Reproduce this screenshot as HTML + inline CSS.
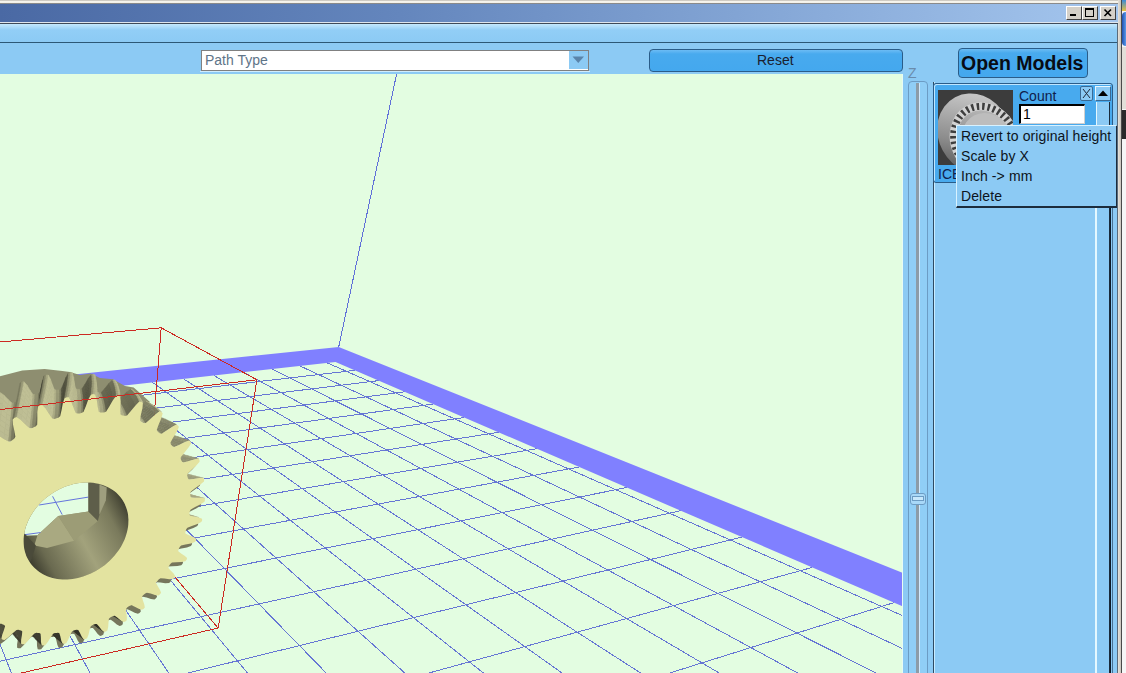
<!DOCTYPE html><html><head><meta charset="utf-8"><style>
*{margin:0;padding:0;box-sizing:border-box}
body{width:1126px;height:673px;overflow:hidden;position:relative;background:#8ccaf4;font-family:"Liberation Sans",sans-serif}
.a{position:absolute}
</style></head><body><div class="a" style="left:0;top:0;width:1126px;height:4px;background:linear-gradient(#cfcbc3 0,#cfcbc3 1px,#f7f5ee 1px,#f2f0e8 3px,#8a8a8a 3px)"></div><div class="a" style="left:0;top:4px;width:1118px;height:18px;background:linear-gradient(90deg,#4a69a4 0,#6486bd 400px,#a4c6ee 1118px)"></div><div class="a" style="left:0;top:22px;width:1118px;height:1px;background:#dfe6ee"></div><div class="a" style="left:0;top:23px;width:1118px;height:1px;background:#3f4a58"></div><div class="a" style="left:1066px;top:6px;width:16px;height:14px;background:#d4d0c8;border-top:1px solid #fff;border-left:1px solid #fff;border-right:1px solid #404040;border-bottom:1px solid #404040"></div><div class="a" style="left:1082px;top:6px;width:16px;height:14px;background:#d4d0c8;border-top:1px solid #fff;border-left:1px solid #fff;border-right:1px solid #404040;border-bottom:1px solid #404040"></div><div class="a" style="left:1100px;top:6px;width:16px;height:14px;background:#d4d0c8;border-top:1px solid #fff;border-left:1px solid #fff;border-right:1px solid #404040;border-bottom:1px solid #404040"></div><div class="a" style="left:1070px;top:14px;width:6px;height:2px;background:#000"></div><div class="a" style="left:1085px;top:8px;width:9px;height:9px;border:1px solid #000;border-top-width:2px"></div><svg class="a" style="left:1103px;top:8px" width="10" height="10"><path d="M1.5 1.5 L8 8 M8 1.5 L1.5 8" stroke="#000" stroke-width="1.6"/></svg><div class="a" style="left:0;top:24px;width:1118px;height:18px;background:linear-gradient(#c4e8fd,#92cef6 6px,#8ccaf4)"></div><div class="a" style="left:0;top:42px;width:1118px;height:1px;background:#2c5876"></div><div class="a" style="left:200px;top:71px;width:390px;height:1px;background:#d0ecfc"></div><div class="a" style="left:201px;top:50px;width:388px;height:21px;background:#fff;border:1px solid #808080;border-right-color:#808080"></div><div class="a" style="left:569px;top:51px;width:19px;height:18px;background:#8ccaf4"></div><svg class="a" style="left:572px;top:56px" width="13" height="8"><path d="M0.5 0.5 L12 0.5 L6.25 7 Z" fill="#5a84aa"/></svg><div class="a" style="left:205px;top:52px;font-size:14px;color:#5e7488;line-height:16px">Path Type</div><div class="a" style="left:649px;top:49px;width:254px;height:23px;border:1px solid #2a5c88;border-radius:4px;background:linear-gradient(#6cbcf4,#48aaee 4px,#44a8ee)"></div><div class="a" style="left:757px;top:52px;font-size:14px;color:#1a2030;line-height:16px">Reset</div><svg class="a" style="left:0;top:74px" width="903" height="599" viewBox="0 0 903 599"><rect width="903" height="599" fill="#e3fde1"/><g stroke="#6676d4" stroke-width="1.0" fill="none" shape-rendering="crispEdges"><line x1="327.22" y1="288.88" x2="17190.68" y2="7697.76"/><line x1="300.01" y1="291.92" x2="16085.04" y2="7696.60"/><line x1="272.08" y1="295.04" x2="14979.40" y2="7695.44"/><line x1="243.39" y1="298.24" x2="13873.76" y2="7694.28"/><line x1="213.91" y1="301.53" x2="12768.12" y2="7693.11"/><line x1="183.62" y1="304.92" x2="11662.48" y2="7691.95"/><line x1="152.47" y1="308.39" x2="10556.84" y2="7690.79"/><line x1="120.43" y1="311.97" x2="9451.20" y2="7689.63"/><line x1="87.45" y1="315.65" x2="8345.56" y2="7688.47"/><line x1="53.51" y1="319.44" x2="7239.92" y2="7687.31"/><line x1="18.56" y1="323.35" x2="6134.28" y2="7686.15"/><line x1="-17.46" y1="327.37" x2="5028.64" y2="7684.98"/><line x1="-54.59" y1="331.51" x2="3923.00" y2="7683.82"/><line x1="-92.88" y1="335.79" x2="2817.36" y2="7682.66"/><line x1="-132.38" y1="340.20" x2="1711.72" y2="7681.50"/><line x1="-173.17" y1="344.75" x2="606.08" y2="7680.34"/><line x1="-215.29" y1="349.46" x2="-499.56" y2="7679.18"/><line x1="-258.81" y1="354.32" x2="-1605.20" y2="7678.01"/><line x1="-303.82" y1="359.34" x2="-2710.84" y2="7676.85"/><line x1="-350.38" y1="364.54" x2="-3816.48" y2="7675.69"/><line x1="-398.57" y1="369.92" x2="-4922.12" y2="7674.53"/><line x1="-448.49" y1="375.50" x2="-6027.76" y2="7673.37"/><line x1="-500.23" y1="381.27" x2="-7133.40" y2="7672.21"/><line x1="-553.89" y1="387.26" x2="-8239.04" y2="7671.05"/><line x1="-609.57" y1="393.48" x2="-9344.68" y2="7669.88"/><line x1="-667.40" y1="399.94" x2="-10450.32" y2="7668.72"/><line x1="-727.51" y1="406.65" x2="-11555.96" y2="7667.56"/><line x1="-790.02" y1="413.63" x2="-12661.60" y2="7666.40"/><line x1="-855.08" y1="420.90" x2="-13767.24" y2="7665.24"/><line x1="-922.86" y1="428.46" x2="-14872.88" y2="7664.08"/><line x1="-993.54" y1="436.35" x2="-15978.52" y2="7662.91"/><line x1="-1067.29" y1="444.59" x2="-17084.16" y2="7661.75"/><line x1="-1144.32" y1="453.19" x2="-18189.80" y2="7660.59"/><line x1="-1224.87" y1="462.18" x2="-19295.44" y2="7659.43"/><line x1="-1309.16" y1="471.60" x2="-20401.08" y2="7658.27"/><line x1="-1397.48" y1="481.46" x2="-21506.72" y2="7657.11"/><line x1="-1490.12" y1="491.80" x2="-22612.36" y2="7655.95"/><line x1="-1587.40" y1="502.66" x2="-23718.00" y2="7654.78"/><line x1="-1689.68" y1="514.08" x2="-24823.64" y2="7653.62"/><line x1="354.93" y1="296.33" x2="-62283.01" y2="7614.27"/><line x1="378.77" y1="306.60" x2="-58910.83" y2="7617.81"/><line x1="404.74" y1="317.79" x2="-55538.65" y2="7621.35"/><line x1="433.13" y1="330.02" x2="-52166.46" y2="7624.90"/><line x1="464.29" y1="343.45" x2="-48794.28" y2="7628.44"/><line x1="498.67" y1="358.26" x2="-45422.10" y2="7631.98"/><line x1="536.77" y1="374.67" x2="-42049.92" y2="7635.52"/><line x1="579.24" y1="392.97" x2="-38677.73" y2="7639.07"/><line x1="626.88" y1="413.50" x2="-35305.55" y2="7642.61"/><line x1="680.69" y1="436.69" x2="-31933.37" y2="7646.15"/><line x1="741.95" y1="463.08" x2="-28561.19" y2="7649.70"/><line x1="812.33" y1="493.41" x2="-25189.00" y2="7653.24"/><line x1="894.03" y1="528.61" x2="-21816.82" y2="7656.78"/><line x1="990.01" y1="569.96" x2="-18444.64" y2="7660.32"/><line x1="1104.37" y1="619.24" x2="-15072.45" y2="7663.87"/><line x1="1242.98" y1="678.96" x2="-11700.27" y2="7667.41"/><line x1="1414.42" y1="752.83" x2="-8328.09" y2="7670.95"/><line x1="1631.97" y1="846.57" x2="-4955.91" y2="7674.49"/><line x1="1917.08" y1="969.42" x2="-1583.72" y2="7678.04"/><line x1="2307.03" y1="1137.44" x2="1788.46" y2="7681.58"/><line x1="2872.68" y1="1381.16" x2="5160.64" y2="7685.12"/><line x1="3767.28" y1="1766.62" x2="8532.82" y2="7688.66"/><line x1="5395.46" y1="2468.17" x2="11905.01" y2="7692.21"/><line x1="9286.51" y1="4144.73" x2="15277.19" y2="7695.75"/></g><polygon fill="#8080ff" points="-6475.52,1048.46 335.51,287.96 8677.29,3882.23 10598.00,4382.66 338.70,272.90 -6802.20,1019.13"/><line x1="338.70" y1="272.90" x2="1137.30" y2="-3490.40" stroke="#6070d8" stroke-width="1" shape-rendering="crispEdges"/><line x1="144.06" y1="466.56" x2="161.23" y2="253.83" stroke="#cc2a22" stroke-width="1.0" shape-rendering="crispEdges"/><line x1="144.06" y1="466.56" x2="218.16" y2="554.10" stroke="#cc2a22" stroke-width="1.0" shape-rendering="crispEdges"/><line x1="161.23" y1="253.83" x2="256.87" y2="305.77" stroke="#cc2a22" stroke-width="1.0" shape-rendering="crispEdges"/><line x1="161.23" y1="253.83" x2="-75.69" y2="274.59" stroke="#cc2a22" stroke-width="1.0" shape-rendering="crispEdges"/><line x1="144.06" y1="466.56" x2="-54.64" y2="502.64" stroke="#cc2a22" stroke-width="1.0" shape-rendering="crispEdges"/><defs><clipPath id="hc"><path d="M128.4,448.2 L128.3,450.7 L128.0,453.1 L127.6,455.6 L127.0,458.0 L126.3,460.5 L125.5,462.9 L124.6,465.4 L123.5,467.7 L122.4,470.1 L121.1,472.4 L119.7,474.7 L118.1,477.0 L116.5,479.1 L114.8,481.3 L113.0,483.3 L111.1,485.3 L109.1,487.2 L107.1,489.1 L104.9,490.9 L102.7,492.5 L100.4,494.1 L98.1,495.6 L95.7,497.0 L93.2,498.3 L90.8,499.5 L88.2,500.6 L85.7,501.6 L83.1,502.5 L80.5,503.3 L77.9,503.9 L75.3,504.5 L72.6,504.9 L70.0,505.2 L67.4,505.4 L64.8,505.4 L62.3,505.4 L59.7,505.2 L57.2,504.9 L54.8,504.4 L52.4,503.9 L50.0,503.2 L47.7,502.4 L45.5,501.4 L43.4,500.4 L41.3,499.2 L39.3,498.0 L37.4,496.6 L35.7,495.1 L34.0,493.5 L32.4,491.8 L30.9,490.0 L29.6,488.1 L28.4,486.1 L27.3,484.0 L26.3,481.9 L25.5,479.6 L24.8,477.3 L24.3,475.0 L23.9,472.5 L23.7,470.1 L23.6,467.6 L23.6,465.0 L23.8,462.4 L24.2,459.8 L24.7,457.2 L25.3,454.6 L26.1,452.0 L27.1,449.4 L28.2,446.8 L29.5,444.2 L30.8,441.7 L32.4,439.2 L34.0,436.7 L35.8,434.3 L37.7,432.0 L39.7,429.8 L41.9,427.6 L44.1,425.5 L46.5,423.6 L48.9,421.7 L51.4,419.9 L54.0,418.2 L56.7,416.7 L59.4,415.3 L62.1,414.0 L64.9,412.8 L67.8,411.8 L70.6,410.9 L73.5,410.1 L76.4,409.5 L79.3,409.0 L82.1,408.7 L85.0,408.5 L87.8,408.5 L90.5,408.6 L93.2,408.8 L95.9,409.2 L98.5,409.8 L101.0,410.4 L103.5,411.2 L105.8,412.2 L108.1,413.2 L110.3,414.4 L112.4,415.7 L114.3,417.1 L116.2,418.6 L117.9,420.3 L119.5,422.0 L121.0,423.8 L122.4,425.7 L123.6,427.7 L124.7,429.8 L125.6,431.9 L126.4,434.1 L127.1,436.3 L127.7,438.6 L128.1,441.0 L128.3,443.4 L128.5,445.8 Z"/></clipPath></defs><polygon fill="#76765c" points="8.5,370.0 10.2,368.8 11.4,366.8 10.5,361.4 9.0,354.6 8.7,349.4 10.5,347.7 12.8,346.9 16.9,349.9 21.7,354.7 25.7,358.3 27.9,358.2 29.8,357.3 31.6,356.4 33.2,354.7 33.4,349.0 33.3,341.9 34.0,336.6 36.0,335.2 38.4,334.9 41.7,338.6 45.3,344.3 48.4,348.6 50.6,348.9 52.5,348.3 54.4,347.8 56.2,346.3 57.5,340.6 58.8,333.5 60.5,328.3 62.7,327.2 64.9,327.3 67.3,331.7 69.7,338.0 71.8,342.9 73.7,343.6 75.6,343.4 77.5,343.1 79.5,341.9 81.8,336.5 84.3,329.6 86.9,324.7 89.1,324.1 91.2,324.6 92.7,329.3 93.6,336.1 94.7,341.4 96.3,342.4 98.2,342.5 100.0,342.6 102.1,341.8 105.2,336.8 108.9,330.3 112.2,325.9 114.4,325.7 116.2,326.5 116.7,331.5 116.3,338.5 116.3,343.9 117.7,345.2 119.3,345.6 121.0,346.0 123.1,345.6 126.9,341.1 131.5,335.4 135.3,331.6 137.4,331.8 138.9,333.0 138.5,338.0 136.9,344.8 135.9,350.2 136.9,351.7 138.4,352.4 139.8,353.2 141.8,353.1 146.1,349.3 151.4,344.4 155.6,341.3 157.5,341.9 158.7,343.3 157.3,348.2 154.6,354.7 152.7,359.9 153.4,361.6 154.6,362.6 155.8,363.5 157.7,363.8 162.3,360.8 168.0,356.9 172.5,354.5 174.0,355.4 174.9,357.0 172.8,361.7 169.2,367.6 166.5,372.4 166.8,374.3 167.7,375.4 168.7,376.6 170.3,377.1 175.1,375.0 181.0,372.1 185.5,370.5 186.8,371.7 187.2,373.4 184.5,377.6 180.1,382.9 176.8,387.3 176.7,389.1 177.4,390.4 178.1,391.8 179.5,392.6 184.2,391.3 190.2,389.4 194.5,388.6 195.5,389.9 195.6,391.8 192.3,395.5 187.4,400.0 183.6,403.8 183.2,405.6 183.6,407.1 184.0,408.5 185.1,409.6 189.7,409.0 195.4,408.1 199.5,408.1 200.2,409.6 200.0,411.4 196.3,414.6 191.0,418.3 186.9,421.4 186.2,423.2 186.3,424.7 186.4,426.2 187.2,427.4 191.5,427.7 196.9,427.7 200.6,428.3 201.0,429.9 200.5,431.7 196.6,434.3 191.1,437.1 186.8,439.6 185.8,441.2 185.6,442.8 185.4,444.3 186.0,445.7 189.9,446.6 194.8,447.5 198.1,448.7 198.1,450.4 197.3,452.1 193.4,454.1 187.8,456.0 183.4,457.8 182.2,459.3 181.8,460.8 181.3,462.3 181.6,463.8 185.0,465.3 189.4,467.1 192.2,468.8 191.9,470.5 190.9,472.1 186.9,473.4 181.4,474.5 177.1,475.6 175.7,476.9 175.0,478.4 174.3,479.8 174.3,481.3 177.1,483.5 180.9,485.9 183.1,488.1 182.6,489.8 181.3,491.2 177.4,491.9 172.2,492.2 168.0,492.5 166.5,493.7 165.6,495.0 164.7,496.4 164.4,498.0 166.6,500.6 169.6,503.6 171.3,506.2 170.5,507.8 169.1,509.1 165.3,509.2 160.5,508.6 156.5,508.3 154.9,509.3 153.8,510.5 152.8,511.8 152.2,513.3 153.8,516.3 156.0,519.9 157.1,522.8 156.0,524.3 154.5,525.4 151.0,524.9 146.6,523.6 142.9,522.7 141.2,523.4 140.0,524.5 138.8,525.6 138.0,527.1 138.9,530.4 140.3,534.4 140.8,537.6 139.5,538.9 137.9,539.8 134.7,538.8 130.8,536.7 127.5,535.2 125.9,535.7 124.5,536.6 123.1,537.6 122.1,539.0 122.3,542.5 122.9,546.9 122.8,550.2 121.3,551.4 119.6,552.1 116.8,550.5 113.6,547.8 110.8,545.8 109.1,546.0 107.6,546.8 106.2,547.5 104.9,548.8 104.5,552.5 104.2,557.1 103.4,560.5 101.8,561.5 100.1,562.0 97.7,559.9 95.1,556.6 92.9,554.1 91.2,554.1 89.7,554.6 88.2,555.2 86.8,556.3 85.6,560.1 84.5,564.8 83.1,568.2 81.4,569.1 79.6,569.3 77.8,566.8 76.0,563.0 74.3,560.0 72.7,559.7 71.2,560.1 69.6,560.4 68.0,561.4 66.2,565.1 64.2,569.8 62.2,573.2 60.4,573.8 58.7,573.8 57.4,570.9 56.4,566.6 55.4,563.3 54.0,562.8 52.4,562.9 50.8,563.0 49.1,563.8 46.6,567.4 43.8,572.0 41.2,575.2 39.3,575.6 37.7,575.3 37.0,572.1 36.9,567.5 36.6,563.8 35.3,563.0 33.8,562.9 32.3,562.8 30.4,563.4 27.3,566.8 23.6,571.2 20.5,574.2 18.6,574.3 17.1,573.7 17.1,570.2 17.9,565.4 18.3,561.5 17.2,560.5 15.8,560.2 14.3,559.8 12.5,560.1 8.7,563.2 4.3,567.2 0.6,569.9 -1.2,569.7 -2.6,568.8 -1.9,565.2 -0.1,560.3 1.1,556.3 0.2,555.0 -1.1,554.4 -2.5,553.8 -4.3,553.8 -8.6,556.5 -13.8,560.1 -17.9,562.3 -19.7,561.9 -20.8,560.7 -19.4,557.0 -16.7,552.1 -14.6,548.1 -15.2,546.7 -16.4,545.8 -17.6,545.0 -19.5,544.7 -24.2,546.9 -30.0,549.8 -34.5,551.5 -36.1,550.7 -37.0,549.4 -34.9,545.7 -31.1,540.9 -28.4,537.0 -28.6,535.4 -29.7,534.4 -30.6,533.3 -32.4,532.7 -37.5,534.2 -43.8,536.4 -48.6,537.5 -50.0,536.4 -50.6,534.8 -47.7,531.3 -43.1,526.9 -39.5,523.2 -39.5,521.5 -40.2,520.2 -41.0,519.0 -42.6,518.1 -47.9,518.9 -54.5,520.1 -59.5,520.5 -60.7,519.1 -60.9,517.4 -57.4,514.1 -51.8,510.2 -47.6,507.0 -47.2,505.2 -47.7,503.7 -48.2,502.3 -49.5,501.1 -54.9,501.0 -61.7,501.3 -66.7,500.8 -67.6,499.2 -67.5,497.4 -63.3,494.5 -57.0,491.4 -52.1,488.7 -51.4,486.9 -51.6,485.3 -51.7,483.6 -52.8,482.2 -58.1,481.3 -64.9,480.4 -69.6,479.1 -70.2,477.3 -69.7,475.3 -65.0,473.1 -58.1,470.8 -52.8,468.8 -51.7,467.0 -51.5,465.3 -51.3,463.6 -52.1,461.9 -57.1,460.1 -63.6,458.0 -68.0,455.9 -68.2,453.9 -67.3,451.9 -62.1,450.4 -55.0,449.2 -49.3,448.0 -47.9,446.4 -47.4,444.6 -46.8,442.9 -47.2,441.0 -51.7,438.2 -57.6,435.0 -61.5,432.0 -61.3,429.9 -60.0,428.0 -54.6,427.3 -47.4,427.3 -41.6,427.0 -39.8,425.6 -39.0,423.9 -38.1,422.2 -38.1,420.2 -41.9,416.5 -47.0,412.2 -50.2,408.4 -49.5,406.3 -47.9,404.6 -42.5,404.8 -35.4,406.0 -29.8,406.8 -27.8,405.6 -26.6,404.0 -25.4,402.4 -25.0,400.3 -28.0,395.9 -32.0,390.6 -34.4,386.1 -33.3,384.1 -31.3,382.6 -26.1,383.8 -19.5,386.3 -14.2,388.0 -12.1,387.2 -10.6,385.7 -9.1,384.3 -8.3,382.3 -10.3,377.3 -13.1,371.1 -14.5,366.2 -13.0,364.2 -10.8,363.1 -6.1,365.2 -0.2,368.9 4.5,371.6 6.8,371.2"/><polygon fill="#8e8e70" points="-5.0,304.0 0.0,302.3 22.3,296.4 44.6,294.9 62.4,297.1 70.0,298.0 80.0,301.0 90.6,299.4 100.0,304.0 112.9,305.3 125.0,312.0 133.7,313.5 150.0,328.0 120.0,346.0 40.0,346.0 -5.0,376.0"/><polygon fill="#858568" stroke="#858568" stroke-width="0.5" points="15.4,332.6 17.1,331.7 17.4,327.4 15.7,328.2"/><polygon fill="#686851" stroke="#686851" stroke-width="0.5" points="17.1,331.7 18.5,330.1 18.9,325.8 17.4,327.4"/><polygon fill="#7b7b60" stroke="#7b7b60" stroke-width="0.5" points="19.1,313.3 21.0,312.0 21.7,307.9 19.9,309.2"/><polygon fill="#9a9a78" stroke="#9a9a78" stroke-width="0.5" points="21.0,312.0 23.2,311.7 23.9,307.7 21.7,307.9"/><polygon fill="#bfbf95" stroke="#bfbf95" stroke-width="0.5" points="23.2,311.7 26.3,315.1 26.9,311.1 23.9,307.7"/><polygon fill="#bfbf95" stroke="#bfbf95" stroke-width="0.5" points="26.3,315.1 29.8,320.4 30.1,316.4 26.9,311.1"/><polygon fill="#bfbf95" stroke="#bfbf95" stroke-width="0.5" points="29.8,320.4 32.7,324.3 32.9,320.4 30.1,316.4"/><polygon fill="#abab85" stroke="#abab85" stroke-width="0.5" points="32.7,324.3 34.7,324.6 34.9,320.7 32.9,320.4"/><polygon fill="#909070" stroke="#909070" stroke-width="0.5" points="34.7,324.6 36.4,324.0 36.6,320.2 34.9,320.7"/><polygon fill="#919171" stroke="#919171" stroke-width="0.5" points="36.4,324.0 38.2,323.5 38.4,319.7 36.6,320.2"/><polygon fill="#74745a" stroke="#74745a" stroke-width="0.5" points="38.2,323.5 39.9,322.1 40.0,318.4 38.4,319.7"/><polygon fill="#494939" stroke="#494939" stroke-width="0.5" points="39.9,322.1 41.0,316.8 41.3,313.2 40.0,318.4"/><polygon fill="#464637" stroke="#464637" stroke-width="0.5" points="41.0,316.8 42.1,310.2 42.6,306.6 41.3,313.2"/><polygon fill="#4e4e3d" stroke="#4e4e3d" stroke-width="0.5" points="42.1,310.2 43.6,305.3 44.2,301.8 42.6,306.6"/><polygon fill="#878769" stroke="#878769" stroke-width="0.5" points="43.6,305.3 45.7,304.4 46.2,300.9 44.2,301.8"/><polygon fill="#a5a580" stroke="#a5a580" stroke-width="0.5" points="45.7,304.4 47.8,304.4 48.3,301.0 46.2,300.9"/><polygon fill="#bfbf95" stroke="#bfbf95" stroke-width="0.5" points="47.8,304.4 50.1,308.4 50.4,305.1 48.3,301.0"/><polygon fill="#bcbc93" stroke="#bcbc93" stroke-width="0.5" points="50.1,308.4 52.3,314.3 52.5,310.9 50.4,305.1"/><polygon fill="#bdbd94" stroke="#bdbd94" stroke-width="0.5" points="52.3,314.3 54.3,318.8 54.3,315.5 52.5,310.9"/><polygon fill="#b4b48c" stroke="#b4b48c" stroke-width="0.5" points="54.3,318.8 56.1,319.4 56.1,316.1 54.3,315.5"/><polygon fill="#9b9b79" stroke="#9b9b79" stroke-width="0.5" points="56.1,319.4 57.9,319.2 57.8,315.9 56.1,316.1"/><polygon fill="#9c9c79" stroke="#9c9c79" stroke-width="0.5" points="57.9,319.2 59.7,318.9 59.6,315.7 57.8,315.9"/><polygon fill="#7f7f63" stroke="#7f7f63" stroke-width="0.5" points="59.7,318.9 61.5,317.8 61.4,314.7 59.6,315.7"/><polygon fill="#535341" stroke="#535341" stroke-width="0.5" points="61.5,317.8 63.6,312.8 63.5,309.7 61.4,314.7"/><polygon fill="#50503f" stroke="#50503f" stroke-width="0.5" points="63.6,312.8 65.9,306.3 66.0,303.4 63.5,309.7"/><polygon fill="#595945" stroke="#595945" stroke-width="0.5" points="65.9,306.3 68.2,301.7 68.4,298.9 66.0,303.4"/><polygon fill="#929272" stroke="#929272" stroke-width="0.5" points="68.2,301.7 70.3,301.2 70.4,298.4 68.4,298.9"/><polygon fill="#afaf88" stroke="#afaf88" stroke-width="0.5" points="70.3,301.2 72.2,301.6 72.3,298.8 70.4,298.4"/><polygon fill="#bbbb92" stroke="#bbbb92" stroke-width="0.5" points="72.2,301.6 73.6,306.0 73.6,303.2 72.3,298.8"/><polygon fill="#b7b78e" stroke="#b7b78e" stroke-width="0.5" points="73.6,306.0 74.6,312.3 74.4,309.4 73.6,303.2"/><polygon fill="#b8b890" stroke="#b8b890" stroke-width="0.5" points="74.6,312.3 75.6,317.1 75.3,314.3 74.4,309.4"/><polygon fill="#bbbb91" stroke="#bbbb91" stroke-width="0.5" points="75.6,317.1 77.2,318.1 76.8,315.3 75.3,314.3"/><polygon fill="#a5a581" stroke="#a5a581" stroke-width="0.5" points="77.2,318.1 78.9,318.1 78.5,315.4 76.8,315.3"/><polygon fill="#a6a681" stroke="#a6a681" stroke-width="0.5" points="78.9,318.1 80.6,318.2 80.2,315.5 78.5,315.4"/><polygon fill="#8a8a6b" stroke="#8a8a6b" stroke-width="0.5" points="80.6,318.2 82.5,317.4 82.0,314.7 80.2,315.5"/><polygon fill="#5e5e49" stroke="#5e5e49" stroke-width="0.5" points="82.5,317.4 85.4,312.7 85.0,310.2 82.0,314.7"/><polygon fill="#5b5b47" stroke="#5b5b47" stroke-width="0.5" points="85.4,312.7 88.7,306.7 88.4,304.3 85.0,310.2"/><polygon fill="#63634d" stroke="#63634d" stroke-width="0.5" points="88.7,306.7 91.8,302.6 91.5,300.3 88.4,304.3"/><polygon fill="#9d9d7a" stroke="#9d9d7a" stroke-width="0.5" points="91.8,302.6 93.8,302.4 93.5,300.1 91.5,300.3"/><polygon fill="#b7b78f" stroke="#b7b78f" stroke-width="0.5" points="93.8,302.4 95.5,303.1 95.2,300.9 93.5,300.1"/><polygon fill="#bfbf95" stroke="#bfbf95" stroke-width="0.5" points="95.8,319.2 97.1,320.4 96.3,318.1 95.0,316.9"/><polygon fill="#afaf88" stroke="#afaf88" stroke-width="0.5" points="97.1,320.4 98.7,320.8 97.8,318.5 96.3,318.1"/><polygon fill="#b0b089" stroke="#b0b089" stroke-width="0.5" points="98.7,320.8 100.2,321.2 99.3,318.9 97.8,318.5"/><polygon fill="#959574" stroke="#959574" stroke-width="0.5" points="100.2,321.2 102.1,320.7 101.2,318.5 99.3,318.9"/><polygon fill="#686851" stroke="#686851" stroke-width="0.5" points="102.1,320.7 105.7,316.6 104.8,314.5 101.2,318.5"/><polygon fill="#65654f" stroke="#65654f" stroke-width="0.5" points="105.7,316.6 109.9,311.2 109.0,309.2 104.8,314.5"/><polygon fill="#6e6e56" stroke="#6e6e56" stroke-width="0.5" points="109.9,311.2 113.4,307.6 112.6,305.8 109.0,309.2"/><polygon fill="#a8a883" stroke="#a8a883" stroke-width="0.5" points="113.4,307.6 115.3,307.8 114.5,306.0 112.6,305.8"/><polygon fill="#bdbd93" stroke="#bdbd93" stroke-width="0.5" points="115.3,307.8 116.8,308.8 115.9,307.1 114.5,306.0"/><polygon fill="#b7b78f" stroke="#b7b78f" stroke-width="0.5" points="115.1,326.3 116.5,326.9 115.1,325.0 113.7,324.3"/><polygon fill="#b8b88f" stroke="#b8b88f" stroke-width="0.5" points="116.5,326.9 117.8,327.6 116.4,325.7 115.1,325.0"/><polygon fill="#a0a07c" stroke="#a0a07c" stroke-width="0.5" points="117.8,327.6 119.7,327.5 118.2,325.6 116.4,325.7"/><polygon fill="#737359" stroke="#737359" stroke-width="0.5" points="119.7,327.5 123.7,324.0 122.2,322.2 118.2,325.6"/><polygon fill="#707057" stroke="#707057" stroke-width="0.5" points="123.7,324.0 128.5,319.3 127.1,317.8 122.2,322.2"/><polygon fill="#79795e" stroke="#79795e" stroke-width="0.5" points="128.5,319.3 132.4,316.4 131.0,315.0 127.1,317.8"/><polygon fill="#b1b18a" stroke="#b1b18a" stroke-width="0.5" points="132.4,316.4 134.2,316.9 132.7,315.5 131.0,315.0"/><polygon fill="#bdbd93" stroke="#bdbd93" stroke-width="0.5" points="130.6,335.3 131.7,336.1 129.8,334.5 128.7,333.6"/><polygon fill="#bdbd93" stroke="#bdbd93" stroke-width="0.5" points="131.7,336.1 132.9,337.0 130.9,335.4 129.8,334.5"/><polygon fill="#aaaa84" stroke="#aaaa84" stroke-width="0.5" points="132.9,337.0 134.6,337.2 132.6,335.6 130.9,335.4"/><polygon fill="#7d7d61" stroke="#7d7d61" stroke-width="0.5" points="134.6,337.2 138.9,334.4 136.9,332.9 132.6,335.6"/><polygon fill="#7a7a5f" stroke="#7a7a5f" stroke-width="0.5" points="138.9,334.4 144.2,330.7 142.2,329.4 136.9,332.9"/><polygon fill="#838366" stroke="#838366" stroke-width="0.5" points="144.2,330.7 148.3,328.5 146.2,327.3 142.2,329.4"/><polygon fill="#b9b990" stroke="#b9b990" stroke-width="0.5" points="148.3,328.5 149.8,329.3 147.7,328.1 146.2,327.3"/><polygon fill="#b3b38b" stroke="#b3b38b" stroke-width="0.5" points="145.0,349.0 146.5,349.5 144.0,348.0 142.5,347.5"/><polygon fill="#88886a" stroke="#88886a" stroke-width="0.5" points="146.5,349.5 151.0,347.5 148.4,346.1 144.0,348.0"/><polygon fill="#858567" stroke="#858567" stroke-width="0.5" points="151.0,347.5 156.5,344.7 153.8,343.5 148.4,346.1"/><polygon fill="#8e8e6e" stroke="#8e8e6e" stroke-width="0.5" points="156.5,344.7 160.6,343.2 157.9,342.1 153.8,343.5"/><polygon fill="#929272" stroke="#929272" stroke-width="0.5" points="155.2,363.7 159.7,362.5 156.5,361.2 152.2,362.3"/><polygon fill="#8f8f6f" stroke="#8f8f6f" stroke-width="0.5" points="159.7,362.5 165.2,360.6 162.0,359.5 156.5,361.2"/><polygon fill="#989876" stroke="#989876" stroke-width="0.5" points="165.2,360.6 169.2,359.9 165.9,358.8 162.0,359.5"/><polygon fill="#9c9c7a" stroke="#9c9c7a" stroke-width="0.5" points="160.7,379.4 164.9,378.9 161.3,377.6 157.1,378.0"/><polygon fill="#999977" stroke="#999977" stroke-width="0.5" points="164.9,378.9 170.3,378.0 166.6,376.8 161.3,377.6"/><polygon fill="#a2a27e" stroke="#a2a27e" stroke-width="0.5" points="170.3,378.0 174.1,377.9 170.3,376.8 166.6,376.8"/><polygon fill="#a6a681" stroke="#a6a681" stroke-width="0.5" points="162.9,396.0 166.8,396.1 162.8,394.7 158.9,394.4"/><polygon fill="#a3a37f" stroke="#a3a37f" stroke-width="0.5" points="166.8,396.1 171.9,396.1 167.7,394.8 162.8,394.7"/><polygon fill="#acac86" stroke="#acac86" stroke-width="0.5" points="171.9,396.1 175.4,396.7 171.1,395.4 167.7,394.8"/><polygon fill="#afaf89" stroke="#afaf89" stroke-width="0.5" points="161.9,412.9 165.5,413.7 161.0,412.1 157.5,411.2"/><polygon fill="#acac86" stroke="#acac86" stroke-width="0.5" points="165.5,413.7 170.1,414.5 165.5,413.0 161.0,412.1"/><polygon fill="#313126" stroke="#313126" stroke-width="0.5" points="98.6,510.7 95.5,508.2 90.0,504.4 93.0,506.9"/><polygon fill="#333327" stroke="#333327" stroke-width="0.5" points="95.5,508.2 92.9,506.3 87.5,502.5 90.0,504.4"/><polygon fill="#313126" stroke="#313126" stroke-width="0.5" points="83.2,521.4 80.9,519.6 75.4,515.4 77.5,517.3"/><polygon fill="#303025" stroke="#303025" stroke-width="0.5" points="80.9,519.6 78.5,516.5 73.1,512.3 75.4,515.4"/><polygon fill="#303025" stroke="#303025" stroke-width="0.5" points="78.5,516.5 76.4,514.2 71.0,510.0 73.1,512.3"/><polygon fill="#303025" stroke="#303025" stroke-width="0.5" points="64.2,528.3 62.5,526.1 57.1,521.5 58.7,523.8"/><polygon fill="#313126" stroke="#313126" stroke-width="0.5" points="62.5,526.1 60.8,522.5 55.4,518.0 57.1,521.5"/><polygon fill="#303025" stroke="#303025" stroke-width="0.5" points="60.8,522.5 59.2,519.8 54.0,515.2 55.4,518.0"/><polygon fill="#313126" stroke="#313126" stroke-width="0.5" points="44.8,532.7 43.6,530.0 38.3,525.1 39.5,527.8"/><polygon fill="#36362a" stroke="#36362a" stroke-width="0.5" points="43.6,530.0 42.6,526.1 37.5,521.2 38.3,525.1"/><polygon fill="#343428" stroke="#343428" stroke-width="0.5" points="42.6,526.1 41.6,523.0 36.6,518.1 37.5,521.2"/><polygon fill="#36362a" stroke="#36362a" stroke-width="0.5" points="25.3,534.3 24.6,531.3 19.6,526.0 20.2,529.0"/><polygon fill="#3d3d2f" stroke="#3d3d2f" stroke-width="0.5" points="24.6,531.3 24.5,527.1 19.6,521.8 19.6,526.0"/><polygon fill="#3b3b2e" stroke="#3b3b2e" stroke-width="0.5" points="24.5,527.1 24.2,523.7 19.4,518.4 19.6,521.8"/><polygon fill="#3e3e30" stroke="#3e3e30" stroke-width="0.5" points="6.2,533.0 6.1,529.8 1.4,524.1 1.4,527.3"/><polygon fill="#464637" stroke="#464637" stroke-width="0.5" points="6.1,529.8 6.8,525.3 2.2,519.7 1.4,524.1"/><polygon fill="#434334" stroke="#434334" stroke-width="0.5" points="6.8,525.3 7.2,521.7 2.6,516.1 2.2,519.7"/><polygon fill="#474737" stroke="#474737" stroke-width="0.5" points="-12.2,528.7 -11.6,525.3 -16.0,519.3 -16.6,522.7"/><polygon fill="#50503e" stroke="#50503e" stroke-width="0.5" points="-11.6,525.3 -10.0,520.7 -14.3,514.8 -16.0,519.3"/><polygon fill="#4d4d3c" stroke="#4d4d3c" stroke-width="0.5" points="-10.0,520.7 -8.9,517.0 -13.1,511.1 -14.3,514.8"/><polygon fill="#51513f" stroke="#51513f" stroke-width="0.5" points="-29.2,521.3 -28.0,517.9 -31.9,511.6 -33.3,515.0"/><polygon fill="#5a5a46" stroke="#5a5a46" stroke-width="0.5" points="-28.0,517.9 -25.4,513.3 -29.3,507.1 -31.9,511.6"/><polygon fill="#575744" stroke="#575744" stroke-width="0.5" points="-25.4,513.3 -23.6,509.6 -27.4,503.4 -29.3,507.1"/><polygon fill="#323227" stroke="#323227" stroke-width="0.5" points="-23.6,509.6 -24.2,508.3 -28.0,502.1 -27.4,503.4"/><polygon fill="#5b5b47" stroke="#5b5b47" stroke-width="0.5" points="-44.4,511.0 -42.5,507.5 -46.0,501.0 -48.0,504.3"/><polygon fill="#65654f" stroke="#65654f" stroke-width="0.5" points="-42.5,507.5 -39.0,503.1 -42.5,496.6 -46.0,501.0"/><polygon fill="#62624c" stroke="#62624c" stroke-width="0.5" points="-39.0,503.1 -36.5,499.5 -39.9,493.0 -42.5,496.6"/><polygon fill="#37372b" stroke="#37372b" stroke-width="0.5" points="-36.5,499.5 -36.8,498.0 -40.1,491.6 -39.9,493.0"/><polygon fill="#323227" stroke="#323227" stroke-width="0.5" points="-56.6,499.1 -57.2,497.7 -60.3,490.8 -59.7,492.3"/><polygon fill="#666650" stroke="#666650" stroke-width="0.5" points="-57.2,497.7 -54.5,494.4 -57.6,487.6 -60.3,490.8"/><polygon fill="#6f6f57" stroke="#6f6f57" stroke-width="0.5" points="-54.5,494.4 -50.3,490.2 -53.2,483.6 -57.6,487.6"/><polygon fill="#6c6c54" stroke="#6c6c54" stroke-width="0.5" points="-50.3,490.2 -47.0,486.8 -49.9,480.2 -53.2,483.6"/><polygon fill="#3f3f31" stroke="#3f3f31" stroke-width="0.5" points="-47.0,486.8 -47.0,485.3 -49.9,478.7 -49.9,480.2"/><polygon fill="#38382c" stroke="#38382c" stroke-width="0.5" points="-66.7,483.2 -67.0,481.6 -69.5,474.6 -69.3,476.2"/><polygon fill="#717158" stroke="#717158" stroke-width="0.5" points="-67.0,481.6 -63.7,478.6 -66.2,471.6 -69.5,474.6"/><polygon fill="#7a7a5f" stroke="#7a7a5f" stroke-width="0.5" points="-63.7,478.6 -58.6,474.9 -61.1,468.1 -66.2,471.6"/><polygon fill="#77775d" stroke="#77775d" stroke-width="0.5" points="-58.6,474.9 -54.7,471.9 -57.1,465.2 -61.1,468.1"/><polygon fill="#494939" stroke="#494939" stroke-width="0.5" points="-54.7,471.9 -54.4,470.2 -56.8,463.5 -57.1,465.2"/><polygon fill="#333328" stroke="#333328" stroke-width="0.5" points="-54.4,470.2 -54.8,468.9 -57.2,462.2 -56.8,463.5"/><polygon fill="#343428" stroke="#343428" stroke-width="0.5" points="-54.8,468.9 -55.3,467.5 -57.6,460.8 -57.2,462.2"/><polygon fill="#414132" stroke="#414132" stroke-width="0.5" points="-73.4,464.9 -73.3,463.2 -75.3,456.1 -75.4,457.8"/><polygon fill="#7b7b60" stroke="#7b7b60" stroke-width="0.5" points="-73.3,463.2 -69.4,460.5 -71.4,453.5 -75.3,456.1"/><polygon fill="#848467" stroke="#848467" stroke-width="0.5" points="-69.4,460.5 -63.6,457.5 -65.6,450.7 -71.4,453.5"/><polygon fill="#818165" stroke="#818165" stroke-width="0.5" points="-63.6,457.5 -59.2,455.0 -61.1,448.2 -65.6,450.7"/><polygon fill="#535341" stroke="#535341" stroke-width="0.5" points="-59.2,455.0 -58.5,453.3 -60.4,446.6 -61.1,448.2"/><polygon fill="#3a3a2d" stroke="#3a3a2d" stroke-width="0.5" points="-58.5,453.3 -58.7,451.9 -60.5,445.1 -60.4,446.6"/><polygon fill="#3a3a2d" stroke="#3a3a2d" stroke-width="0.5" points="-58.7,451.9 -58.8,450.4 -60.6,443.6 -60.5,445.1"/><polygon fill="#4b4b3a" stroke="#4b4b3a" stroke-width="0.5" points="-76.1,444.6 -75.6,442.8 -77.0,435.7 -77.5,437.5"/><polygon fill="#868668" stroke="#868668" stroke-width="0.5" points="-75.6,442.8 -71.2,440.7 -72.6,433.7 -77.0,435.7"/><polygon fill="#8e8e6f" stroke="#8e8e6f" stroke-width="0.5" points="-71.2,440.7 -64.9,438.5 -66.3,431.7 -72.6,433.7"/><polygon fill="#8c8c6d" stroke="#8c8c6d" stroke-width="0.5" points="-64.9,438.5 -60.0,436.6 -61.4,429.9 -66.3,431.7"/><polygon fill="#5e5e49" stroke="#5e5e49" stroke-width="0.5" points="-60.0,436.6 -59.0,435.0 -60.4,428.3 -61.4,429.9"/><polygon fill="#424234" stroke="#424234" stroke-width="0.5" points="-59.0,435.0 -58.9,433.4 -60.2,426.7 -60.4,428.3"/><polygon fill="#434334" stroke="#434334" stroke-width="0.5" points="-58.9,433.4 -58.7,431.8 -60.0,425.2 -60.2,426.7"/><polygon fill="#3a3a2d" stroke="#3a3a2d" stroke-width="0.5" points="-74.3,424.8 -74.5,423.0 -75.3,416.0 -75.2,417.9"/><polygon fill="#565643" stroke="#565643" stroke-width="0.5" points="-74.5,423.0 -73.6,421.2 -74.5,414.2 -75.3,416.0"/><polygon fill="#909070" stroke="#909070" stroke-width="0.5" points="-73.6,421.2 -68.9,419.7 -69.7,412.8 -74.5,414.2"/><polygon fill="#999977" stroke="#999977" stroke-width="0.5" points="-68.9,419.7 -62.2,418.5 -63.1,411.8 -69.7,412.8"/><polygon fill="#969675" stroke="#969675" stroke-width="0.5" points="-62.2,418.5 -57.0,417.4 -57.9,410.8 -63.1,411.8"/><polygon fill="#696952" stroke="#696952" stroke-width="0.5" points="-57.0,417.4 -55.7,415.8 -56.6,409.3 -57.9,410.8"/><polygon fill="#4c4c3b" stroke="#4c4c3b" stroke-width="0.5" points="-55.7,415.8 -55.2,414.2 -56.1,407.7 -56.6,409.3"/><polygon fill="#4d4d3c" stroke="#4d4d3c" stroke-width="0.5" points="-55.2,414.2 -54.8,412.6 -55.6,406.1 -56.1,407.7"/><polygon fill="#434334" stroke="#434334" stroke-width="0.5" points="-68.6,402.7 -68.3,400.7 -68.7,394.0 -69.0,395.9"/><polygon fill="#61614c" stroke="#61614c" stroke-width="0.5" points="-68.3,400.7 -67.2,399.0 -67.5,392.3 -68.7,394.0"/><polygon fill="#9b9b79" stroke="#9b9b79" stroke-width="0.5" points="-67.2,399.0 -62.2,398.3 -62.5,391.7 -67.5,392.3"/><polygon fill="#a3a37f" stroke="#a3a37f" stroke-width="0.5" points="-62.2,398.3 -55.5,398.2 -55.9,391.7 -62.5,391.7"/><polygon fill="#a0a07d" stroke="#a0a07d" stroke-width="0.5" points="-55.5,398.2 -50.1,397.9 -50.6,391.6 -55.9,391.7"/><polygon fill="#75755b" stroke="#75755b" stroke-width="0.5" points="-50.1,397.9 -48.5,396.6 -49.0,390.3 -50.6,391.6"/><polygon fill="#575744" stroke="#575744" stroke-width="0.5" points="-48.5,396.6 -47.7,395.0 -48.2,388.7 -49.0,390.3"/><polygon fill="#585845" stroke="#585845" stroke-width="0.5" points="-47.7,395.0 -46.9,393.4 -47.3,387.2 -48.2,388.7"/><polygon fill="#3e3e30" stroke="#3e3e30" stroke-width="0.5" points="-46.9,393.4 -46.9,391.5 -47.3,385.3 -47.3,387.2"/><polygon fill="#4e4e3d" stroke="#4e4e3d" stroke-width="0.5" points="-58.3,380.8 -57.7,378.8 -57.6,372.4 -58.3,374.3"/><polygon fill="#6d6d55" stroke="#6d6d55" stroke-width="0.5" points="-57.7,378.8 -56.2,377.2 -56.1,370.8 -57.6,372.4"/><polygon fill="#a5a580" stroke="#a5a580" stroke-width="0.5" points="-56.2,377.2 -51.2,377.3 -51.1,371.1 -56.1,370.8"/><polygon fill="#acac86" stroke="#acac86" stroke-width="0.5" points="-51.2,377.3 -44.6,378.4 -44.7,372.3 -51.1,371.1"/><polygon fill="#aaaa84" stroke="#aaaa84" stroke-width="0.5" points="-44.6,378.4 -39.4,379.0 -39.5,373.0 -44.7,372.3"/><polygon fill="#808064" stroke="#808064" stroke-width="0.5" points="-39.4,379.0 -37.5,377.9 -37.7,372.0 -39.5,373.0"/><polygon fill="#63634d" stroke="#63634d" stroke-width="0.5" points="-37.5,377.9 -36.5,376.4 -36.6,370.5 -37.7,372.0"/><polygon fill="#64644e" stroke="#64644e" stroke-width="0.5" points="-36.5,376.4 -35.4,374.9 -35.4,369.1 -36.6,370.5"/><polygon fill="#484838" stroke="#484838" stroke-width="0.5" points="-35.4,374.9 -35.0,373.0 -35.0,367.1 -35.4,369.1"/><polygon fill="#595945" stroke="#595945" stroke-width="0.5" points="-43.9,360.0 -42.9,358.0 -42.4,352.1 -43.4,354.0"/><polygon fill="#78785e" stroke="#78785e" stroke-width="0.5" points="-42.9,358.0 -41.1,356.7 -40.6,350.8 -42.4,352.1"/><polygon fill="#aeae88" stroke="#aeae88" stroke-width="0.5" points="-41.1,356.7 -36.2,357.7 -35.8,351.9 -40.6,350.8"/><polygon fill="#b4b48d" stroke="#b4b48d" stroke-width="0.5" points="-36.2,357.7 -30.1,360.0 -29.8,354.3 -35.8,351.9"/><polygon fill="#b2b28b" stroke="#b2b28b" stroke-width="0.5" points="-30.1,360.0 -25.1,361.5 -25.0,356.0 -29.8,354.3"/><polygon fill="#8b8b6c" stroke="#8b8b6c" stroke-width="0.5" points="-25.1,361.5 -23.1,360.7 -23.0,355.2 -25.0,356.0"/><polygon fill="#6e6e56" stroke="#6e6e56" stroke-width="0.5" points="-23.1,360.7 -21.8,359.4 -21.6,353.9 -23.0,355.2"/><polygon fill="#6f6f56" stroke="#6f6f56" stroke-width="0.5" points="-21.8,359.4 -20.4,358.0 -20.3,352.6 -21.6,353.9"/><polygon fill="#525240" stroke="#525240" stroke-width="0.5" points="-20.4,358.0 -19.7,356.1 -19.5,350.7 -20.3,352.6"/><polygon fill="#64644e" stroke="#64644e" stroke-width="0.5" points="-25.6,341.3 -24.3,339.5 -23.5,334.1 -24.9,335.8"/><polygon fill="#838366" stroke="#838366" stroke-width="0.5" points="-24.3,339.5 -22.3,338.4 -21.5,333.1 -23.5,334.1"/><polygon fill="#b6b68e" stroke="#b6b68e" stroke-width="0.5" points="-22.3,338.4 -17.8,340.3 -17.2,335.0 -21.5,333.1"/><polygon fill="#bbbb92" stroke="#bbbb92" stroke-width="0.5" points="-17.8,340.3 -12.4,343.7 -11.9,338.5 -17.2,335.0"/><polygon fill="#baba91" stroke="#baba91" stroke-width="0.5" points="-12.4,343.7 -7.9,346.1 -7.6,341.1 -11.9,338.5"/><polygon fill="#969675" stroke="#969675" stroke-width="0.5" points="-7.9,346.1 -5.8,345.7 -5.5,340.7 -7.6,341.1"/><polygon fill="#79795e" stroke="#79795e" stroke-width="0.5" points="-5.8,345.7 -4.3,344.5 -4.0,339.6 -5.5,340.7"/><polygon fill="#7a7a5f" stroke="#7a7a5f" stroke-width="0.5" points="-4.3,344.5 -2.7,343.4 -2.4,338.5 -4.0,339.6"/><polygon fill="#5d5d49" stroke="#5d5d49" stroke-width="0.5" points="-2.7,343.4 -1.6,341.6 -1.3,336.7 -2.4,338.5"/><polygon fill="#707057" stroke="#707057" stroke-width="0.5" points="-4.3,325.5 -2.7,323.9 -1.9,319.1 -3.5,320.7"/><polygon fill="#8f8f6f" stroke="#8f8f6f" stroke-width="0.5" points="-2.7,323.9 -0.5,323.2 0.3,318.5 -1.9,319.1"/><polygon fill="#bcbc93" stroke="#bcbc93" stroke-width="0.5" points="-0.5,323.2 3.3,325.9 4.0,321.2 0.3,318.5"/><polygon fill="#bfbf95" stroke="#bfbf95" stroke-width="0.5" points="3.3,325.9 7.9,330.3 8.4,325.7 4.0,321.2"/><polygon fill="#bebe94" stroke="#bebe94" stroke-width="0.5" points="7.9,330.3 11.7,333.6 12.0,329.1 8.4,325.7"/><polygon fill="#a1a17d" stroke="#a1a17d" stroke-width="0.5" points="11.7,333.6 13.7,333.5 14.0,329.0 12.0,329.1"/><polygon fill="#848467" stroke="#848467" stroke-width="0.5" points="13.7,333.5 15.4,332.6 15.7,328.2 14.0,329.0"/><polygon fill="#848467" stroke="#848467" stroke-width="0.5" points="15.1,337.1 16.8,336.2 17.1,331.7 15.4,332.6"/><polygon fill="#676750" stroke="#676750" stroke-width="0.5" points="16.8,336.2 18.2,334.5 18.5,330.1 17.1,331.7"/><polygon fill="#7a7a5f" stroke="#7a7a5f" stroke-width="0.5" points="18.3,317.6 20.2,316.2 21.0,312.0 19.1,313.3"/><polygon fill="#989877" stroke="#989877" stroke-width="0.5" points="20.2,316.2 22.4,315.8 23.2,311.7 21.0,312.0"/><polygon fill="#bfbf95" stroke="#bfbf95" stroke-width="0.5" points="22.4,315.8 25.7,319.2 26.3,315.1 23.2,311.7"/><polygon fill="#bfbf95" stroke="#bfbf95" stroke-width="0.5" points="25.7,319.2 29.3,324.4 29.8,320.4 26.3,315.1"/><polygon fill="#bfbf95" stroke="#bfbf95" stroke-width="0.5" points="29.3,324.4 32.4,328.3 32.7,324.3 29.8,320.4"/><polygon fill="#a9a984" stroke="#a9a984" stroke-width="0.5" points="32.4,328.3 34.4,328.6 34.7,324.6 32.7,324.3"/><polygon fill="#8e8e6f" stroke="#8e8e6f" stroke-width="0.5" points="34.4,328.6 36.2,327.9 36.4,324.0 34.7,324.6"/><polygon fill="#8f8f70" stroke="#8f8f70" stroke-width="0.5" points="36.2,327.9 38.0,327.3 38.2,323.5 36.4,324.0"/><polygon fill="#727259" stroke="#727259" stroke-width="0.5" points="38.0,327.3 39.6,325.9 39.9,322.1 38.2,323.5"/><polygon fill="#484838" stroke="#484838" stroke-width="0.5" points="39.6,325.9 40.7,320.6 41.0,316.8 39.9,322.1"/><polygon fill="#454536" stroke="#454536" stroke-width="0.5" points="40.7,320.6 41.6,313.8 42.1,310.2 41.0,316.8"/><polygon fill="#4d4d3c" stroke="#4d4d3c" stroke-width="0.5" points="41.6,313.8 43.0,308.9 43.6,305.3 42.1,310.2"/><polygon fill="#858568" stroke="#858568" stroke-width="0.5" points="43.0,308.9 45.1,307.9 45.7,304.4 43.6,305.3"/><polygon fill="#a3a37f" stroke="#a3a37f" stroke-width="0.5" points="45.1,307.9 47.2,307.9 47.8,304.4 45.7,304.4"/><polygon fill="#bfbf95" stroke="#bfbf95" stroke-width="0.5" points="47.2,307.9 49.7,311.9 50.1,308.4 47.8,304.4"/><polygon fill="#bdbd93" stroke="#bdbd93" stroke-width="0.5" points="49.7,311.9 52.1,317.7 52.3,314.3 50.1,308.4"/><polygon fill="#bebe94" stroke="#bebe94" stroke-width="0.5" points="52.1,317.7 54.2,322.2 54.3,318.8 52.3,314.3"/><polygon fill="#b2b28b" stroke="#b2b28b" stroke-width="0.5" points="54.2,322.2 56.1,322.8 56.1,319.4 54.3,318.8"/><polygon fill="#999977" stroke="#999977" stroke-width="0.5" points="56.1,322.8 57.9,322.5 57.9,319.2 56.1,319.4"/><polygon fill="#9a9a78" stroke="#9a9a78" stroke-width="0.5" points="57.9,322.5 59.7,322.2 59.7,318.9 57.9,319.2"/><polygon fill="#7d7d62" stroke="#7d7d62" stroke-width="0.5" points="59.7,322.2 61.5,321.1 61.5,317.8 59.7,318.9"/><polygon fill="#525240" stroke="#525240" stroke-width="0.5" points="61.5,321.1 63.5,315.9 63.6,312.8 61.5,317.8"/><polygon fill="#4f4f3e" stroke="#4f4f3e" stroke-width="0.5" points="63.5,315.9 65.7,309.4 65.9,306.3 63.6,312.8"/><polygon fill="#575744" stroke="#575744" stroke-width="0.5" points="65.7,309.4 67.9,304.7 68.2,301.7 65.9,306.3"/><polygon fill="#909071" stroke="#909071" stroke-width="0.5" points="67.9,304.7 70.0,304.0 70.3,301.2 68.2,301.7"/><polygon fill="#adad87" stroke="#adad87" stroke-width="0.5" points="70.0,304.0 72.0,304.4 72.2,301.6 70.3,301.2"/><polygon fill="#bcbc92" stroke="#bcbc92" stroke-width="0.5" points="72.0,304.4 73.6,308.8 73.6,306.0 72.2,301.6"/><polygon fill="#b8b88f" stroke="#b8b88f" stroke-width="0.5" points="73.6,308.8 74.7,315.1 74.6,312.3 73.6,306.0"/><polygon fill="#b9b990" stroke="#b9b990" stroke-width="0.5" points="74.7,315.1 75.9,320.0 75.6,317.1 74.6,312.3"/><polygon fill="#baba91" stroke="#baba91" stroke-width="0.5" points="75.9,320.0 77.5,320.9 77.2,318.1 75.6,317.1"/><polygon fill="#a4a480" stroke="#a4a480" stroke-width="0.5" points="77.5,320.9 79.3,320.9 78.9,318.1 77.2,318.1"/><polygon fill="#a5a580" stroke="#a5a580" stroke-width="0.5" points="79.3,320.9 81.0,321.0 80.6,318.2 78.9,318.1"/><polygon fill="#88886a" stroke="#88886a" stroke-width="0.5" points="81.0,321.0 82.9,320.1 82.5,317.4 80.6,318.2"/><polygon fill="#5c5c48" stroke="#5c5c48" stroke-width="0.5" points="82.9,320.1 85.7,315.3 85.4,312.7 82.5,317.4"/><polygon fill="#595946" stroke="#595946" stroke-width="0.5" points="85.7,315.3 89.0,309.2 88.7,306.7 85.4,312.7"/><polygon fill="#62624c" stroke="#62624c" stroke-width="0.5" points="89.0,309.2 91.9,304.9 91.8,302.6 88.7,306.7"/><polygon fill="#9c9c79" stroke="#9c9c79" stroke-width="0.5" points="91.9,304.9 94.0,304.7 93.8,302.4 91.8,302.6"/><polygon fill="#b6b68e" stroke="#b6b68e" stroke-width="0.5" points="94.0,304.7 95.8,305.4 95.5,303.1 93.8,302.4"/><polygon fill="#bebe94" stroke="#bebe94" stroke-width="0.5" points="96.5,321.6 97.8,322.8 97.1,320.4 95.8,319.2"/><polygon fill="#aeae87" stroke="#aeae87" stroke-width="0.5" points="97.8,322.8 99.4,323.1 98.7,320.8 97.1,320.4"/><polygon fill="#afaf88" stroke="#afaf88" stroke-width="0.5" points="99.4,323.1 101.0,323.5 100.2,321.2 98.7,320.8"/><polygon fill="#939373" stroke="#939373" stroke-width="0.5" points="101.0,323.5 103.0,323.0 102.1,320.7 100.2,321.2"/><polygon fill="#676750" stroke="#676750" stroke-width="0.5" points="103.0,323.0 106.5,318.7 105.7,316.6 102.1,320.7"/><polygon fill="#64644e" stroke="#64644e" stroke-width="0.5" points="106.5,318.7 110.6,313.2 109.9,311.2 105.7,316.6"/><polygon fill="#6d6d55" stroke="#6d6d55" stroke-width="0.5" points="110.6,313.2 114.1,309.5 113.4,307.6 109.9,311.2"/><polygon fill="#a6a682" stroke="#a6a682" stroke-width="0.5" points="114.1,309.5 116.1,309.6 115.3,307.8 113.4,307.6"/><polygon fill="#bcbc93" stroke="#bcbc93" stroke-width="0.5" points="116.1,309.6 117.6,310.6 116.8,308.8 115.3,307.8"/><polygon fill="#bfbf95" stroke="#bfbf95" stroke-width="0.5" points="115.3,326.9 116.3,328.3 115.1,326.3 114.1,324.9"/><polygon fill="#b6b68e" stroke="#b6b68e" stroke-width="0.5" points="116.3,328.3 117.7,328.9 116.5,326.9 115.1,326.3"/><polygon fill="#b7b78e" stroke="#b7b78e" stroke-width="0.5" points="117.7,328.9 119.1,329.5 117.8,327.6 116.5,326.9"/><polygon fill="#9e9e7b" stroke="#9e9e7b" stroke-width="0.5" points="119.1,329.5 121.0,329.4 119.7,327.5 117.8,327.6"/><polygon fill="#717158" stroke="#717158" stroke-width="0.5" points="121.0,329.4 125.0,325.7 123.7,324.0 119.7,327.5"/><polygon fill="#6e6e56" stroke="#6e6e56" stroke-width="0.5" points="125.0,325.7 129.8,320.9 128.5,319.3 123.7,324.0"/><polygon fill="#77775d" stroke="#77775d" stroke-width="0.5" points="129.8,320.9 133.8,317.9 132.4,316.4 128.5,319.3"/><polygon fill="#b0b089" stroke="#b0b089" stroke-width="0.5" points="133.8,317.9 135.5,318.4 134.2,316.9 132.4,316.4"/><polygon fill="#bcbc93" stroke="#bcbc93" stroke-width="0.5" points="132.3,337.0 133.5,337.8 131.7,336.1 130.6,335.3"/><polygon fill="#bdbd93" stroke="#bdbd93" stroke-width="0.5" points="133.5,337.8 134.7,338.7 132.9,337.0 131.7,336.1"/><polygon fill="#a8a883" stroke="#a8a883" stroke-width="0.5" points="134.7,338.7 136.5,338.9 134.6,337.2 132.9,337.0"/><polygon fill="#7c7c60" stroke="#7c7c60" stroke-width="0.5" points="136.5,338.9 140.8,335.9 138.9,334.4 134.6,337.2"/><polygon fill="#79795e" stroke="#79795e" stroke-width="0.5" points="140.8,335.9 146.1,332.0 144.2,330.7 138.9,334.4"/><polygon fill="#828265" stroke="#828265" stroke-width="0.5" points="146.1,332.0 150.2,329.7 148.3,328.5 144.2,330.7"/><polygon fill="#b8b88f" stroke="#b8b88f" stroke-width="0.5" points="150.2,329.7 151.8,330.5 149.8,329.3 148.3,328.5"/><polygon fill="#b2b28b" stroke="#b2b28b" stroke-width="0.5" points="147.4,350.5 149.0,351.0 146.5,349.5 145.0,349.0"/><polygon fill="#868669" stroke="#868669" stroke-width="0.5" points="149.0,351.0 153.4,348.8 151.0,347.5 146.5,349.5"/><polygon fill="#838366" stroke="#838366" stroke-width="0.5" points="153.4,348.8 159.0,345.8 156.5,344.7 151.0,347.5"/><polygon fill="#8c8c6d" stroke="#8c8c6d" stroke-width="0.5" points="159.0,345.8 163.2,344.3 160.6,343.2 156.5,344.7"/><polygon fill="#909071" stroke="#909071" stroke-width="0.5" points="158.2,365.1 162.7,363.7 159.7,362.5 155.2,363.7"/><polygon fill="#8d8d6e" stroke="#8d8d6e" stroke-width="0.5" points="162.7,363.7 168.3,361.8 165.2,360.6 159.7,362.5"/><polygon fill="#979775" stroke="#979775" stroke-width="0.5" points="168.3,361.8 172.4,360.9 169.2,359.9 165.2,360.6"/><polygon fill="#9b9b79" stroke="#9b9b79" stroke-width="0.5" points="164.2,380.8 168.5,380.2 164.9,378.9 160.7,379.4"/><polygon fill="#989876" stroke="#989876" stroke-width="0.5" points="168.5,380.2 173.9,379.1 170.3,378.0 164.9,378.9"/><polygon fill="#a1a17d" stroke="#a1a17d" stroke-width="0.5" points="173.9,379.1 177.8,379.0 174.1,377.9 170.3,378.0"/><polygon fill="#a5a580" stroke="#a5a580" stroke-width="0.5" points="166.8,397.4 170.9,397.5 166.8,396.1 162.9,396.0"/><polygon fill="#a2a27e" stroke="#a2a27e" stroke-width="0.5" points="170.9,397.5 176.0,397.4 171.9,396.1 166.8,396.1"/><polygon fill="#aaaa85" stroke="#aaaa85" stroke-width="0.5" points="176.0,397.4 179.6,397.9 175.4,396.7 171.9,396.1"/><polygon fill="#aeae88" stroke="#aeae88" stroke-width="0.5" points="166.2,414.5 170.0,415.3 165.5,413.7 161.9,412.9"/><polygon fill="#abab85" stroke="#abab85" stroke-width="0.5" points="170.0,415.3 174.7,416.0 170.1,414.5 165.5,413.7"/><polygon fill="#b4b48c" stroke="#b4b48c" stroke-width="0.5" points="166.0,432.9 170.2,434.4 165.3,432.7 161.2,431.1"/><polygon fill="#323227" stroke="#323227" stroke-width="0.5" points="104.3,514.3 101.1,511.9 95.5,508.2 98.6,510.7"/><polygon fill="#333328" stroke="#333328" stroke-width="0.5" points="101.1,511.9 98.4,510.1 92.9,506.3 95.5,508.2"/><polygon fill="#323227" stroke="#323227" stroke-width="0.5" points="88.8,525.4 86.5,523.6 80.9,519.6 83.2,521.4"/><polygon fill="#303025" stroke="#303025" stroke-width="0.5" points="86.5,523.6 84.0,520.6 78.5,516.5 80.9,519.6"/><polygon fill="#303025" stroke="#303025" stroke-width="0.5" points="84.0,520.6 81.8,518.3 76.4,514.2 78.5,516.5"/><polygon fill="#303025" stroke="#303025" stroke-width="0.5" points="69.8,532.8 68.0,530.5 62.5,526.1 64.2,528.3"/><polygon fill="#313126" stroke="#313126" stroke-width="0.5" points="68.0,530.5 66.1,527.0 60.8,522.5 62.5,526.1"/><polygon fill="#303025" stroke="#303025" stroke-width="0.5" points="66.1,527.0 64.4,524.3 59.2,519.8 60.8,522.5"/><polygon fill="#313126" stroke="#313126" stroke-width="0.5" points="50.2,537.5 48.9,534.9 43.6,530.0 44.8,532.7"/><polygon fill="#353529" stroke="#353529" stroke-width="0.5" points="48.9,534.9 47.8,531.0 42.6,526.1 43.6,530.0"/><polygon fill="#333328" stroke="#333328" stroke-width="0.5" points="47.8,531.0 46.7,527.9 41.6,523.0 42.6,526.1"/><polygon fill="#353529" stroke="#353529" stroke-width="0.5" points="30.5,539.5 29.7,536.6 24.6,531.3 25.3,534.3"/><polygon fill="#3c3c2f" stroke="#3c3c2f" stroke-width="0.5" points="29.7,536.6 29.5,532.3 24.5,527.1 24.6,531.3"/><polygon fill="#3a3a2d" stroke="#3a3a2d" stroke-width="0.5" points="29.5,532.3 29.0,528.9 24.2,523.7 24.5,527.1"/><polygon fill="#3c3c2f" stroke="#3c3c2f" stroke-width="0.5" points="11.0,538.6 10.9,535.4 6.1,529.8 6.2,533.0"/><polygon fill="#454536" stroke="#454536" stroke-width="0.5" points="10.9,535.4 11.5,530.9 6.8,525.3 6.1,529.8"/><polygon fill="#424233" stroke="#424233" stroke-width="0.5" points="11.5,530.9 11.8,527.3 7.2,521.7 6.8,525.3"/><polygon fill="#454536" stroke="#454536" stroke-width="0.5" points="-7.7,534.7 -7.2,531.3 -11.6,525.3 -12.2,528.7"/><polygon fill="#4f4f3d" stroke="#4f4f3d" stroke-width="0.5" points="-7.2,531.3 -5.7,526.6 -10.0,520.7 -11.6,525.3"/><polygon fill="#4c4c3b" stroke="#4c4c3b" stroke-width="0.5" points="-5.7,526.6 -4.7,522.9 -8.9,517.0 -10.0,520.7"/><polygon fill="#50503e" stroke="#50503e" stroke-width="0.5" points="-25.1,527.7 -23.9,524.2 -28.0,517.9 -29.2,521.3"/><polygon fill="#595945" stroke="#595945" stroke-width="0.5" points="-23.9,524.2 -21.5,519.5 -25.4,513.3 -28.0,517.9"/><polygon fill="#565643" stroke="#565643" stroke-width="0.5" points="-21.5,519.5 -19.8,515.8 -23.6,509.6 -25.4,513.3"/><polygon fill="#313126" stroke="#313126" stroke-width="0.5" points="-19.8,515.8 -20.4,514.5 -24.2,508.3 -23.6,509.6"/><polygon fill="#5a5a46" stroke="#5a5a46" stroke-width="0.5" points="-40.7,517.6 -38.8,514.1 -42.5,507.5 -44.4,511.0"/><polygon fill="#64644e" stroke="#64644e" stroke-width="0.5" points="-38.8,514.1 -35.5,509.6 -39.0,503.1 -42.5,507.5"/><polygon fill="#60604b" stroke="#60604b" stroke-width="0.5" points="-35.5,509.6 -33.0,505.9 -36.5,499.5 -39.0,503.1"/><polygon fill="#36362a" stroke="#36362a" stroke-width="0.5" points="-33.0,505.9 -33.4,504.4 -36.8,498.0 -36.5,499.5"/><polygon fill="#323227" stroke="#323227" stroke-width="0.5" points="-53.4,506.0 -54.0,504.5 -57.2,497.7 -56.6,499.1"/><polygon fill="#65654e" stroke="#65654e" stroke-width="0.5" points="-54.0,504.5 -51.4,501.2 -54.5,494.4 -57.2,497.7"/><polygon fill="#6e6e56" stroke="#6e6e56" stroke-width="0.5" points="-51.4,501.2 -47.2,496.9 -50.3,490.2 -54.5,494.4"/><polygon fill="#6b6b53" stroke="#6b6b53" stroke-width="0.5" points="-47.2,496.9 -44.0,493.4 -47.0,486.8 -50.3,490.2"/><polygon fill="#3e3e30" stroke="#3e3e30" stroke-width="0.5" points="-44.0,493.4 -44.0,491.9 -47.0,485.3 -47.0,486.8"/><polygon fill="#37372b" stroke="#37372b" stroke-width="0.5" points="-64.0,490.3 -64.3,488.6 -67.0,481.6 -66.7,483.2"/><polygon fill="#6f6f57" stroke="#6f6f57" stroke-width="0.5" points="-64.3,488.6 -61.1,485.5 -63.7,478.6 -67.0,481.6"/><polygon fill="#78785e" stroke="#78785e" stroke-width="0.5" points="-61.1,485.5 -56.1,481.8 -58.6,474.9 -63.7,478.6"/><polygon fill="#75755b" stroke="#75755b" stroke-width="0.5" points="-56.1,481.8 -52.2,478.6 -54.7,471.9 -58.6,474.9"/><polygon fill="#474737" stroke="#474737" stroke-width="0.5" points="-52.2,478.6 -51.9,477.0 -54.4,470.2 -54.7,471.9"/><polygon fill="#333328" stroke="#333328" stroke-width="0.5" points="-52.4,475.6 -52.9,474.3 -55.3,467.5 -54.8,468.9"/><polygon fill="#3f3f31" stroke="#3f3f31" stroke-width="0.5" points="-71.2,472.0 -71.2,470.3 -73.3,463.2 -73.4,464.9"/><polygon fill="#7a7a5f" stroke="#7a7a5f" stroke-width="0.5" points="-71.2,470.3 -67.4,467.6 -69.4,460.5 -73.3,463.2"/><polygon fill="#838366" stroke="#838366" stroke-width="0.5" points="-67.4,467.6 -61.6,464.4 -63.6,457.5 -69.4,460.5"/><polygon fill="#808064" stroke="#808064" stroke-width="0.5" points="-61.6,464.4 -57.2,461.8 -59.2,455.0 -63.6,457.5"/><polygon fill="#525240" stroke="#525240" stroke-width="0.5" points="-57.2,461.8 -56.5,460.1 -58.5,453.3 -59.2,455.0"/><polygon fill="#39392c" stroke="#39392c" stroke-width="0.5" points="-56.5,460.1 -56.7,458.6 -58.7,451.9 -58.5,453.3"/><polygon fill="#39392c" stroke="#39392c" stroke-width="0.5" points="-56.7,458.6 -56.9,457.1 -58.8,450.4 -58.7,451.9"/><polygon fill="#494939" stroke="#494939" stroke-width="0.5" points="-74.5,451.8 -74.1,449.9 -75.6,442.8 -76.1,444.6"/><polygon fill="#848467" stroke="#848467" stroke-width="0.5" points="-74.1,449.9 -69.8,447.7 -71.2,440.7 -75.6,442.8"/><polygon fill="#8d8d6e" stroke="#8d8d6e" stroke-width="0.5" points="-69.8,447.7 -63.5,445.4 -64.9,438.5 -71.2,440.7"/><polygon fill="#8a8a6c" stroke="#8a8a6c" stroke-width="0.5" points="-63.5,445.4 -58.5,443.4 -60.0,436.6 -64.9,438.5"/><polygon fill="#5d5d48" stroke="#5d5d48" stroke-width="0.5" points="-58.5,443.4 -57.5,441.7 -59.0,435.0 -60.0,436.6"/><polygon fill="#414133" stroke="#414133" stroke-width="0.5" points="-57.5,441.7 -57.5,440.1 -58.9,433.4 -59.0,435.0"/><polygon fill="#424233" stroke="#424233" stroke-width="0.5" points="-57.5,440.1 -57.3,438.6 -58.7,431.8 -58.9,433.4"/><polygon fill="#39392d" stroke="#39392d" stroke-width="0.5" points="-73.3,431.9 -73.5,430.0 -74.5,423.0 -74.3,424.8"/><polygon fill="#545442" stroke="#545442" stroke-width="0.5" points="-73.5,430.0 -72.7,428.2 -73.6,421.2 -74.5,423.0"/><polygon fill="#8f8f6f" stroke="#8f8f6f" stroke-width="0.5" points="-72.7,428.2 -68.0,426.6 -68.9,419.7 -73.6,421.2"/><polygon fill="#979776" stroke="#979776" stroke-width="0.5" points="-68.0,426.6 -61.3,425.3 -62.2,418.5 -68.9,419.7"/><polygon fill="#959574" stroke="#959574" stroke-width="0.5" points="-61.3,425.3 -56.0,424.0 -57.0,417.4 -62.2,418.5"/><polygon fill="#686851" stroke="#686851" stroke-width="0.5" points="-56.0,424.0 -54.7,422.4 -55.7,415.8 -57.0,417.4"/><polygon fill="#4b4b3a" stroke="#4b4b3a" stroke-width="0.5" points="-54.7,422.4 -54.3,420.8 -55.2,414.2 -55.7,415.8"/><polygon fill="#4c4c3b" stroke="#4c4c3b" stroke-width="0.5" points="-54.3,420.8 -53.9,419.2 -54.8,412.6 -55.2,414.2"/><polygon fill="#424233" stroke="#424233" stroke-width="0.5" points="-68.1,409.5 -67.9,407.6 -68.3,400.7 -68.6,402.7"/><polygon fill="#60604a" stroke="#60604a" stroke-width="0.5" points="-67.9,407.6 -66.8,405.8 -67.2,399.0 -68.3,400.7"/><polygon fill="#999977" stroke="#999977" stroke-width="0.5" points="-66.8,405.8 -61.8,405.0 -62.2,398.3 -67.2,399.0"/><polygon fill="#a1a17e" stroke="#a1a17e" stroke-width="0.5" points="-61.8,405.0 -55.0,404.7 -55.5,398.2 -62.2,398.3"/><polygon fill="#9f9f7c" stroke="#9f9f7c" stroke-width="0.5" points="-55.0,404.7 -49.6,404.3 -50.1,397.9 -55.5,398.2"/><polygon fill="#73735a" stroke="#73735a" stroke-width="0.5" points="-49.6,404.3 -48.0,402.9 -48.5,396.6 -50.1,397.9"/><polygon fill="#565643" stroke="#565643" stroke-width="0.5" points="-48.0,402.9 -47.2,401.3 -47.7,395.0 -48.5,396.6"/><polygon fill="#575744" stroke="#575744" stroke-width="0.5" points="-47.2,401.3 -46.5,399.7 -46.9,393.4 -47.7,395.0"/><polygon fill="#3d3d2f" stroke="#3d3d2f" stroke-width="0.5" points="-46.5,399.7 -46.5,397.8 -46.9,391.5 -46.9,393.4"/><polygon fill="#4c4c3b" stroke="#4c4c3b" stroke-width="0.5" points="-58.4,387.3 -57.8,385.3 -57.7,378.8 -58.3,380.8"/><polygon fill="#6b6b53" stroke="#6b6b53" stroke-width="0.5" points="-57.8,385.3 -56.3,383.6 -56.2,377.2 -57.7,378.8"/><polygon fill="#a3a37f" stroke="#a3a37f" stroke-width="0.5" points="-56.3,383.6 -51.3,383.7 -51.2,377.3 -56.2,377.2"/><polygon fill="#abab85" stroke="#abab85" stroke-width="0.5" points="-51.3,383.7 -44.6,384.6 -44.6,378.4 -51.2,377.3"/><polygon fill="#a8a883" stroke="#a8a883" stroke-width="0.5" points="-44.6,384.6 -39.2,385.1 -39.4,379.0 -44.6,378.4"/><polygon fill="#7e7e62" stroke="#7e7e62" stroke-width="0.5" points="-39.2,385.1 -37.4,383.9 -37.5,377.9 -39.4,379.0"/><polygon fill="#61614c" stroke="#61614c" stroke-width="0.5" points="-37.4,383.9 -36.3,382.4 -36.5,376.4 -37.5,377.9"/><polygon fill="#62624c" stroke="#62624c" stroke-width="0.5" points="-36.3,382.4 -35.3,380.9 -35.4,374.9 -36.5,376.4"/><polygon fill="#464637" stroke="#464637" stroke-width="0.5" points="-35.3,380.9 -35.0,378.9 -35.0,373.0 -35.4,374.9"/><polygon fill="#575744" stroke="#575744" stroke-width="0.5" points="-44.3,366.0 -43.3,364.1 -42.9,358.0 -43.9,360.0"/><polygon fill="#76765c" stroke="#76765c" stroke-width="0.5" points="-43.3,364.1 -41.6,362.7 -41.1,356.7 -42.9,358.0"/><polygon fill="#adad87" stroke="#adad87" stroke-width="0.5" points="-41.6,362.7 -36.6,363.6 -36.2,357.7 -41.1,356.7"/><polygon fill="#b3b38c" stroke="#b3b38c" stroke-width="0.5" points="-36.6,363.6 -30.3,365.7 -30.1,360.0 -36.2,357.7"/><polygon fill="#b1b18a" stroke="#b1b18a" stroke-width="0.5" points="-30.3,365.7 -25.3,367.1 -25.1,361.5 -30.1,360.0"/><polygon fill="#89896b" stroke="#89896b" stroke-width="0.5" points="-25.3,367.1 -23.3,366.3 -23.1,360.7 -25.1,361.5"/><polygon fill="#6c6c54" stroke="#6c6c54" stroke-width="0.5" points="-23.3,366.3 -22.0,364.9 -21.8,359.4 -23.1,360.7"/><polygon fill="#6d6d55" stroke="#6d6d55" stroke-width="0.5" points="-22.0,364.9 -20.6,363.5 -20.4,358.0 -21.8,359.4"/><polygon fill="#51513f" stroke="#51513f" stroke-width="0.5" points="-20.6,363.5 -19.9,361.6 -19.7,356.1 -20.4,358.0"/><polygon fill="#63634d" stroke="#63634d" stroke-width="0.5" points="-26.3,346.8 -25.0,345.0 -24.3,339.5 -25.6,341.3"/><polygon fill="#828265" stroke="#828265" stroke-width="0.5" points="-25.0,345.0 -23.0,343.8 -22.3,338.4 -24.3,339.5"/><polygon fill="#b5b58d" stroke="#b5b58d" stroke-width="0.5" points="-23.0,343.8 -18.4,345.6 -17.8,340.3 -22.3,338.4"/><polygon fill="#baba91" stroke="#baba91" stroke-width="0.5" points="-18.4,345.6 -12.8,348.9 -12.4,343.7 -17.8,340.3"/><polygon fill="#b9b990" stroke="#b9b990" stroke-width="0.5" points="-12.8,348.9 -8.2,351.3 -7.9,346.1 -12.4,343.7"/><polygon fill="#949474" stroke="#949474" stroke-width="0.5" points="-8.2,351.3 -6.1,350.7 -5.8,345.7 -7.9,346.1"/><polygon fill="#78785d" stroke="#78785d" stroke-width="0.5" points="-6.1,350.7 -4.6,349.6 -4.3,344.5 -5.8,345.7"/><polygon fill="#79795e" stroke="#79795e" stroke-width="0.5" points="-4.6,349.6 -3.0,348.4 -2.7,343.4 -4.3,344.5"/><polygon fill="#5c5c48" stroke="#5c5c48" stroke-width="0.5" points="-3.0,348.4 -1.9,346.6 -1.6,341.6 -2.7,343.4"/><polygon fill="#6e6e56" stroke="#6e6e56" stroke-width="0.5" points="-5.1,330.4 -3.5,328.8 -2.7,323.9 -4.3,325.5"/><polygon fill="#8d8d6e" stroke="#8d8d6e" stroke-width="0.5" points="-3.5,328.8 -1.4,328.0 -0.5,323.2 -2.7,323.9"/><polygon fill="#bcbc92" stroke="#bcbc92" stroke-width="0.5" points="-1.4,328.0 2.6,330.6 3.3,325.9 -0.5,323.2"/><polygon fill="#bebe94" stroke="#bebe94" stroke-width="0.5" points="2.6,330.6 7.4,334.9 7.9,330.3 3.3,325.9"/><polygon fill="#bebe94" stroke="#bebe94" stroke-width="0.5" points="7.4,334.9 11.3,338.1 11.7,333.6 7.9,330.3"/><polygon fill="#9f9f7c" stroke="#9f9f7c" stroke-width="0.5" points="11.3,338.1 13.4,338.0 13.7,333.5 11.7,333.6"/><polygon fill="#838366" stroke="#838366" stroke-width="0.5" points="13.4,338.0 15.1,337.1 15.4,332.6 13.7,333.5"/><polygon fill="#828266" stroke="#828266" stroke-width="0.5" points="14.7,341.7 16.4,340.7 16.8,336.2 15.1,337.1"/><polygon fill="#65654f" stroke="#65654f" stroke-width="0.5" points="16.4,340.7 17.8,339.0 18.2,334.5 16.8,336.2"/><polygon fill="#78785e" stroke="#78785e" stroke-width="0.5" points="17.5,321.9 19.3,320.5 20.2,316.2 18.3,317.6"/><polygon fill="#979776" stroke="#979776" stroke-width="0.5" points="19.3,320.5 21.6,320.1 22.4,315.8 20.2,316.2"/><polygon fill="#bfbf95" stroke="#bfbf95" stroke-width="0.5" points="21.6,320.1 25.0,323.4 25.7,319.2 22.4,315.8"/><polygon fill="#bfbf95" stroke="#bfbf95" stroke-width="0.5" points="25.0,323.4 28.8,328.5 29.3,324.4 25.7,319.2"/><polygon fill="#bfbf95" stroke="#bfbf95" stroke-width="0.5" points="28.8,328.5 32.1,332.4 32.4,328.3 29.3,324.4"/><polygon fill="#a8a883" stroke="#a8a883" stroke-width="0.5" points="32.1,332.4 34.1,332.6 34.4,328.6 32.4,328.3"/><polygon fill="#8d8d6e" stroke="#8d8d6e" stroke-width="0.5" points="34.1,332.6 35.9,331.9 36.2,327.9 34.4,328.6"/><polygon fill="#8e8e6e" stroke="#8e8e6e" stroke-width="0.5" points="35.9,331.9 37.7,331.3 38.0,327.3 36.2,327.9"/><polygon fill="#717158" stroke="#717158" stroke-width="0.5" points="37.7,331.3 39.4,329.8 39.6,325.9 38.0,327.3"/><polygon fill="#464637" stroke="#464637" stroke-width="0.5" points="39.4,329.8 40.2,324.4 40.7,320.6 39.6,325.9"/><polygon fill="#444435" stroke="#444435" stroke-width="0.5" points="40.2,324.4 41.0,317.6 41.6,313.8 40.7,320.6"/><polygon fill="#4b4b3b" stroke="#4b4b3b" stroke-width="0.5" points="41.0,317.6 42.4,312.6 43.0,308.9 41.6,313.8"/><polygon fill="#848467" stroke="#848467" stroke-width="0.5" points="42.4,312.6 44.4,311.5 45.1,307.9 43.0,308.9"/><polygon fill="#a2a27e" stroke="#a2a27e" stroke-width="0.5" points="44.4,311.5 46.6,311.5 47.2,307.9 45.1,307.9"/><polygon fill="#bfbf95" stroke="#bfbf95" stroke-width="0.5" points="46.6,311.5 49.2,315.4 49.7,311.9 47.2,307.9"/><polygon fill="#bdbd94" stroke="#bdbd94" stroke-width="0.5" points="49.2,315.4 51.8,321.3 52.1,317.7 49.7,311.9"/><polygon fill="#bebe94" stroke="#bebe94" stroke-width="0.5" points="51.8,321.3 54.1,325.8 54.2,322.2 52.1,317.7"/><polygon fill="#b1b18a" stroke="#b1b18a" stroke-width="0.5" points="54.1,325.8 56.0,326.3 56.1,322.8 54.2,322.2"/><polygon fill="#989876" stroke="#989876" stroke-width="0.5" points="56.0,326.3 57.8,325.9 57.9,322.5 56.1,322.8"/><polygon fill="#999977" stroke="#999977" stroke-width="0.5" points="57.8,325.9 59.7,325.6 59.7,322.2 57.9,322.5"/><polygon fill="#7c7c60" stroke="#7c7c60" stroke-width="0.5" points="59.7,325.6 61.5,324.4 61.5,321.1 59.7,322.2"/><polygon fill="#50503f" stroke="#50503f" stroke-width="0.5" points="61.5,324.4 63.3,319.2 63.5,315.9 61.5,321.1"/><polygon fill="#4e4e3d" stroke="#4e4e3d" stroke-width="0.5" points="63.3,319.2 65.4,312.5 65.7,309.4 63.5,315.9"/><polygon fill="#565643" stroke="#565643" stroke-width="0.5" points="65.4,312.5 67.6,307.7 67.9,304.7 65.7,309.4"/><polygon fill="#8f8f6f" stroke="#8f8f6f" stroke-width="0.5" points="67.6,307.7 69.7,307.0 70.0,304.0 67.9,304.7"/><polygon fill="#acac86" stroke="#acac86" stroke-width="0.5" points="69.7,307.0 71.7,307.3 72.0,304.4 70.0,304.0"/><polygon fill="#bcbc93" stroke="#bcbc93" stroke-width="0.5" points="71.7,307.3 73.4,311.7 73.6,308.8 72.0,304.4"/><polygon fill="#b8b890" stroke="#b8b890" stroke-width="0.5" points="73.4,311.7 74.7,318.1 74.7,315.1 73.6,308.8"/><polygon fill="#baba91" stroke="#baba91" stroke-width="0.5" points="74.7,318.1 76.1,323.0 75.9,320.0 74.7,315.1"/><polygon fill="#b9b990" stroke="#b9b990" stroke-width="0.5" points="76.1,323.0 77.7,323.9 77.5,320.9 75.9,320.0"/><polygon fill="#a2a27f" stroke="#a2a27f" stroke-width="0.5" points="77.7,323.9 79.5,323.8 79.3,320.9 77.5,320.9"/><polygon fill="#a3a37f" stroke="#a3a37f" stroke-width="0.5" points="79.5,323.8 81.3,323.8 81.0,321.0 79.3,320.9"/><polygon fill="#878769" stroke="#878769" stroke-width="0.5" points="81.3,323.8 83.2,322.9 82.9,320.1 81.0,321.0"/><polygon fill="#5b5b47" stroke="#5b5b47" stroke-width="0.5" points="83.2,322.9 85.9,318.0 85.7,315.3 82.9,320.1"/><polygon fill="#585845" stroke="#585845" stroke-width="0.5" points="85.9,318.0 89.1,311.7 89.0,309.2 85.7,315.3"/><polygon fill="#60604b" stroke="#60604b" stroke-width="0.5" points="89.1,311.7 92.0,307.4 91.9,304.9 89.0,309.2"/><polygon fill="#9a9a78" stroke="#9a9a78" stroke-width="0.5" points="92.0,307.4 94.1,307.1 94.0,304.7 91.9,304.9"/><polygon fill="#b5b58d" stroke="#b5b58d" stroke-width="0.5" points="94.1,307.1 95.9,307.8 95.8,305.4 94.0,304.7"/><polygon fill="#b7b78e" stroke="#b7b78e" stroke-width="0.5" points="95.9,307.8 96.7,312.4 96.4,310.1 95.8,305.4"/><polygon fill="#bebe94" stroke="#bebe94" stroke-width="0.5" points="97.1,324.1 98.5,325.3 97.8,322.8 96.5,321.6"/><polygon fill="#adad86" stroke="#adad86" stroke-width="0.5" points="98.5,325.3 100.1,325.6 99.4,323.1 97.8,322.8"/><polygon fill="#adad87" stroke="#adad87" stroke-width="0.5" points="100.1,325.6 101.8,325.9 101.0,323.5 99.4,323.1"/><polygon fill="#929272" stroke="#929272" stroke-width="0.5" points="101.8,325.9 103.7,325.3 103.0,323.0 101.0,323.5"/><polygon fill="#65654f" stroke="#65654f" stroke-width="0.5" points="103.7,325.3 107.2,320.9 106.5,318.7 103.0,323.0"/><polygon fill="#63634d" stroke="#63634d" stroke-width="0.5" points="107.2,320.9 111.2,315.2 110.6,313.2 106.5,318.7"/><polygon fill="#6b6b53" stroke="#6b6b53" stroke-width="0.5" points="111.2,315.2 114.7,311.4 114.1,309.5 110.6,313.2"/><polygon fill="#a5a580" stroke="#a5a580" stroke-width="0.5" points="114.7,311.4 116.7,311.5 116.1,309.6 114.1,309.5"/><polygon fill="#bbbb92" stroke="#bbbb92" stroke-width="0.5" points="116.7,311.5 118.3,312.5 117.6,310.6 116.1,309.6"/><polygon fill="#bfbf95" stroke="#bfbf95" stroke-width="0.5" points="116.3,328.9 117.4,330.3 116.3,328.3 115.3,326.9"/><polygon fill="#b5b58d" stroke="#b5b58d" stroke-width="0.5" points="117.4,330.3 118.9,330.9 117.7,328.9 116.3,328.3"/><polygon fill="#b6b68e" stroke="#b6b68e" stroke-width="0.5" points="118.9,330.9 120.4,331.5 119.1,329.5 117.7,328.9"/><polygon fill="#9d9d7a" stroke="#9d9d7a" stroke-width="0.5" points="120.4,331.5 122.3,331.3 121.0,329.4 119.1,329.5"/><polygon fill="#707057" stroke="#707057" stroke-width="0.5" points="122.3,331.3 126.2,327.5 125.0,325.7 121.0,329.4"/><polygon fill="#6d6d55" stroke="#6d6d55" stroke-width="0.5" points="126.2,327.5 131.1,322.6 129.8,320.9 125.0,325.7"/><polygon fill="#76765c" stroke="#76765c" stroke-width="0.5" points="131.1,322.6 135.0,319.4 133.8,317.9 129.8,320.9"/><polygon fill="#afaf88" stroke="#afaf88" stroke-width="0.5" points="135.0,319.4 136.8,319.8 135.5,318.4 133.8,317.9"/><polygon fill="#bfbf95" stroke="#bfbf95" stroke-width="0.5" points="136.8,319.8 138.0,321.1 136.7,319.7 135.5,318.4"/><polygon fill="#bcbc92" stroke="#bcbc92" stroke-width="0.5" points="134.0,338.7 135.2,339.5 133.5,337.8 132.3,337.0"/><polygon fill="#bcbc93" stroke="#bcbc93" stroke-width="0.5" points="135.2,339.5 136.5,340.4 134.7,338.7 133.5,337.8"/><polygon fill="#a7a782" stroke="#a7a782" stroke-width="0.5" points="136.5,340.4 138.3,340.5 136.5,338.9 134.7,338.7"/><polygon fill="#7a7a5f" stroke="#7a7a5f" stroke-width="0.5" points="138.3,340.5 142.6,337.4 140.8,335.9 136.5,338.9"/><polygon fill="#77775d" stroke="#77775d" stroke-width="0.5" points="142.6,337.4 147.9,333.4 146.1,332.0 140.8,335.9"/><polygon fill="#808064" stroke="#808064" stroke-width="0.5" points="147.9,333.4 152.1,330.9 150.2,329.7 146.1,332.0"/><polygon fill="#b7b78f" stroke="#b7b78f" stroke-width="0.5" points="152.1,330.9 153.7,331.7 151.8,330.5 150.2,329.7"/><polygon fill="#b1b18a" stroke="#b1b18a" stroke-width="0.5" points="149.7,352.0 151.3,352.4 149.0,351.0 147.4,350.5"/><polygon fill="#858567" stroke="#858567" stroke-width="0.5" points="151.3,352.4 155.8,350.1 153.4,348.8 149.0,351.0"/><polygon fill="#828265" stroke="#828265" stroke-width="0.5" points="155.8,350.1 161.4,347.0 159.0,345.8 153.4,348.8"/><polygon fill="#8b8b6c" stroke="#8b8b6c" stroke-width="0.5" points="161.4,347.0 165.6,345.3 163.2,344.3 159.0,345.8"/><polygon fill="#8f8f6f" stroke="#8f8f6f" stroke-width="0.5" points="161.1,366.5 165.7,365.0 162.7,363.7 158.2,365.1"/><polygon fill="#8c8c6d" stroke="#8c8c6d" stroke-width="0.5" points="165.7,365.0 171.3,362.8 168.3,361.8 162.7,363.7"/><polygon fill="#959574" stroke="#959574" stroke-width="0.5" points="171.3,362.8 175.4,361.9 172.4,360.9 168.3,361.8"/><polygon fill="#999978" stroke="#999978" stroke-width="0.5" points="167.6,382.2 172.0,381.4 168.5,380.2 164.2,380.8"/><polygon fill="#969675" stroke="#969675" stroke-width="0.5" points="172.0,381.4 177.5,380.3 173.9,379.1 168.5,380.2"/><polygon fill="#9f9f7c" stroke="#9f9f7c" stroke-width="0.5" points="177.5,380.3 181.5,380.0 177.8,379.0 173.9,379.1"/><polygon fill="#a3a37f" stroke="#a3a37f" stroke-width="0.5" points="170.7,398.9 174.8,398.9 170.9,397.5 166.8,397.4"/><polygon fill="#a0a07d" stroke="#a0a07d" stroke-width="0.5" points="174.8,398.9 180.1,398.6 176.0,397.4 170.9,397.5"/><polygon fill="#a9a984" stroke="#a9a984" stroke-width="0.5" points="180.1,398.6 183.7,399.0 179.6,397.9 176.0,397.4"/><polygon fill="#adad87" stroke="#adad87" stroke-width="0.5" points="170.5,416.1 174.4,416.8 170.0,415.3 166.2,414.5"/><polygon fill="#aaaa85" stroke="#aaaa85" stroke-width="0.5" points="174.4,416.8 179.2,417.4 174.7,416.0 170.0,415.3"/><polygon fill="#b3b38b" stroke="#b3b38b" stroke-width="0.5" points="170.7,434.7 175.1,436.1 170.2,434.4 166.0,432.9"/><polygon fill="#323227" stroke="#323227" stroke-width="0.5" points="109.9,517.9 106.6,515.5 101.1,511.9 104.3,514.3"/><polygon fill="#323227" stroke="#323227" stroke-width="0.5" points="94.6,529.4 92.2,527.6 86.5,523.6 88.8,525.4"/><polygon fill="#303025" stroke="#303025" stroke-width="0.5" points="92.2,527.6 89.5,524.6 84.0,520.6 86.5,523.6"/><polygon fill="#303025" stroke="#303025" stroke-width="0.5" points="89.5,524.6 87.2,522.4 81.8,518.3 84.0,520.6"/><polygon fill="#303025" stroke="#303025" stroke-width="0.5" points="75.4,537.1 73.5,534.9 68.0,530.5 69.8,532.8"/><polygon fill="#303026" stroke="#303026" stroke-width="0.5" points="73.5,534.9 71.5,531.4 66.1,527.0 68.0,530.5"/><polygon fill="#303025" stroke="#303025" stroke-width="0.5" points="71.5,531.4 69.7,528.7 64.4,524.3 66.1,527.0"/><polygon fill="#303026" stroke="#303026" stroke-width="0.5" points="55.6,542.3 54.2,539.7 48.9,534.9 50.2,537.5"/><polygon fill="#343429" stroke="#343429" stroke-width="0.5" points="54.2,539.7 53.0,535.8 47.8,531.0 48.9,534.9"/><polygon fill="#333327" stroke="#333327" stroke-width="0.5" points="53.0,535.8 51.9,532.7 46.7,527.9 47.8,531.0"/><polygon fill="#343429" stroke="#343429" stroke-width="0.5" points="35.7,544.7 34.8,541.8 29.7,536.6 30.5,539.5"/><polygon fill="#3b3b2e" stroke="#3b3b2e" stroke-width="0.5" points="34.8,541.8 34.5,537.5 29.5,532.3 29.7,536.6"/><polygon fill="#39392c" stroke="#39392c" stroke-width="0.5" points="34.5,537.5 34.0,534.1 29.0,528.9 29.5,532.3"/><polygon fill="#3b3b2e" stroke="#3b3b2e" stroke-width="0.5" points="16.0,544.2 15.7,541.0 10.9,535.4 11.0,538.6"/><polygon fill="#444435" stroke="#444435" stroke-width="0.5" points="15.7,541.0 16.2,536.4 11.5,530.9 10.9,535.4"/><polygon fill="#414132" stroke="#414132" stroke-width="0.5" points="16.2,536.4 16.4,532.8 11.8,527.3 11.5,530.9"/><polygon fill="#444435" stroke="#444435" stroke-width="0.5" points="-3.0,540.6 -2.6,537.2 -7.2,531.3 -7.7,534.7"/><polygon fill="#4d4d3c" stroke="#4d4d3c" stroke-width="0.5" points="-2.6,537.2 -1.2,532.5 -5.7,526.6 -7.2,531.3"/><polygon fill="#4a4a3a" stroke="#4a4a3a" stroke-width="0.5" points="-1.2,532.5 -0.3,528.7 -4.7,522.9 -5.7,526.6"/><polygon fill="#4e4e3d" stroke="#4e4e3d" stroke-width="0.5" points="-20.9,533.9 -19.8,530.4 -23.9,524.2 -25.1,527.7"/><polygon fill="#585844" stroke="#585844" stroke-width="0.5" points="-19.8,530.4 -17.4,525.7 -21.5,519.5 -23.9,524.2"/><polygon fill="#545442" stroke="#545442" stroke-width="0.5" points="-17.4,525.7 -15.8,521.9 -19.8,515.8 -21.5,519.5"/><polygon fill="#313126" stroke="#313126" stroke-width="0.5" points="-15.8,521.9 -16.4,520.6 -20.4,514.5 -19.8,515.8"/><polygon fill="#595945" stroke="#595945" stroke-width="0.5" points="-36.9,524.2 -35.1,520.7 -38.8,514.1 -40.7,517.6"/><polygon fill="#62624c" stroke="#62624c" stroke-width="0.5" points="-35.1,520.7 -31.9,516.1 -35.5,509.6 -38.8,514.1"/><polygon fill="#5f5f4a" stroke="#5f5f4a" stroke-width="0.5" points="-31.9,516.1 -29.5,512.3 -33.0,505.9 -35.5,509.6"/><polygon fill="#353529" stroke="#353529" stroke-width="0.5" points="-29.5,512.3 -29.9,510.9 -33.4,504.4 -33.0,505.9"/><polygon fill="#313126" stroke="#313126" stroke-width="0.5" points="-50.1,512.8 -50.7,511.4 -54.0,504.5 -53.4,506.0"/><polygon fill="#63634d" stroke="#63634d" stroke-width="0.5" points="-50.7,511.4 -48.2,507.9 -51.4,501.2 -54.0,504.5"/><polygon fill="#6d6d55" stroke="#6d6d55" stroke-width="0.5" points="-48.2,507.9 -44.1,503.6 -47.2,496.9 -51.4,501.2"/><polygon fill="#6a6a52" stroke="#6a6a52" stroke-width="0.5" points="-44.1,503.6 -40.9,500.1 -44.0,493.4 -47.2,496.9"/><polygon fill="#3d3d2f" stroke="#3d3d2f" stroke-width="0.5" points="-40.9,500.1 -41.0,498.5 -44.0,491.9 -44.0,493.4"/><polygon fill="#36362a" stroke="#36362a" stroke-width="0.5" points="-61.2,497.3 -61.6,495.7 -64.3,488.6 -64.0,490.3"/><polygon fill="#6e6e56" stroke="#6e6e56" stroke-width="0.5" points="-61.6,495.7 -58.4,492.5 -61.1,485.5 -64.3,488.6"/><polygon fill="#77775d" stroke="#77775d" stroke-width="0.5" points="-58.4,492.5 -53.4,488.6 -56.1,481.8 -61.1,485.5"/><polygon fill="#74745a" stroke="#74745a" stroke-width="0.5" points="-53.4,488.6 -49.6,485.4 -52.2,478.6 -56.1,481.8"/><polygon fill="#464636" stroke="#464636" stroke-width="0.5" points="-49.6,485.4 -49.4,483.7 -51.9,477.0 -52.2,478.6"/><polygon fill="#3e3e30" stroke="#3e3e30" stroke-width="0.5" points="-69.0,479.2 -69.0,477.4 -71.2,470.3 -71.2,472.0"/><polygon fill="#79795e" stroke="#79795e" stroke-width="0.5" points="-69.0,477.4 -65.2,474.6 -67.4,467.6 -71.2,470.3"/><polygon fill="#818165" stroke="#818165" stroke-width="0.5" points="-65.2,474.6 -59.5,471.4 -61.6,464.4 -67.4,467.6"/><polygon fill="#7e7e63" stroke="#7e7e63" stroke-width="0.5" points="-59.5,471.4 -55.1,468.6 -57.2,461.8 -61.6,464.4"/><polygon fill="#50503f" stroke="#50503f" stroke-width="0.5" points="-55.1,468.6 -54.5,466.9 -56.5,460.1 -57.2,461.8"/><polygon fill="#38382b" stroke="#38382b" stroke-width="0.5" points="-54.5,466.9 -54.8,465.4 -56.7,458.6 -56.5,460.1"/><polygon fill="#38382c" stroke="#38382c" stroke-width="0.5" points="-54.8,465.4 -55.0,463.9 -56.9,457.1 -56.7,458.6"/><polygon fill="#484838" stroke="#484838" stroke-width="0.5" points="-72.9,458.9 -72.6,457.1 -74.1,449.9 -74.5,451.8"/><polygon fill="#838366" stroke="#838366" stroke-width="0.5" points="-72.6,457.1 -68.2,454.8 -69.8,447.7 -74.1,449.9"/><polygon fill="#8c8c6d" stroke="#8c8c6d" stroke-width="0.5" points="-68.2,454.8 -61.9,452.3 -63.5,445.4 -69.8,447.7"/><polygon fill="#89896b" stroke="#89896b" stroke-width="0.5" points="-61.9,452.3 -57.0,450.2 -58.5,443.4 -63.5,445.4"/><polygon fill="#5b5b47" stroke="#5b5b47" stroke-width="0.5" points="-57.0,450.2 -56.0,448.5 -57.5,441.7 -58.5,443.4"/><polygon fill="#404032" stroke="#404032" stroke-width="0.5" points="-56.0,448.5 -56.0,446.9 -57.5,440.1 -57.5,441.7"/><polygon fill="#404032" stroke="#404032" stroke-width="0.5" points="-56.0,446.9 -55.9,445.3 -57.3,438.6 -57.5,440.1"/><polygon fill="#38382c" stroke="#38382c" stroke-width="0.5" points="-72.2,439.0 -72.5,437.1 -73.5,430.0 -73.3,431.9"/><polygon fill="#535340" stroke="#535340" stroke-width="0.5" points="-72.5,437.1 -71.7,435.3 -72.7,428.2 -73.5,430.0"/><polygon fill="#8e8e6e" stroke="#8e8e6e" stroke-width="0.5" points="-71.7,435.3 -67.0,433.6 -68.0,426.6 -72.7,428.2"/><polygon fill="#969675" stroke="#969675" stroke-width="0.5" points="-67.0,433.6 -60.3,432.1 -61.3,425.3 -68.0,426.6"/><polygon fill="#939373" stroke="#939373" stroke-width="0.5" points="-60.3,432.1 -55.0,430.7 -56.0,424.0 -61.3,425.3"/><polygon fill="#666650" stroke="#666650" stroke-width="0.5" points="-55.0,430.7 -53.7,429.1 -54.7,422.4 -56.0,424.0"/><polygon fill="#4a4a39" stroke="#4a4a39" stroke-width="0.5" points="-53.7,429.1 -53.3,427.4 -54.3,420.8 -54.7,422.4"/><polygon fill="#4a4a3a" stroke="#4a4a3a" stroke-width="0.5" points="-53.3,427.4 -52.9,425.8 -53.9,419.2 -54.3,420.8"/><polygon fill="#414132" stroke="#414132" stroke-width="0.5" points="-67.6,416.4 -67.5,414.5 -67.9,407.6 -68.1,409.5"/><polygon fill="#5e5e49" stroke="#5e5e49" stroke-width="0.5" points="-67.5,414.5 -66.4,412.7 -66.8,405.8 -67.9,407.6"/><polygon fill="#989876" stroke="#989876" stroke-width="0.5" points="-66.4,412.7 -61.3,411.7 -61.8,405.0 -66.8,405.8"/><polygon fill="#a0a07d" stroke="#a0a07d" stroke-width="0.5" points="-61.3,411.7 -54.4,411.3 -55.0,404.7 -61.8,405.0"/><polygon fill="#9d9d7b" stroke="#9d9d7b" stroke-width="0.5" points="-54.4,411.3 -49.0,410.8 -49.6,404.3 -55.0,404.7"/><polygon fill="#727259" stroke="#727259" stroke-width="0.5" points="-49.0,410.8 -47.4,409.3 -48.0,402.9 -49.6,404.3"/><polygon fill="#545442" stroke="#545442" stroke-width="0.5" points="-47.4,409.3 -46.7,407.7 -47.2,401.3 -48.0,402.9"/><polygon fill="#555542" stroke="#555542" stroke-width="0.5" points="-46.7,407.7 -46.0,406.1 -46.5,399.7 -47.2,401.3"/><polygon fill="#3c3c2f" stroke="#3c3c2f" stroke-width="0.5" points="-46.0,406.1 -46.1,404.2 -46.5,397.8 -46.5,399.7"/><polygon fill="#4b4b3a" stroke="#4b4b3a" stroke-width="0.5" points="-58.4,393.9 -57.8,391.8 -57.8,385.3 -58.4,387.3"/><polygon fill="#696952" stroke="#696952" stroke-width="0.5" points="-57.8,391.8 -56.4,390.2 -56.3,383.6 -57.8,385.3"/><polygon fill="#a2a27e" stroke="#a2a27e" stroke-width="0.5" points="-56.4,390.2 -51.3,390.1 -51.3,383.7 -56.3,383.6"/><polygon fill="#aaaa84" stroke="#aaaa84" stroke-width="0.5" points="-51.3,390.1 -44.5,390.8 -44.6,384.6 -51.3,383.7"/><polygon fill="#a7a782" stroke="#a7a782" stroke-width="0.5" points="-44.5,390.8 -39.0,391.2 -39.2,385.1 -44.6,384.6"/><polygon fill="#7d7d61" stroke="#7d7d61" stroke-width="0.5" points="-39.0,391.2 -37.2,390.0 -37.4,383.9 -39.2,385.1"/><polygon fill="#60604a" stroke="#60604a" stroke-width="0.5" points="-37.2,390.0 -36.2,388.5 -36.3,382.4 -37.4,383.9"/><polygon fill="#60604b" stroke="#60604b" stroke-width="0.5" points="-36.2,388.5 -35.2,386.9 -35.3,380.9 -36.3,382.4"/><polygon fill="#454536" stroke="#454536" stroke-width="0.5" points="-35.2,386.9 -34.9,384.9 -35.0,378.9 -35.3,380.9"/><polygon fill="#565643" stroke="#565643" stroke-width="0.5" points="-44.7,372.2 -43.8,370.2 -43.3,364.1 -44.3,366.0"/><polygon fill="#75755b" stroke="#75755b" stroke-width="0.5" points="-43.8,370.2 -42.0,368.8 -41.6,362.7 -43.3,364.1"/><polygon fill="#acac86" stroke="#acac86" stroke-width="0.5" points="-42.0,368.8 -37.0,369.5 -36.6,363.6 -41.6,362.7"/><polygon fill="#b2b28b" stroke="#b2b28b" stroke-width="0.5" points="-37.0,369.5 -30.6,371.5 -30.3,365.7 -36.6,363.6"/><polygon fill="#b0b089" stroke="#b0b089" stroke-width="0.5" points="-30.6,371.5 -25.4,372.9 -25.3,367.1 -30.3,365.7"/><polygon fill="#88886a" stroke="#88886a" stroke-width="0.5" points="-25.4,372.9 -23.4,372.0 -23.3,366.3 -25.3,367.1"/><polygon fill="#6b6b53" stroke="#6b6b53" stroke-width="0.5" points="-23.4,372.0 -22.1,370.5 -22.0,364.9 -23.3,366.3"/><polygon fill="#6c6c54" stroke="#6c6c54" stroke-width="0.5" points="-22.1,370.5 -20.8,369.1 -20.6,363.5 -22.0,364.9"/><polygon fill="#4f4f3e" stroke="#4f4f3e" stroke-width="0.5" points="-20.8,369.1 -20.1,367.2 -19.9,361.6 -20.6,363.5"/><polygon fill="#61614c" stroke="#61614c" stroke-width="0.5" points="-27.0,352.4 -25.7,350.5 -25.0,345.0 -26.3,346.8"/><polygon fill="#808064" stroke="#808064" stroke-width="0.5" points="-25.7,350.5 -23.7,349.4 -23.0,343.8 -25.0,345.0"/><polygon fill="#b4b48c" stroke="#b4b48c" stroke-width="0.5" points="-23.7,349.4 -19.1,351.1 -18.4,345.6 -23.0,343.8"/><polygon fill="#b9b991" stroke="#b9b991" stroke-width="0.5" points="-19.1,351.1 -13.3,354.2 -12.8,348.9 -18.4,345.6"/><polygon fill="#b8b88f" stroke="#b8b88f" stroke-width="0.5" points="-13.3,354.2 -8.5,356.5 -8.2,351.3 -12.8,348.9"/><polygon fill="#939372" stroke="#939372" stroke-width="0.5" points="-8.5,356.5 -6.4,355.9 -6.1,350.7 -8.2,351.3"/><polygon fill="#76765c" stroke="#76765c" stroke-width="0.5" points="-6.4,355.9 -4.9,354.7 -4.6,349.6 -6.1,350.7"/><polygon fill="#77775d" stroke="#77775d" stroke-width="0.5" points="-4.9,354.7 -3.3,353.5 -3.0,348.4 -4.6,349.6"/><polygon fill="#5a5a46" stroke="#5a5a46" stroke-width="0.5" points="-3.3,353.5 -2.3,351.6 -1.9,346.6 -3.0,348.4"/><polygon fill="#6d6d55" stroke="#6d6d55" stroke-width="0.5" points="-6.0,335.4 -4.4,333.7 -3.5,328.8 -5.1,330.4"/><polygon fill="#8c8c6d" stroke="#8c8c6d" stroke-width="0.5" points="-4.4,333.7 -2.2,332.9 -1.4,328.0 -3.5,328.8"/><polygon fill="#bbbb92" stroke="#bbbb92" stroke-width="0.5" points="-2.2,332.9 1.9,335.4 2.6,330.6 -1.4,328.0"/><polygon fill="#bebe94" stroke="#bebe94" stroke-width="0.5" points="1.9,335.4 6.8,339.7 7.4,334.9 2.6,330.6"/><polygon fill="#bdbd93" stroke="#bdbd93" stroke-width="0.5" points="6.8,339.7 10.9,342.8 11.3,338.1 7.4,334.9"/><polygon fill="#9e9e7b" stroke="#9e9e7b" stroke-width="0.5" points="10.9,342.8 13.0,342.6 13.4,338.0 11.3,338.1"/><polygon fill="#818165" stroke="#818165" stroke-width="0.5" points="13.0,342.6 14.7,341.7 15.1,337.1 13.4,338.0"/><polygon fill="#818164" stroke="#818164" stroke-width="0.5" points="14.3,346.3 16.0,345.3 16.4,340.7 14.7,341.7"/><polygon fill="#64644e" stroke="#64644e" stroke-width="0.5" points="16.0,345.3 17.4,343.6 17.8,339.0 16.4,340.7"/><polygon fill="#77775c" stroke="#77775c" stroke-width="0.5" points="16.6,326.4 18.4,324.9 19.3,320.5 17.5,321.9"/><polygon fill="#959574" stroke="#959574" stroke-width="0.5" points="18.4,324.9 20.7,324.4 21.6,320.1 19.3,320.5"/><polygon fill="#bebe94" stroke="#bebe94" stroke-width="0.5" points="20.7,324.4 24.2,327.7 25.0,323.4 21.6,320.1"/><polygon fill="#bfbf95" stroke="#bfbf95" stroke-width="0.5" points="24.2,327.7 28.3,332.8 28.8,328.5 25.0,323.4"/><polygon fill="#bfbf95" stroke="#bfbf95" stroke-width="0.5" points="28.3,332.8 31.7,336.6 32.1,332.4 28.8,328.5"/><polygon fill="#a7a782" stroke="#a7a782" stroke-width="0.5" points="31.7,336.6 33.8,336.7 34.1,332.6 32.1,332.4"/><polygon fill="#8b8b6c" stroke="#8b8b6c" stroke-width="0.5" points="33.8,336.7 35.6,336.0 35.9,331.9 34.1,332.6"/><polygon fill="#8c8c6d" stroke="#8c8c6d" stroke-width="0.5" points="35.6,336.0 37.4,335.3 37.7,331.3 35.9,331.9"/><polygon fill="#6f6f57" stroke="#6f6f57" stroke-width="0.5" points="37.4,335.3 39.0,333.8 39.4,329.8 37.7,331.3"/><polygon fill="#454536" stroke="#454536" stroke-width="0.5" points="39.0,333.8 39.8,328.3 40.2,324.4 39.4,329.8"/><polygon fill="#4a4a3a" stroke="#4a4a3a" stroke-width="0.5" points="40.4,321.4 41.6,316.4 42.4,312.6 41.0,317.6"/><polygon fill="#828265" stroke="#828265" stroke-width="0.5" points="41.6,316.4 43.6,315.3 44.4,311.5 42.4,312.6"/><polygon fill="#a0a07d" stroke="#a0a07d" stroke-width="0.5" points="43.6,315.3 45.9,315.1 46.6,311.5 44.4,311.5"/><polygon fill="#bfbf95" stroke="#bfbf95" stroke-width="0.5" points="45.9,315.1 48.6,319.0 49.2,315.4 46.6,311.5"/><polygon fill="#bebe94" stroke="#bebe94" stroke-width="0.5" points="48.6,319.0 51.4,324.9 51.8,321.3 49.2,315.4"/><polygon fill="#bfbf95" stroke="#bfbf95" stroke-width="0.5" points="51.4,324.9 53.9,329.4 54.1,325.8 51.8,321.3"/><polygon fill="#b0b089" stroke="#b0b089" stroke-width="0.5" points="53.9,329.4 55.8,329.9 56.0,326.3 54.1,325.8"/><polygon fill="#969675" stroke="#969675" stroke-width="0.5" points="55.8,329.9 57.7,329.4 57.8,325.9 56.0,326.3"/><polygon fill="#979776" stroke="#979776" stroke-width="0.5" points="57.7,329.4 59.5,329.1 59.7,325.6 57.8,325.9"/><polygon fill="#7a7a5f" stroke="#7a7a5f" stroke-width="0.5" points="59.5,329.1 61.3,327.8 61.5,324.4 59.7,325.6"/><polygon fill="#4f4f3e" stroke="#4f4f3e" stroke-width="0.5" points="61.3,327.8 63.1,322.5 63.3,319.2 61.5,324.4"/><polygon fill="#4c4c3b" stroke="#4c4c3b" stroke-width="0.5" points="63.1,322.5 65.0,315.7 65.4,312.5 63.3,319.2"/><polygon fill="#545442" stroke="#545442" stroke-width="0.5" points="65.0,315.7 67.1,310.8 67.6,307.7 65.4,312.5"/><polygon fill="#8d8d6e" stroke="#8d8d6e" stroke-width="0.5" points="67.1,310.8 69.2,310.1 69.7,307.0 67.6,307.7"/><polygon fill="#abab85" stroke="#abab85" stroke-width="0.5" points="69.2,310.1 71.3,310.4 71.7,307.3 69.7,307.0"/><polygon fill="#bdbd93" stroke="#bdbd93" stroke-width="0.5" points="71.3,310.4 73.2,314.8 73.4,311.7 71.7,307.3"/><polygon fill="#b9b990" stroke="#b9b990" stroke-width="0.5" points="73.2,314.8 74.7,321.1 74.7,318.1 73.4,311.7"/><polygon fill="#bbbb91" stroke="#bbbb91" stroke-width="0.5" points="74.7,321.1 76.1,326.0 76.1,323.0 74.7,318.1"/><polygon fill="#b8b88f" stroke="#b8b88f" stroke-width="0.5" points="76.1,326.0 77.9,326.9 77.7,323.9 76.1,323.0"/><polygon fill="#a1a17e" stroke="#a1a17e" stroke-width="0.5" points="77.9,326.9 79.7,326.8 79.5,323.8 77.7,323.9"/><polygon fill="#a2a27e" stroke="#a2a27e" stroke-width="0.5" points="79.7,326.8 81.5,326.7 81.3,323.8 79.5,323.8"/><polygon fill="#858568" stroke="#858568" stroke-width="0.5" points="81.5,326.7 83.4,325.8 83.2,322.9 81.3,323.8"/><polygon fill="#595946" stroke="#595946" stroke-width="0.5" points="83.4,325.8 86.1,320.8 85.9,318.0 83.2,322.9"/><polygon fill="#575744" stroke="#575744" stroke-width="0.5" points="86.1,320.8 89.1,314.3 89.1,311.7 85.9,318.0"/><polygon fill="#5f5f4a" stroke="#5f5f4a" stroke-width="0.5" points="89.1,314.3 92.0,309.9 92.0,307.4 89.1,311.7"/><polygon fill="#999977" stroke="#999977" stroke-width="0.5" points="92.0,309.9 94.1,309.5 94.1,307.1 92.0,307.4"/><polygon fill="#b4b48c" stroke="#b4b48c" stroke-width="0.5" points="94.1,309.5 96.0,310.2 95.9,307.8 94.1,307.1"/><polygon fill="#b8b88f" stroke="#b8b88f" stroke-width="0.5" points="96.0,310.2 96.9,314.9 96.7,312.4 95.9,307.8"/><polygon fill="#bdbd94" stroke="#bdbd94" stroke-width="0.5" points="97.6,326.6 99.0,327.8 98.5,325.3 97.1,324.1"/><polygon fill="#abab85" stroke="#abab85" stroke-width="0.5" points="99.0,327.8 100.7,328.0 100.1,325.6 98.5,325.3"/><polygon fill="#acac86" stroke="#acac86" stroke-width="0.5" points="100.7,328.0 102.4,328.3 101.8,325.9 100.1,325.6"/><polygon fill="#909071" stroke="#909071" stroke-width="0.5" points="102.4,328.3 104.4,327.7 103.7,325.3 101.8,325.9"/><polygon fill="#64644e" stroke="#64644e" stroke-width="0.5" points="104.4,327.7 107.8,323.2 107.2,320.9 103.7,325.3"/><polygon fill="#61614c" stroke="#61614c" stroke-width="0.5" points="107.8,323.2 111.8,317.3 111.2,315.2 107.2,320.9"/><polygon fill="#6a6a52" stroke="#6a6a52" stroke-width="0.5" points="111.8,317.3 115.2,313.4 114.7,311.4 111.2,315.2"/><polygon fill="#a3a37f" stroke="#a3a37f" stroke-width="0.5" points="115.2,313.4 117.3,313.4 116.7,311.5 114.7,311.4"/><polygon fill="#bbbb92" stroke="#bbbb92" stroke-width="0.5" points="117.3,313.4 118.9,314.4 118.3,312.5 116.7,311.5"/><polygon fill="#bfbf95" stroke="#bfbf95" stroke-width="0.5" points="117.3,331.0 118.5,332.4 117.4,330.3 116.3,328.9"/><polygon fill="#b4b48c" stroke="#b4b48c" stroke-width="0.5" points="118.5,332.4 120.0,333.0 118.9,330.9 117.4,330.3"/><polygon fill="#b5b58d" stroke="#b5b58d" stroke-width="0.5" points="120.0,333.0 121.5,333.5 120.4,331.5 118.9,330.9"/><polygon fill="#9b9b79" stroke="#9b9b79" stroke-width="0.5" points="121.5,333.5 123.4,333.3 122.3,331.3 120.4,331.5"/><polygon fill="#6e6e56" stroke="#6e6e56" stroke-width="0.5" points="123.4,333.3 127.4,329.4 126.2,327.5 122.3,331.3"/><polygon fill="#6c6c54" stroke="#6c6c54" stroke-width="0.5" points="127.4,329.4 132.2,324.3 131.1,322.6 126.2,327.5"/><polygon fill="#74745b" stroke="#74745b" stroke-width="0.5" points="132.2,324.3 136.1,321.0 135.0,319.4 131.1,322.6"/><polygon fill="#adad87" stroke="#adad87" stroke-width="0.5" points="136.1,321.0 137.9,321.3 136.8,319.8 135.0,319.4"/><polygon fill="#bfbf95" stroke="#bfbf95" stroke-width="0.5" points="137.9,321.3 139.2,322.6 138.0,321.1 136.8,319.8"/><polygon fill="#bbbb92" stroke="#bbbb92" stroke-width="0.5" points="135.6,340.5 136.9,341.3 135.2,339.5 134.0,338.7"/><polygon fill="#bbbb92" stroke="#bbbb92" stroke-width="0.5" points="136.9,341.3 138.1,342.1 136.5,340.4 135.2,339.5"/><polygon fill="#a6a681" stroke="#a6a681" stroke-width="0.5" points="138.1,342.1 140.0,342.2 138.3,340.5 136.5,340.4"/><polygon fill="#79795e" stroke="#79795e" stroke-width="0.5" points="140.0,342.2 144.3,339.0 142.6,337.4 138.3,340.5"/><polygon fill="#76765c" stroke="#76765c" stroke-width="0.5" points="144.3,339.0 149.6,334.7 147.9,333.4 142.6,337.4"/><polygon fill="#7f7f63" stroke="#7f7f63" stroke-width="0.5" points="149.6,334.7 153.8,332.2 152.1,330.9 147.9,333.4"/><polygon fill="#b6b68e" stroke="#b6b68e" stroke-width="0.5" points="153.8,332.2 155.4,332.9 153.7,331.7 152.1,330.9"/><polygon fill="#afaf89" stroke="#afaf89" stroke-width="0.5" points="151.9,353.5 153.6,353.9 151.3,352.4 149.7,352.0"/><polygon fill="#838366" stroke="#838366" stroke-width="0.5" points="153.6,353.9 158.1,351.5 155.8,350.1 151.3,352.4"/><polygon fill="#808064" stroke="#808064" stroke-width="0.5" points="158.1,351.5 163.7,348.2 161.4,347.0 155.8,350.1"/><polygon fill="#89896b" stroke="#89896b" stroke-width="0.5" points="163.7,348.2 168.0,346.4 165.6,345.3 161.4,347.0"/><polygon fill="#b7b78f" stroke="#b7b78f" stroke-width="0.5" points="162.5,367.2 163.9,367.8 161.1,366.5 159.7,365.8"/><polygon fill="#8e8e6e" stroke="#8e8e6e" stroke-width="0.5" points="163.9,367.8 168.5,366.2 165.7,365.0 161.1,366.5"/><polygon fill="#8b8b6c" stroke="#8b8b6c" stroke-width="0.5" points="168.5,366.2 174.2,363.9 171.3,362.8 165.7,365.0"/><polygon fill="#949473" stroke="#949473" stroke-width="0.5" points="174.2,363.9 178.4,362.8 175.4,361.9 171.3,362.8"/><polygon fill="#989876" stroke="#989876" stroke-width="0.5" points="170.9,383.5 175.4,382.7 172.0,381.4 167.6,382.2"/><polygon fill="#959574" stroke="#959574" stroke-width="0.5" points="175.4,382.7 181.0,381.3 177.5,380.3 172.0,381.4"/><polygon fill="#9e9e7b" stroke="#9e9e7b" stroke-width="0.5" points="181.0,381.3 185.0,381.0 181.5,380.0 177.5,380.3"/><polygon fill="#a2a27e" stroke="#a2a27e" stroke-width="0.5" points="174.5,400.3 178.7,400.2 174.8,398.9 170.7,398.9"/><polygon fill="#9f9f7c" stroke="#9f9f7c" stroke-width="0.5" points="178.7,400.2 184.1,399.8 180.1,398.6 174.8,398.9"/><polygon fill="#a8a883" stroke="#a8a883" stroke-width="0.5" points="184.1,399.8 187.8,400.1 183.7,399.0 180.1,398.6"/><polygon fill="#acac86" stroke="#acac86" stroke-width="0.5" points="174.8,417.7 178.7,418.3 174.4,416.8 170.5,416.1"/><polygon fill="#a9a984" stroke="#a9a984" stroke-width="0.5" points="178.7,418.3 183.7,418.8 179.2,417.4 174.4,416.8"/><polygon fill="#b1b18a" stroke="#b1b18a" stroke-width="0.5" points="183.7,418.8 187.0,419.7 182.5,418.4 179.2,417.4"/><polygon fill="#b2b28a" stroke="#b2b28a" stroke-width="0.5" points="175.4,436.4 179.9,437.7 175.1,436.1 170.7,434.7"/><polygon fill="#333328" stroke="#333328" stroke-width="0.5" points="115.6,521.4 112.2,519.1 106.6,515.5 109.9,517.9"/><polygon fill="#333327" stroke="#333327" stroke-width="0.5" points="100.3,533.3 97.8,531.5 92.2,527.6 94.6,529.4"/><polygon fill="#303025" stroke="#303025" stroke-width="0.5" points="97.8,531.5 95.0,528.6 89.5,524.6 92.2,527.6"/><polygon fill="#313126" stroke="#313126" stroke-width="0.5" points="95.0,528.6 92.6,526.4 87.2,522.4 89.5,524.6"/><polygon fill="#303025" stroke="#303025" stroke-width="0.5" points="81.1,541.4 79.0,539.3 73.5,534.9 75.4,537.1"/><polygon fill="#303025" stroke="#303025" stroke-width="0.5" points="79.0,539.3 77.0,535.8 71.5,531.4 73.5,534.9"/><polygon fill="#303025" stroke="#303025" stroke-width="0.5" points="77.0,535.8 75.1,533.1 69.7,528.7 71.5,531.4"/><polygon fill="#303025" stroke="#303025" stroke-width="0.5" points="61.1,547.0 59.6,544.4 54.2,539.7 55.6,542.3"/><polygon fill="#333328" stroke="#333328" stroke-width="0.5" points="59.6,544.4 58.3,540.5 53.0,535.8 54.2,539.7"/><polygon fill="#323227" stroke="#323227" stroke-width="0.5" points="58.3,540.5 57.1,537.5 51.9,532.7 53.0,535.8"/><polygon fill="#343428" stroke="#343428" stroke-width="0.5" points="41.0,549.8 40.0,546.9 34.8,541.8 35.7,544.7"/><polygon fill="#3a3a2d" stroke="#3a3a2d" stroke-width="0.5" points="40.0,546.9 39.5,542.6 34.5,537.5 34.8,541.8"/><polygon fill="#38382b" stroke="#38382b" stroke-width="0.5" points="39.5,542.6 38.9,539.2 34.0,534.1 34.5,537.5"/><polygon fill="#3a3a2d" stroke="#3a3a2d" stroke-width="0.5" points="21.0,549.7 20.7,546.5 15.7,541.0 16.0,544.2"/><polygon fill="#424234" stroke="#424234" stroke-width="0.5" points="20.7,546.5 21.0,541.9 16.2,536.4 15.7,541.0"/><polygon fill="#404031" stroke="#404031" stroke-width="0.5" points="21.0,541.9 21.1,538.3 16.4,532.8 16.2,536.4"/><polygon fill="#434334" stroke="#434334" stroke-width="0.5" points="1.6,546.5 2.0,543.1 -2.6,537.2 -3.0,540.6"/><polygon fill="#4c4c3b" stroke="#4c4c3b" stroke-width="0.5" points="2.0,543.1 3.3,538.4 -1.2,532.5 -2.6,537.2"/><polygon fill="#494939" stroke="#494939" stroke-width="0.5" points="3.3,538.4 4.1,534.6 -0.3,528.7 -1.2,532.5"/><polygon fill="#4d4d3c" stroke="#4d4d3c" stroke-width="0.5" points="-16.6,540.2 -15.6,536.7 -19.8,530.4 -20.9,533.9"/><polygon fill="#565643" stroke="#565643" stroke-width="0.5" points="-15.6,536.7 -13.3,531.9 -17.4,525.7 -19.8,530.4"/><polygon fill="#535341" stroke="#535341" stroke-width="0.5" points="-13.3,531.9 -11.8,528.0 -15.8,521.9 -17.4,525.7"/><polygon fill="#303026" stroke="#303026" stroke-width="0.5" points="-11.8,528.0 -12.5,526.8 -16.4,520.6 -15.8,521.9"/><polygon fill="#575744" stroke="#575744" stroke-width="0.5" points="-33.1,530.7 -31.4,527.2 -35.1,520.7 -36.9,524.2"/><polygon fill="#61614b" stroke="#61614b" stroke-width="0.5" points="-31.4,527.2 -28.2,522.5 -31.9,516.1 -35.1,520.7"/><polygon fill="#5e5e49" stroke="#5e5e49" stroke-width="0.5" points="-28.2,522.5 -25.9,518.7 -29.5,512.3 -31.9,516.1"/><polygon fill="#343429" stroke="#343429" stroke-width="0.5" points="-25.9,518.7 -26.3,517.3 -29.9,510.9 -29.5,512.3"/><polygon fill="#313126" stroke="#313126" stroke-width="0.5" points="-46.6,519.6 -47.4,518.2 -50.7,511.4 -50.1,512.8"/><polygon fill="#62624c" stroke="#62624c" stroke-width="0.5" points="-47.4,518.2 -44.9,514.7 -48.2,507.9 -50.7,511.4"/><polygon fill="#6b6b53" stroke="#6b6b53" stroke-width="0.5" points="-44.9,514.7 -40.8,510.3 -44.1,503.6 -48.2,507.9"/><polygon fill="#686851" stroke="#686851" stroke-width="0.5" points="-40.8,510.3 -37.8,506.7 -40.9,500.1 -44.1,503.6"/><polygon fill="#3b3b2e" stroke="#3b3b2e" stroke-width="0.5" points="-37.8,506.7 -37.9,505.1 -41.0,498.5 -40.9,500.1"/><polygon fill="#36362a" stroke="#36362a" stroke-width="0.5" points="-58.4,504.3 -58.8,502.7 -61.6,495.7 -61.2,497.3"/><polygon fill="#6c6c55" stroke="#6c6c55" stroke-width="0.5" points="-58.8,502.7 -55.7,499.4 -58.4,492.5 -61.6,495.7"/><polygon fill="#76765c" stroke="#76765c" stroke-width="0.5" points="-55.7,499.4 -50.7,495.5 -53.4,488.6 -58.4,492.5"/><polygon fill="#737359" stroke="#737359" stroke-width="0.5" points="-50.7,495.5 -47.0,492.1 -49.6,485.4 -53.4,488.6"/><polygon fill="#454535" stroke="#454535" stroke-width="0.5" points="-47.0,492.1 -46.7,490.5 -49.4,483.7 -49.6,485.4"/><polygon fill="#3d3d30" stroke="#3d3d30" stroke-width="0.5" points="-66.7,486.4 -66.8,484.6 -69.0,477.4 -69.0,479.2"/><polygon fill="#77775d" stroke="#77775d" stroke-width="0.5" points="-66.8,484.6 -63.0,481.7 -65.2,474.6 -69.0,477.4"/><polygon fill="#808064" stroke="#808064" stroke-width="0.5" points="-63.0,481.7 -57.3,478.3 -59.5,471.4 -65.2,474.6"/><polygon fill="#7d7d61" stroke="#7d7d61" stroke-width="0.5" points="-57.3,478.3 -52.9,475.4 -55.1,468.6 -59.5,471.4"/><polygon fill="#4f4f3d" stroke="#4f4f3d" stroke-width="0.5" points="-52.9,475.4 -52.4,473.7 -54.5,466.9 -55.1,468.6"/><polygon fill="#37372b" stroke="#37372b" stroke-width="0.5" points="-52.4,473.7 -52.7,472.3 -54.8,465.4 -54.5,466.9"/><polygon fill="#37372b" stroke="#37372b" stroke-width="0.5" points="-52.7,472.3 -53.0,470.8 -55.0,463.9 -54.8,465.4"/><polygon fill="#474737" stroke="#474737" stroke-width="0.5" points="-71.2,466.1 -70.9,464.3 -72.6,457.1 -72.9,458.9"/><polygon fill="#828265" stroke="#828265" stroke-width="0.5" points="-70.9,464.3 -66.6,461.9 -68.2,454.8 -72.6,457.1"/><polygon fill="#8a8a6c" stroke="#8a8a6c" stroke-width="0.5" points="-66.6,461.9 -60.3,459.3 -61.9,452.3 -68.2,454.8"/><polygon fill="#87876a" stroke="#87876a" stroke-width="0.5" points="-60.3,459.3 -55.3,457.0 -57.0,450.2 -61.9,452.3"/><polygon fill="#5a5a46" stroke="#5a5a46" stroke-width="0.5" points="-55.3,457.0 -54.4,455.3 -56.0,448.5 -57.0,450.2"/><polygon fill="#3e3e31" stroke="#3e3e31" stroke-width="0.5" points="-54.4,455.3 -54.4,453.7 -56.0,446.9 -56.0,448.5"/><polygon fill="#3f3f31" stroke="#3f3f31" stroke-width="0.5" points="-54.4,453.7 -54.4,452.1 -55.9,445.3 -56.0,446.9"/><polygon fill="#51513f" stroke="#51513f" stroke-width="0.5" points="-71.4,444.3 -70.7,442.4 -71.7,435.3 -72.5,437.1"/><polygon fill="#8c8c6d" stroke="#8c8c6d" stroke-width="0.5" points="-70.7,442.4 -65.9,440.6 -67.0,433.6 -71.7,435.3"/><polygon fill="#959574" stroke="#959574" stroke-width="0.5" points="-65.9,440.6 -59.2,438.9 -60.3,432.1 -67.0,433.6"/><polygon fill="#929272" stroke="#929272" stroke-width="0.5" points="-59.2,438.9 -53.9,437.4 -55.0,430.7 -60.3,432.1"/><polygon fill="#65654f" stroke="#65654f" stroke-width="0.5" points="-53.9,437.4 -52.6,435.8 -53.7,429.1 -55.0,430.7"/><polygon fill="#484838" stroke="#484838" stroke-width="0.5" points="-52.6,435.8 -52.3,434.1 -53.3,427.4 -53.7,429.1"/><polygon fill="#494939" stroke="#494939" stroke-width="0.5" points="-52.3,434.1 -51.9,432.5 -52.9,425.8 -53.3,427.4"/><polygon fill="#404031" stroke="#404031" stroke-width="0.5" points="-67.0,423.4 -67.0,421.4 -67.5,414.5 -67.6,416.4"/><polygon fill="#5d5d48" stroke="#5d5d48" stroke-width="0.5" points="-67.0,421.4 -65.9,419.6 -66.4,412.7 -67.5,414.5"/><polygon fill="#979775" stroke="#979775" stroke-width="0.5" points="-65.9,419.6 -60.8,418.5 -61.3,411.7 -66.4,412.7"/><polygon fill="#9f9f7c" stroke="#9f9f7c" stroke-width="0.5" points="-60.8,418.5 -53.9,418.0 -54.4,411.3 -61.3,411.7"/><polygon fill="#9c9c7a" stroke="#9c9c7a" stroke-width="0.5" points="-53.9,418.0 -48.4,417.3 -49.0,410.8 -54.4,411.3"/><polygon fill="#707057" stroke="#707057" stroke-width="0.5" points="-48.4,417.3 -46.8,415.8 -47.4,409.3 -49.0,410.8"/><polygon fill="#535341" stroke="#535341" stroke-width="0.5" points="-46.8,415.8 -46.1,414.2 -46.7,407.7 -47.4,409.3"/><polygon fill="#545441" stroke="#545441" stroke-width="0.5" points="-46.1,414.2 -45.4,412.5 -46.0,406.1 -46.7,407.7"/><polygon fill="#3b3b2e" stroke="#3b3b2e" stroke-width="0.5" points="-45.4,412.5 -45.6,410.6 -46.1,404.2 -46.0,406.1"/><polygon fill="#4a4a39" stroke="#4a4a39" stroke-width="0.5" points="-58.3,400.6 -57.8,398.5 -57.8,391.8 -58.4,393.9"/><polygon fill="#686851" stroke="#686851" stroke-width="0.5" points="-57.8,398.5 -56.4,396.8 -56.4,390.2 -57.8,391.8"/><polygon fill="#a1a17d" stroke="#a1a17d" stroke-width="0.5" points="-56.4,396.8 -51.2,396.6 -51.3,390.1 -56.4,390.2"/><polygon fill="#a8a883" stroke="#a8a883" stroke-width="0.5" points="-51.2,396.6 -44.3,397.2 -44.5,390.8 -51.3,390.1"/><polygon fill="#a6a681" stroke="#a6a681" stroke-width="0.5" points="-44.3,397.2 -38.8,397.4 -39.0,391.2 -44.5,390.8"/><polygon fill="#7b7b60" stroke="#7b7b60" stroke-width="0.5" points="-38.8,397.4 -37.0,396.2 -37.2,390.0 -39.0,391.2"/><polygon fill="#5e5e49" stroke="#5e5e49" stroke-width="0.5" points="-37.0,396.2 -36.0,394.6 -36.2,388.5 -37.2,390.0"/><polygon fill="#5f5f4a" stroke="#5f5f4a" stroke-width="0.5" points="-36.0,394.6 -35.0,393.0 -35.2,386.9 -36.2,388.5"/><polygon fill="#444435" stroke="#444435" stroke-width="0.5" points="-35.0,393.0 -34.8,391.0 -34.9,384.9 -35.2,386.9"/><polygon fill="#545442" stroke="#545442" stroke-width="0.5" points="-45.1,378.5 -44.2,376.5 -43.8,370.2 -44.7,372.2"/><polygon fill="#73735a" stroke="#73735a" stroke-width="0.5" points="-44.2,376.5 -42.4,374.9 -42.0,368.8 -43.8,370.2"/><polygon fill="#aaaa85" stroke="#aaaa85" stroke-width="0.5" points="-42.4,374.9 -37.4,375.6 -37.0,369.5 -42.0,368.8"/><polygon fill="#b1b18a" stroke="#b1b18a" stroke-width="0.5" points="-37.4,375.6 -30.8,377.5 -30.6,371.5 -37.0,369.5"/><polygon fill="#afaf88" stroke="#afaf88" stroke-width="0.5" points="-30.8,377.5 -25.5,378.7 -25.4,372.9 -30.6,371.5"/><polygon fill="#868669" stroke="#868669" stroke-width="0.5" points="-25.5,378.7 -23.5,377.7 -23.4,372.0 -25.4,372.9"/><polygon fill="#696952" stroke="#696952" stroke-width="0.5" points="-23.5,377.7 -22.2,376.3 -22.1,370.5 -23.4,372.0"/><polygon fill="#6a6a53" stroke="#6a6a53" stroke-width="0.5" points="-22.2,376.3 -20.9,374.8 -20.8,369.1 -22.1,370.5"/><polygon fill="#4e4e3d" stroke="#4e4e3d" stroke-width="0.5" points="-20.9,374.8 -20.3,372.8 -20.1,367.2 -20.8,369.1"/><polygon fill="#60604b" stroke="#60604b" stroke-width="0.5" points="-27.7,358.2 -26.4,356.2 -25.7,350.5 -27.0,352.4"/><polygon fill="#7f7f63" stroke="#7f7f63" stroke-width="0.5" points="-26.4,356.2 -24.5,355.0 -23.7,349.4 -25.7,350.5"/><polygon fill="#b3b38c" stroke="#b3b38c" stroke-width="0.5" points="-24.5,355.0 -19.7,356.6 -19.1,351.1 -23.7,349.4"/><polygon fill="#b9b990" stroke="#b9b990" stroke-width="0.5" points="-19.7,356.6 -13.7,359.6 -13.3,354.2 -19.1,351.1"/><polygon fill="#b7b78f" stroke="#b7b78f" stroke-width="0.5" points="-13.7,359.6 -8.9,361.8 -8.5,356.5 -13.3,354.2"/><polygon fill="#919171" stroke="#919171" stroke-width="0.5" points="-8.9,361.8 -6.8,361.2 -6.4,355.9 -8.5,356.5"/><polygon fill="#75755b" stroke="#75755b" stroke-width="0.5" points="-6.8,361.2 -5.2,359.9 -4.9,354.7 -6.4,355.9"/><polygon fill="#76765c" stroke="#76765c" stroke-width="0.5" points="-5.2,359.9 -3.7,358.7 -3.3,353.5 -4.9,354.7"/><polygon fill="#595945" stroke="#595945" stroke-width="0.5" points="-3.7,358.7 -2.7,356.7 -2.3,351.6 -3.3,353.5"/><polygon fill="#6b6b54" stroke="#6b6b54" stroke-width="0.5" points="-6.9,340.5 -5.3,338.8 -4.4,333.7 -6.0,335.4"/><polygon fill="#8a8a6c" stroke="#8a8a6c" stroke-width="0.5" points="-5.3,338.8 -3.1,337.9 -2.2,332.9 -4.4,333.7"/><polygon fill="#baba91" stroke="#baba91" stroke-width="0.5" points="-3.1,337.9 1.2,340.4 1.9,335.4 -2.2,332.9"/><polygon fill="#bebe94" stroke="#bebe94" stroke-width="0.5" points="1.2,340.4 6.3,344.5 6.8,339.7 1.9,335.4"/><polygon fill="#bdbd93" stroke="#bdbd93" stroke-width="0.5" points="6.3,344.5 10.5,347.6 10.9,342.8 6.8,339.7"/><polygon fill="#9c9c7a" stroke="#9c9c7a" stroke-width="0.5" points="10.5,347.6 12.6,347.3 13.0,342.6 10.9,342.8"/><polygon fill="#808064" stroke="#808064" stroke-width="0.5" points="12.6,347.3 14.3,346.3 14.7,341.7 13.0,342.6"/><polygon fill="#7f7f63" stroke="#7f7f63" stroke-width="0.5" points="13.9,351.1 15.6,350.0 16.0,345.3 14.3,346.3"/><polygon fill="#63634d" stroke="#63634d" stroke-width="0.5" points="15.6,350.0 16.9,348.2 17.4,343.6 16.0,345.3"/><polygon fill="#75755b" stroke="#75755b" stroke-width="0.5" points="15.7,331.0 17.5,329.5 18.4,324.9 16.6,326.4"/><polygon fill="#949473" stroke="#949473" stroke-width="0.5" points="17.5,329.5 19.8,328.9 20.7,324.4 18.4,324.9"/><polygon fill="#bebe94" stroke="#bebe94" stroke-width="0.5" points="19.8,328.9 23.5,332.1 24.2,327.7 20.7,324.4"/><polygon fill="#bfbf95" stroke="#bfbf95" stroke-width="0.5" points="23.5,332.1 27.7,337.1 28.3,332.8 24.2,327.7"/><polygon fill="#bfbf95" stroke="#bfbf95" stroke-width="0.5" points="27.7,337.1 31.2,340.9 31.7,336.6 28.3,332.8"/><polygon fill="#a5a581" stroke="#a5a581" stroke-width="0.5" points="31.2,340.9 33.4,341.0 33.8,336.7 31.7,336.6"/><polygon fill="#8a8a6b" stroke="#8a8a6b" stroke-width="0.5" points="33.4,341.0 35.2,340.2 35.6,336.0 33.8,336.7"/><polygon fill="#8b8b6c" stroke="#8b8b6c" stroke-width="0.5" points="35.2,340.2 37.0,339.5 37.4,335.3 35.6,336.0"/><polygon fill="#6e6e55" stroke="#6e6e55" stroke-width="0.5" points="37.0,339.5 38.6,337.9 39.0,333.8 37.4,335.3"/><polygon fill="#444435" stroke="#444435" stroke-width="0.5" points="38.6,337.9 39.3,332.4 39.8,328.3 39.0,333.8"/><polygon fill="#494939" stroke="#494939" stroke-width="0.5" points="39.7,325.4 40.8,320.3 41.6,316.4 40.4,321.4"/><polygon fill="#818164" stroke="#818164" stroke-width="0.5" points="40.8,320.3 42.8,319.1 43.6,315.3 41.6,316.4"/><polygon fill="#9f9f7c" stroke="#9f9f7c" stroke-width="0.5" points="42.8,319.1 45.1,318.9 45.9,315.1 43.6,315.3"/><polygon fill="#bfbf95" stroke="#bfbf95" stroke-width="0.5" points="45.1,318.9 48.0,322.8 48.6,319.0 45.9,315.1"/><polygon fill="#bebe94" stroke="#bebe94" stroke-width="0.5" points="48.0,322.8 51.0,328.6 51.4,324.9 48.6,319.0"/><polygon fill="#bfbf95" stroke="#bfbf95" stroke-width="0.5" points="51.0,328.6 53.6,333.0 53.9,329.4 51.4,324.9"/><polygon fill="#afaf88" stroke="#afaf88" stroke-width="0.5" points="53.6,333.0 55.6,333.5 55.8,329.9 53.9,329.4"/><polygon fill="#959574" stroke="#959574" stroke-width="0.5" points="55.6,333.5 57.5,333.0 57.7,329.4 55.8,329.9"/><polygon fill="#969675" stroke="#969675" stroke-width="0.5" points="57.5,333.0 59.3,332.6 59.5,329.1 57.7,329.4"/><polygon fill="#79795e" stroke="#79795e" stroke-width="0.5" points="59.3,332.6 61.2,331.3 61.3,327.8 59.5,329.1"/><polygon fill="#4e4e3c" stroke="#4e4e3c" stroke-width="0.5" points="61.2,331.3 62.8,325.9 63.1,322.5 61.3,327.8"/><polygon fill="#4b4b3a" stroke="#4b4b3a" stroke-width="0.5" points="62.8,325.9 64.6,319.0 65.0,315.7 63.1,322.5"/><polygon fill="#535341" stroke="#535341" stroke-width="0.5" points="64.6,319.0 66.6,314.0 67.1,310.8 65.0,315.7"/><polygon fill="#8c8c6d" stroke="#8c8c6d" stroke-width="0.5" points="66.6,314.0 68.7,313.2 69.2,310.1 67.1,310.8"/><polygon fill="#a9a984" stroke="#a9a984" stroke-width="0.5" points="68.7,313.2 70.8,313.5 71.3,310.4 69.2,310.1"/><polygon fill="#bebe94" stroke="#bebe94" stroke-width="0.5" points="70.8,313.5 72.8,317.8 73.2,314.8 71.3,310.4"/><polygon fill="#baba91" stroke="#baba91" stroke-width="0.5" points="72.8,317.8 74.6,324.2 74.7,321.1 73.2,314.8"/><polygon fill="#bbbb92" stroke="#bbbb92" stroke-width="0.5" points="74.6,324.2 76.2,329.1 76.1,326.0 74.7,321.1"/><polygon fill="#b7b78f" stroke="#b7b78f" stroke-width="0.5" points="76.2,329.1 77.9,329.9 77.9,326.9 76.1,326.0"/><polygon fill="#a0a07c" stroke="#a0a07c" stroke-width="0.5" points="77.9,329.9 79.8,329.8 79.7,326.8 77.9,326.9"/><polygon fill="#a1a17d" stroke="#a1a17d" stroke-width="0.5" points="79.8,329.8 81.6,329.7 81.5,326.7 79.7,326.8"/><polygon fill="#848467" stroke="#848467" stroke-width="0.5" points="81.6,329.7 83.6,328.7 83.4,325.8 81.5,326.7"/><polygon fill="#585845" stroke="#585845" stroke-width="0.5" points="83.6,328.7 86.1,323.6 86.1,320.8 83.4,325.8"/><polygon fill="#555542" stroke="#555542" stroke-width="0.5" points="86.1,323.6 89.1,317.0 89.1,314.3 86.1,320.8"/><polygon fill="#5e5e49" stroke="#5e5e49" stroke-width="0.5" points="89.1,317.0 91.9,312.5 92.0,309.9 89.1,314.3"/><polygon fill="#979776" stroke="#979776" stroke-width="0.5" points="91.9,312.5 94.0,312.0 94.1,309.5 92.0,309.9"/><polygon fill="#b3b38b" stroke="#b3b38b" stroke-width="0.5" points="94.0,312.0 95.9,312.6 96.0,310.2 94.1,309.5"/><polygon fill="#b9b990" stroke="#b9b990" stroke-width="0.5" points="95.9,312.6 97.0,317.4 96.9,314.9 96.0,310.2"/><polygon fill="#bdbd93" stroke="#bdbd93" stroke-width="0.5" points="98.0,329.2 99.5,330.3 99.0,327.8 97.6,326.6"/><polygon fill="#aaaa84" stroke="#aaaa84" stroke-width="0.5" points="99.5,330.3 101.2,330.5 100.7,328.0 99.0,327.8"/><polygon fill="#abab85" stroke="#abab85" stroke-width="0.5" points="101.2,330.5 102.9,330.8 102.4,328.3 100.7,328.0"/><polygon fill="#8f8f6f" stroke="#8f8f6f" stroke-width="0.5" points="102.9,330.8 104.9,330.1 104.4,327.7 102.4,328.3"/><polygon fill="#63634d" stroke="#63634d" stroke-width="0.5" points="104.9,330.1 108.3,325.5 107.8,323.2 104.4,327.7"/><polygon fill="#60604b" stroke="#60604b" stroke-width="0.5" points="108.3,325.5 112.2,319.5 111.8,317.3 107.8,323.2"/><polygon fill="#686851" stroke="#686851" stroke-width="0.5" points="112.2,319.5 115.6,315.4 115.2,313.4 111.8,317.3"/><polygon fill="#a2a27e" stroke="#a2a27e" stroke-width="0.5" points="115.6,315.4 117.7,315.4 117.3,313.4 115.2,313.4"/><polygon fill="#baba91" stroke="#baba91" stroke-width="0.5" points="117.7,315.4 119.4,316.3 118.9,314.4 117.3,313.4"/><polygon fill="#bfbf95" stroke="#bfbf95" stroke-width="0.5" points="118.2,333.2 119.4,334.5 118.5,332.4 117.3,331.0"/><polygon fill="#b3b38c" stroke="#b3b38c" stroke-width="0.5" points="119.4,334.5 121.0,335.1 120.0,333.0 118.5,332.4"/><polygon fill="#b4b48c" stroke="#b4b48c" stroke-width="0.5" points="121.0,335.1 122.5,335.6 121.5,333.5 120.0,333.0"/><polygon fill="#9a9a78" stroke="#9a9a78" stroke-width="0.5" points="122.5,335.6 124.5,335.3 123.4,333.3 121.5,333.5"/><polygon fill="#6d6d55" stroke="#6d6d55" stroke-width="0.5" points="124.5,335.3 128.4,331.3 127.4,329.4 123.4,333.3"/><polygon fill="#6a6a53" stroke="#6a6a53" stroke-width="0.5" points="128.4,331.3 133.2,326.0 132.2,324.3 127.4,329.4"/><polygon fill="#737359" stroke="#737359" stroke-width="0.5" points="133.2,326.0 137.1,322.6 136.1,321.0 132.2,324.3"/><polygon fill="#acac86" stroke="#acac86" stroke-width="0.5" points="137.1,322.6 139.0,322.9 137.9,321.3 136.1,321.0"/><polygon fill="#bebe94" stroke="#bebe94" stroke-width="0.5" points="139.0,322.9 140.3,324.1 139.2,322.6 137.9,321.3"/><polygon fill="#baba91" stroke="#baba91" stroke-width="0.5" points="137.0,342.2 138.4,343.0 136.9,341.3 135.6,340.5"/><polygon fill="#bbbb91" stroke="#bbbb91" stroke-width="0.5" points="138.4,343.0 139.7,343.8 138.1,342.1 136.9,341.3"/><polygon fill="#a4a480" stroke="#a4a480" stroke-width="0.5" points="139.7,343.8 141.6,343.9 140.0,342.2 138.1,342.1"/><polygon fill="#78785d" stroke="#78785d" stroke-width="0.5" points="141.6,343.9 145.9,340.5 144.3,339.0 140.0,342.2"/><polygon fill="#75755b" stroke="#75755b" stroke-width="0.5" points="145.9,340.5 151.2,336.1 149.6,334.7 144.3,339.0"/><polygon fill="#7d7d62" stroke="#7d7d62" stroke-width="0.5" points="151.2,336.1 155.4,333.4 153.8,332.2 149.6,334.7"/><polygon fill="#b5b58d" stroke="#b5b58d" stroke-width="0.5" points="155.4,333.4 157.1,334.1 155.4,332.9 153.8,332.2"/><polygon fill="#aeae88" stroke="#aeae88" stroke-width="0.5" points="154.0,355.0 155.7,355.3 153.6,353.9 151.9,353.5"/><polygon fill="#828265" stroke="#828265" stroke-width="0.5" points="155.7,355.3 160.3,352.8 158.1,351.5 153.6,353.9"/><polygon fill="#7f7f63" stroke="#7f7f63" stroke-width="0.5" points="160.3,352.8 166.0,349.3 163.7,348.2 158.1,351.5"/><polygon fill="#88886a" stroke="#88886a" stroke-width="0.5" points="166.0,349.3 170.3,347.4 168.0,346.4 163.7,348.2"/><polygon fill="#b6b68e" stroke="#b6b68e" stroke-width="0.5" points="165.2,368.5 166.7,369.2 163.9,367.8 162.5,367.2"/><polygon fill="#8c8c6d" stroke="#8c8c6d" stroke-width="0.5" points="166.7,369.2 171.3,367.4 168.5,366.2 163.9,367.8"/><polygon fill="#89896b" stroke="#89896b" stroke-width="0.5" points="171.3,367.4 177.1,365.0 174.2,363.9 168.5,366.2"/><polygon fill="#929272" stroke="#929272" stroke-width="0.5" points="177.1,365.0 181.3,363.8 178.4,362.8 174.2,363.9"/><polygon fill="#979775" stroke="#979775" stroke-width="0.5" points="174.2,384.8 178.7,383.9 175.4,382.7 170.9,383.5"/><polygon fill="#949473" stroke="#949473" stroke-width="0.5" points="178.7,383.9 184.4,382.4 181.0,381.3 175.4,382.7"/><polygon fill="#9d9d7a" stroke="#9d9d7a" stroke-width="0.5" points="184.4,382.4 188.5,381.9 185.0,381.0 181.0,381.3"/><polygon fill="#a1a17d" stroke="#a1a17d" stroke-width="0.5" points="178.2,401.7 182.6,401.5 178.7,400.2 174.5,400.3"/><polygon fill="#9e9e7b" stroke="#9e9e7b" stroke-width="0.5" points="182.6,401.5 188.0,401.0 184.1,399.8 178.7,400.2"/><polygon fill="#a7a782" stroke="#a7a782" stroke-width="0.5" points="188.0,401.0 191.9,401.2 187.8,400.1 184.1,399.8"/><polygon fill="#aaaa85" stroke="#aaaa85" stroke-width="0.5" points="179.0,419.2 183.0,419.7 178.7,418.3 174.8,417.7"/><polygon fill="#a8a883" stroke="#a8a883" stroke-width="0.5" points="183.0,419.7 188.1,420.1 183.7,418.8 178.7,418.3"/><polygon fill="#b0b089" stroke="#b0b089" stroke-width="0.5" points="188.1,420.1 191.5,420.9 187.0,419.7 183.7,418.8"/><polygon fill="#b3b38c" stroke="#b3b38c" stroke-width="0.5" points="176.5,436.9 180.1,438.0 175.4,436.4 172.0,435.2"/><polygon fill="#b1b18a" stroke="#b1b18a" stroke-width="0.5" points="180.1,438.0 184.7,439.2 179.9,437.7 175.4,436.4"/><polygon fill="#343428" stroke="#343428" stroke-width="0.5" points="121.4,524.9 117.8,522.6 112.2,519.1 115.6,521.4"/><polygon fill="#333328" stroke="#333328" stroke-width="0.5" points="106.1,537.1 103.5,535.4 97.8,531.5 100.3,533.3"/><polygon fill="#303025" stroke="#303025" stroke-width="0.5" points="103.5,535.4 100.6,532.5 95.0,528.6 97.8,531.5"/><polygon fill="#313126" stroke="#313126" stroke-width="0.5" points="100.6,532.5 98.1,530.3 92.6,526.4 95.0,528.6"/><polygon fill="#303025" stroke="#303025" stroke-width="0.5" points="86.7,545.7 84.6,543.5 79.0,539.3 81.1,541.4"/><polygon fill="#303025" stroke="#303025" stroke-width="0.5" points="84.6,543.5 82.4,540.1 77.0,535.8 79.0,539.3"/><polygon fill="#303025" stroke="#303025" stroke-width="0.5" points="82.4,540.1 80.5,537.5 75.1,533.1 77.0,535.8"/><polygon fill="#303025" stroke="#303025" stroke-width="0.5" points="66.7,551.7 65.1,549.1 59.6,544.4 61.1,547.0"/><polygon fill="#333328" stroke="#333328" stroke-width="0.5" points="65.1,549.1 63.7,545.2 58.3,540.5 59.6,544.4"/><polygon fill="#323227" stroke="#323227" stroke-width="0.5" points="63.7,545.2 62.3,542.2 57.1,537.5 58.3,540.5"/><polygon fill="#333328" stroke="#333328" stroke-width="0.5" points="46.3,554.9 45.3,552.0 40.0,546.9 41.0,549.8"/><polygon fill="#39392c" stroke="#39392c" stroke-width="0.5" points="45.3,552.0 44.7,547.7 39.5,542.6 40.0,546.9"/><polygon fill="#37372b" stroke="#37372b" stroke-width="0.5" points="44.7,547.7 44.0,544.3 38.9,539.2 39.5,542.6"/><polygon fill="#39392d" stroke="#39392d" stroke-width="0.5" points="26.1,555.2 25.6,552.0 20.7,546.5 21.0,549.7"/><polygon fill="#414133" stroke="#414133" stroke-width="0.5" points="25.6,552.0 25.9,547.4 21.0,541.9 20.7,546.5"/><polygon fill="#3e3e31" stroke="#3e3e31" stroke-width="0.5" points="25.9,547.4 25.9,543.7 21.1,538.3 21.0,541.9"/><polygon fill="#424233" stroke="#424233" stroke-width="0.5" points="6.4,552.4 6.6,548.9 2.0,543.1 1.6,546.5"/><polygon fill="#4b4b3a" stroke="#4b4b3a" stroke-width="0.5" points="6.6,548.9 7.8,544.2 3.3,538.4 2.0,543.1"/><polygon fill="#484838" stroke="#484838" stroke-width="0.5" points="7.8,544.2 8.5,540.4 4.1,534.6 3.3,538.4"/><polygon fill="#4b4b3b" stroke="#4b4b3b" stroke-width="0.5" points="-12.2,546.4 -11.3,542.9 -15.6,536.7 -16.6,540.2"/><polygon fill="#555542" stroke="#555542" stroke-width="0.5" points="-11.3,542.9 -9.1,538.0 -13.3,531.9 -15.6,536.7"/><polygon fill="#525240" stroke="#525240" stroke-width="0.5" points="-9.1,538.0 -7.7,534.1 -11.8,528.0 -13.3,531.9"/><polygon fill="#303025" stroke="#303025" stroke-width="0.5" points="-7.7,534.1 -8.4,532.9 -12.5,526.8 -11.8,528.0"/><polygon fill="#565643" stroke="#565643" stroke-width="0.5" points="-29.2,537.3 -27.5,533.7 -31.4,527.2 -33.1,530.7"/><polygon fill="#5f5f4a" stroke="#5f5f4a" stroke-width="0.5" points="-27.5,533.7 -24.4,528.9 -28.2,522.5 -31.4,527.2"/><polygon fill="#5c5c48" stroke="#5c5c48" stroke-width="0.5" points="-24.4,528.9 -22.2,525.1 -25.9,518.7 -28.2,522.5"/><polygon fill="#343428" stroke="#343428" stroke-width="0.5" points="-22.2,525.1 -22.7,523.6 -26.3,517.3 -25.9,518.7"/><polygon fill="#60604b" stroke="#60604b" stroke-width="0.5" points="-43.9,525.0 -41.5,521.5 -44.9,514.7 -47.4,518.2"/><polygon fill="#6a6a52" stroke="#6a6a52" stroke-width="0.5" points="-41.5,521.5 -37.5,517.0 -40.8,510.3 -44.9,514.7"/><polygon fill="#676750" stroke="#676750" stroke-width="0.5" points="-37.5,517.0 -34.5,513.3 -37.8,506.7 -40.8,510.3"/><polygon fill="#3a3a2d" stroke="#3a3a2d" stroke-width="0.5" points="-34.5,513.3 -34.7,511.7 -37.9,505.1 -37.8,506.7"/><polygon fill="#353529" stroke="#353529" stroke-width="0.5" points="-55.4,511.3 -55.9,509.7 -58.8,502.7 -58.4,504.3"/><polygon fill="#6b6b53" stroke="#6b6b53" stroke-width="0.5" points="-55.9,509.7 -52.8,506.4 -55.7,499.4 -58.8,502.7"/><polygon fill="#74745b" stroke="#74745b" stroke-width="0.5" points="-52.8,506.4 -47.9,502.3 -50.7,495.5 -55.7,499.4"/><polygon fill="#717158" stroke="#717158" stroke-width="0.5" points="-47.9,502.3 -44.2,498.9 -47.0,492.1 -50.7,495.5"/><polygon fill="#434334" stroke="#434334" stroke-width="0.5" points="-44.2,498.9 -44.0,497.2 -46.7,490.5 -47.0,492.1"/><polygon fill="#3c3c2f" stroke="#3c3c2f" stroke-width="0.5" points="-64.4,493.5 -64.5,491.8 -66.8,484.6 -66.7,486.4"/><polygon fill="#76765c" stroke="#76765c" stroke-width="0.5" points="-64.5,491.8 -60.7,488.8 -63.0,481.7 -66.8,484.6"/><polygon fill="#7f7f63" stroke="#7f7f63" stroke-width="0.5" points="-60.7,488.8 -55.1,485.3 -57.3,478.3 -63.0,481.7"/><polygon fill="#7c7c60" stroke="#7c7c60" stroke-width="0.5" points="-55.1,485.3 -50.7,482.3 -52.9,475.4 -57.3,478.3"/><polygon fill="#4d4d3c" stroke="#4d4d3c" stroke-width="0.5" points="-50.7,482.3 -50.2,480.6 -52.4,473.7 -52.9,475.4"/><polygon fill="#36362a" stroke="#36362a" stroke-width="0.5" points="-50.2,480.6 -50.6,479.1 -52.7,472.3 -52.4,473.7"/><polygon fill="#36362a" stroke="#36362a" stroke-width="0.5" points="-50.6,479.1 -50.9,477.6 -53.0,470.8 -52.7,472.3"/><polygon fill="#454536" stroke="#454536" stroke-width="0.5" points="-69.4,473.4 -69.2,471.5 -70.9,464.3 -71.2,466.1"/><polygon fill="#808064" stroke="#808064" stroke-width="0.5" points="-69.2,471.5 -64.9,469.0 -66.6,461.9 -70.9,464.3"/><polygon fill="#89896b" stroke="#89896b" stroke-width="0.5" points="-64.9,469.0 -58.6,466.2 -60.3,459.3 -66.6,461.9"/><polygon fill="#868668" stroke="#868668" stroke-width="0.5" points="-58.6,466.2 -53.7,463.9 -55.3,457.0 -60.3,459.3"/><polygon fill="#585845" stroke="#585845" stroke-width="0.5" points="-53.7,463.9 -52.8,462.2 -54.4,455.3 -55.3,457.0"/><polygon fill="#3d3d30" stroke="#3d3d30" stroke-width="0.5" points="-52.8,462.2 -52.8,460.6 -54.4,453.7 -54.4,455.3"/><polygon fill="#3e3e30" stroke="#3e3e30" stroke-width="0.5" points="-52.8,460.6 -52.8,458.9 -54.4,452.1 -54.4,453.7"/><polygon fill="#50503e" stroke="#50503e" stroke-width="0.5" points="-70.2,451.4 -69.6,449.5 -70.7,442.4 -71.4,444.3"/><polygon fill="#8b8b6c" stroke="#8b8b6c" stroke-width="0.5" points="-69.6,449.5 -64.8,447.6 -65.9,440.6 -70.7,442.4"/><polygon fill="#939373" stroke="#939373" stroke-width="0.5" points="-64.8,447.6 -58.0,445.8 -59.2,438.9 -65.9,440.6"/><polygon fill="#909071" stroke="#909071" stroke-width="0.5" points="-58.0,445.8 -52.7,444.2 -53.9,437.4 -59.2,438.9"/><polygon fill="#63634d" stroke="#63634d" stroke-width="0.5" points="-52.7,444.2 -51.5,442.5 -52.6,435.8 -53.9,437.4"/><polygon fill="#474737" stroke="#474737" stroke-width="0.5" points="-51.5,442.5 -51.2,440.9 -52.3,434.1 -52.6,435.8"/><polygon fill="#484838" stroke="#484838" stroke-width="0.5" points="-51.2,440.9 -50.9,439.2 -51.9,432.5 -52.3,434.1"/><polygon fill="#3e3e31" stroke="#3e3e31" stroke-width="0.5" points="-66.4,430.4 -66.4,428.4 -67.0,421.4 -67.0,423.4"/><polygon fill="#5b5b47" stroke="#5b5b47" stroke-width="0.5" points="-66.4,428.4 -65.3,426.6 -65.9,419.6 -67.0,421.4"/><polygon fill="#959574" stroke="#959574" stroke-width="0.5" points="-65.3,426.6 -60.2,425.4 -60.8,418.5 -65.9,419.6"/><polygon fill="#9d9d7b" stroke="#9d9d7b" stroke-width="0.5" points="-60.2,425.4 -53.2,424.7 -53.9,418.0 -60.8,418.5"/><polygon fill="#9b9b79" stroke="#9b9b79" stroke-width="0.5" points="-53.2,424.7 -47.7,423.9 -48.4,417.3 -53.9,418.0"/><polygon fill="#6f6f56" stroke="#6f6f56" stroke-width="0.5" points="-47.7,423.9 -46.1,422.4 -46.8,415.8 -48.4,417.3"/><polygon fill="#51513f" stroke="#51513f" stroke-width="0.5" points="-46.1,422.4 -45.5,420.7 -46.1,414.2 -46.8,415.8"/><polygon fill="#525240" stroke="#525240" stroke-width="0.5" points="-45.5,420.7 -44.9,419.0 -45.4,412.5 -46.1,414.2"/><polygon fill="#484838" stroke="#484838" stroke-width="0.5" points="-58.2,407.3 -57.8,405.2 -57.8,398.5 -58.3,400.6"/><polygon fill="#666650" stroke="#666650" stroke-width="0.5" points="-57.8,405.2 -56.4,403.5 -56.4,396.8 -57.8,398.5"/><polygon fill="#9f9f7c" stroke="#9f9f7c" stroke-width="0.5" points="-56.4,403.5 -51.1,403.1 -51.2,396.6 -56.4,396.8"/><polygon fill="#a7a782" stroke="#a7a782" stroke-width="0.5" points="-51.1,403.1 -44.2,403.6 -44.3,397.2 -51.2,396.6"/><polygon fill="#a5a580" stroke="#a5a580" stroke-width="0.5" points="-44.2,403.6 -38.6,403.7 -38.8,397.4 -44.3,397.2"/><polygon fill="#7a7a5f" stroke="#7a7a5f" stroke-width="0.5" points="-38.6,403.7 -36.8,402.4 -37.0,396.2 -38.8,397.4"/><polygon fill="#5d5d48" stroke="#5d5d48" stroke-width="0.5" points="-36.8,402.4 -35.8,400.8 -36.0,394.6 -37.0,396.2"/><polygon fill="#5d5d49" stroke="#5d5d49" stroke-width="0.5" points="-35.8,400.8 -34.8,399.2 -35.0,393.0 -36.0,394.6"/><polygon fill="#424234" stroke="#424234" stroke-width="0.5" points="-34.8,399.2 -34.7,397.2 -34.8,391.0 -35.0,393.0"/><polygon fill="#535341" stroke="#535341" stroke-width="0.5" points="-45.4,384.8 -44.6,382.8 -44.2,376.5 -45.1,378.5"/><polygon fill="#727259" stroke="#727259" stroke-width="0.5" points="-44.6,382.8 -42.9,381.2 -42.4,374.9 -44.2,376.5"/><polygon fill="#a9a984" stroke="#a9a984" stroke-width="0.5" points="-42.9,381.2 -37.7,381.8 -37.4,375.6 -42.4,374.9"/><polygon fill="#b0b089" stroke="#b0b089" stroke-width="0.5" points="-37.7,381.8 -31.0,383.5 -30.8,377.5 -37.4,375.6"/><polygon fill="#aeae88" stroke="#aeae88" stroke-width="0.5" points="-31.0,383.5 -25.6,384.6 -25.5,378.7 -30.8,377.5"/><polygon fill="#858568" stroke="#858568" stroke-width="0.5" points="-25.6,384.6 -23.6,383.6 -23.5,377.7 -25.5,378.7"/><polygon fill="#686851" stroke="#686851" stroke-width="0.5" points="-23.6,383.6 -22.4,382.1 -22.2,376.3 -23.5,377.7"/><polygon fill="#696952" stroke="#696952" stroke-width="0.5" points="-22.4,382.1 -21.1,380.6 -20.9,374.8 -22.2,376.3"/><polygon fill="#4d4d3c" stroke="#4d4d3c" stroke-width="0.5" points="-21.1,380.6 -20.5,378.6 -20.3,372.8 -20.9,374.8"/><polygon fill="#5e5e49" stroke="#5e5e49" stroke-width="0.5" points="-28.4,364.0 -27.2,362.0 -26.4,356.2 -27.7,358.2"/><polygon fill="#7d7d62" stroke="#7d7d62" stroke-width="0.5" points="-27.2,362.0 -25.2,360.8 -24.5,355.0 -26.4,356.2"/><polygon fill="#b2b28b" stroke="#b2b28b" stroke-width="0.5" points="-25.2,360.8 -20.3,362.2 -19.7,356.6 -24.5,355.0"/><polygon fill="#b8b88f" stroke="#b8b88f" stroke-width="0.5" points="-20.3,362.2 -14.2,365.2 -13.7,359.6 -19.7,356.6"/><polygon fill="#b6b68e" stroke="#b6b68e" stroke-width="0.5" points="-14.2,365.2 -9.2,367.2 -8.9,361.8 -13.7,359.6"/><polygon fill="#909070" stroke="#909070" stroke-width="0.5" points="-9.2,367.2 -7.1,366.6 -6.8,361.2 -8.9,361.8"/><polygon fill="#73735a" stroke="#73735a" stroke-width="0.5" points="-7.1,366.6 -5.6,365.2 -5.2,359.9 -6.8,361.2"/><polygon fill="#74745a" stroke="#74745a" stroke-width="0.5" points="-5.6,365.2 -4.0,364.0 -3.7,358.7 -5.2,359.9"/><polygon fill="#575744" stroke="#575744" stroke-width="0.5" points="-4.0,364.0 -3.1,362.0 -2.7,356.7 -3.7,358.7"/><polygon fill="#6a6a52" stroke="#6a6a52" stroke-width="0.5" points="-7.7,345.8 -6.2,344.0 -5.3,338.8 -6.9,340.5"/><polygon fill="#89896b" stroke="#89896b" stroke-width="0.5" points="-6.2,344.0 -4.0,343.1 -3.1,337.9 -5.3,338.8"/><polygon fill="#b9b990" stroke="#b9b990" stroke-width="0.5" points="-4.0,343.1 0.4,345.4 1.2,340.4 -3.1,337.9"/><polygon fill="#bdbd93" stroke="#bdbd93" stroke-width="0.5" points="0.4,345.4 5.7,349.5 6.3,344.5 1.2,340.4"/><polygon fill="#bcbc93" stroke="#bcbc93" stroke-width="0.5" points="5.7,349.5 10.0,352.5 10.5,347.6 6.3,344.5"/><polygon fill="#9b9b79" stroke="#9b9b79" stroke-width="0.5" points="10.0,352.5 12.2,352.1 12.6,347.3 10.5,347.6"/><polygon fill="#7e7e63" stroke="#7e7e63" stroke-width="0.5" points="12.2,352.1 13.9,351.1 14.3,346.3 12.6,347.3"/><polygon fill="#7e7e62" stroke="#7e7e62" stroke-width="0.5" points="13.4,355.9 15.1,354.9 15.6,350.0 13.9,351.1"/><polygon fill="#61614c" stroke="#61614c" stroke-width="0.5" points="15.1,354.9 16.4,353.0 16.9,348.2 15.6,350.0"/><polygon fill="#74745a" stroke="#74745a" stroke-width="0.5" points="14.7,335.7 16.5,334.1 17.5,329.5 15.7,331.0"/><polygon fill="#929272" stroke="#929272" stroke-width="0.5" points="16.5,334.1 18.8,333.5 19.8,328.9 17.5,329.5"/><polygon fill="#bebe94" stroke="#bebe94" stroke-width="0.5" points="18.8,333.5 22.6,336.6 23.5,332.1 19.8,328.9"/><polygon fill="#bfbf95" stroke="#bfbf95" stroke-width="0.5" points="22.6,336.6 27.1,341.6 27.7,337.1 23.5,332.1"/><polygon fill="#bfbf95" stroke="#bfbf95" stroke-width="0.5" points="27.1,341.6 30.8,345.3 31.2,340.9 27.7,337.1"/><polygon fill="#a4a480" stroke="#a4a480" stroke-width="0.5" points="30.8,345.3 32.9,345.3 33.4,341.0 31.2,340.9"/><polygon fill="#88886a" stroke="#88886a" stroke-width="0.5" points="32.9,345.3 34.8,344.5 35.2,340.2 33.4,341.0"/><polygon fill="#89896b" stroke="#89896b" stroke-width="0.5" points="34.8,344.5 36.6,343.7 37.0,339.5 35.2,340.2"/><polygon fill="#6c6c54" stroke="#6c6c54" stroke-width="0.5" points="36.6,343.7 38.2,342.0 38.6,337.9 37.0,339.5"/><polygon fill="#7f7f63" stroke="#7f7f63" stroke-width="0.5" points="39.9,324.3 42.0,323.0 42.8,319.1 40.8,320.3"/><polygon fill="#9e9e7b" stroke="#9e9e7b" stroke-width="0.5" points="42.0,323.0 44.2,322.8 45.1,318.9 42.8,319.1"/><polygon fill="#bfbf95" stroke="#bfbf95" stroke-width="0.5" points="44.2,322.8 47.3,326.6 48.0,322.8 45.1,318.9"/><polygon fill="#bfbf95" stroke="#bfbf95" stroke-width="0.5" points="47.3,326.6 50.5,332.4 51.0,328.6 48.0,322.8"/><polygon fill="#bfbf95" stroke="#bfbf95" stroke-width="0.5" points="50.5,332.4 53.3,336.8 53.6,333.0 51.0,328.6"/><polygon fill="#aeae87" stroke="#aeae87" stroke-width="0.5" points="53.3,336.8 55.3,337.2 55.6,333.5 53.6,333.0"/><polygon fill="#939373" stroke="#939373" stroke-width="0.5" points="55.3,337.2 57.2,336.7 57.5,333.0 55.6,333.5"/><polygon fill="#949474" stroke="#949474" stroke-width="0.5" points="57.2,336.7 59.1,336.2 59.3,332.6 57.5,333.0"/><polygon fill="#77775d" stroke="#77775d" stroke-width="0.5" points="59.1,336.2 60.9,334.9 61.2,331.3 59.3,332.6"/><polygon fill="#4c4c3b" stroke="#4c4c3b" stroke-width="0.5" points="60.9,334.9 62.4,329.4 62.8,325.9 61.2,331.3"/><polygon fill="#4a4a39" stroke="#4a4a39" stroke-width="0.5" points="62.4,329.4 64.0,322.4 64.6,319.0 62.8,325.9"/><polygon fill="#525240" stroke="#525240" stroke-width="0.5" points="64.0,322.4 65.9,317.3 66.6,314.0 64.6,319.0"/><polygon fill="#8a8a6c" stroke="#8a8a6c" stroke-width="0.5" points="65.9,317.3 68.1,316.5 68.7,313.2 66.6,314.0"/><polygon fill="#a8a883" stroke="#a8a883" stroke-width="0.5" points="68.1,316.5 70.3,316.7 70.8,313.5 68.7,313.2"/><polygon fill="#bebe94" stroke="#bebe94" stroke-width="0.5" points="70.3,316.7 72.4,321.0 72.8,317.8 70.8,313.5"/><polygon fill="#bbbb92" stroke="#bbbb92" stroke-width="0.5" points="72.4,321.0 74.3,327.4 74.6,324.2 72.8,317.8"/><polygon fill="#bcbc93" stroke="#bcbc93" stroke-width="0.5" points="74.3,327.4 76.1,332.3 76.2,329.1 74.6,324.2"/><polygon fill="#b6b68e" stroke="#b6b68e" stroke-width="0.5" points="76.1,332.3 77.9,333.1 77.9,329.9 76.2,329.1"/><polygon fill="#9e9e7b" stroke="#9e9e7b" stroke-width="0.5" points="77.9,333.1 79.8,332.9 79.8,329.8 77.9,329.9"/><polygon fill="#9f9f7c" stroke="#9f9f7c" stroke-width="0.5" points="79.8,332.9 81.7,332.8 81.6,329.7 79.8,329.8"/><polygon fill="#828266" stroke="#828266" stroke-width="0.5" points="81.7,332.8 83.6,331.7 83.6,328.7 81.6,329.7"/><polygon fill="#575743" stroke="#575743" stroke-width="0.5" points="83.6,331.7 86.1,326.5 86.1,323.6 83.6,328.7"/><polygon fill="#545441" stroke="#545441" stroke-width="0.5" points="86.1,326.5 88.9,319.8 89.1,317.0 86.1,323.6"/><polygon fill="#5c5c48" stroke="#5c5c48" stroke-width="0.5" points="88.9,319.8 91.6,315.1 91.9,312.5 89.1,317.0"/><polygon fill="#969675" stroke="#969675" stroke-width="0.5" points="91.6,315.1 93.8,314.6 94.0,312.0 91.9,312.5"/><polygon fill="#b2b28a" stroke="#b2b28a" stroke-width="0.5" points="93.8,314.6 95.8,315.2 95.9,312.6 94.0,312.0"/><polygon fill="#b9b990" stroke="#b9b990" stroke-width="0.5" points="95.8,315.2 97.0,319.9 97.0,317.4 95.9,312.6"/><polygon fill="#b4b48c" stroke="#b4b48c" stroke-width="0.5" points="97.0,319.9 97.6,326.6 97.4,324.0 97.0,317.4"/><polygon fill="#b6b68e" stroke="#b6b68e" stroke-width="0.5" points="97.6,326.6 98.3,331.9 98.0,329.2 97.4,324.0"/><polygon fill="#bcbc93" stroke="#bcbc93" stroke-width="0.5" points="98.3,331.9 99.9,333.0 99.5,330.3 98.0,329.2"/><polygon fill="#a9a983" stroke="#a9a983" stroke-width="0.5" points="99.9,333.0 101.6,333.1 101.2,330.5 99.5,330.3"/><polygon fill="#a9a984" stroke="#a9a984" stroke-width="0.5" points="101.6,333.1 103.4,333.3 102.9,330.8 101.2,330.5"/><polygon fill="#8e8e6e" stroke="#8e8e6e" stroke-width="0.5" points="103.4,333.3 105.4,332.6 104.9,330.1 102.9,330.8"/><polygon fill="#61614c" stroke="#61614c" stroke-width="0.5" points="105.4,332.6 108.7,327.8 108.3,325.5 104.9,330.1"/><polygon fill="#5e5e49" stroke="#5e5e49" stroke-width="0.5" points="108.7,327.8 112.5,321.7 112.2,319.5 108.3,325.5"/><polygon fill="#676750" stroke="#676750" stroke-width="0.5" points="112.5,321.7 115.9,317.5 115.6,315.4 112.2,319.5"/><polygon fill="#a1a17d" stroke="#a1a17d" stroke-width="0.5" points="115.9,317.5 118.0,317.4 117.7,315.4 115.6,315.4"/><polygon fill="#b9b990" stroke="#b9b990" stroke-width="0.5" points="118.0,317.4 119.8,318.3 119.4,316.3 117.7,315.4"/><polygon fill="#bfbf95" stroke="#bfbf95" stroke-width="0.5" points="119.0,335.3 120.2,336.7 119.4,334.5 118.2,333.2"/><polygon fill="#b2b28b" stroke="#b2b28b" stroke-width="0.5" points="120.2,336.7 121.9,337.2 121.0,335.1 119.4,334.5"/><polygon fill="#b3b38b" stroke="#b3b38b" stroke-width="0.5" points="121.9,337.2 123.4,337.7 122.5,335.6 121.0,335.1"/><polygon fill="#989877" stroke="#989877" stroke-width="0.5" points="123.4,337.7 125.4,337.3 124.5,335.3 122.5,335.6"/><polygon fill="#6c6c54" stroke="#6c6c54" stroke-width="0.5" points="125.4,337.3 129.3,333.2 128.4,331.3 124.5,335.3"/><polygon fill="#696952" stroke="#696952" stroke-width="0.5" points="129.3,333.2 134.0,327.7 133.2,326.0 128.4,331.3"/><polygon fill="#717158" stroke="#717158" stroke-width="0.5" points="134.0,327.7 137.9,324.2 137.1,322.6 133.2,326.0"/><polygon fill="#abab85" stroke="#abab85" stroke-width="0.5" points="137.9,324.2 139.9,324.5 139.0,322.9 137.1,322.6"/><polygon fill="#bebe94" stroke="#bebe94" stroke-width="0.5" points="139.9,324.5 141.3,325.7 140.3,324.1 139.0,322.9"/><polygon fill="#b9b990" stroke="#b9b990" stroke-width="0.5" points="138.4,344.0 139.8,344.8 138.4,343.0 137.0,342.2"/><polygon fill="#baba91" stroke="#baba91" stroke-width="0.5" points="139.8,344.8 141.2,345.6 139.7,343.8 138.4,343.0"/><polygon fill="#a3a37f" stroke="#a3a37f" stroke-width="0.5" points="141.2,345.6 143.1,345.6 141.6,343.9 139.7,343.8"/><polygon fill="#76765c" stroke="#76765c" stroke-width="0.5" points="143.1,345.6 147.4,342.1 145.9,340.5 141.6,343.9"/><polygon fill="#73735a" stroke="#73735a" stroke-width="0.5" points="147.4,342.1 152.7,337.5 151.2,336.1 145.9,340.5"/><polygon fill="#7c7c61" stroke="#7c7c61" stroke-width="0.5" points="152.7,337.5 156.9,334.7 155.4,333.4 151.2,336.1"/><polygon fill="#b4b48c" stroke="#b4b48c" stroke-width="0.5" points="156.9,334.7 158.7,335.3 157.1,334.1 155.4,333.4"/><polygon fill="#adad87" stroke="#adad87" stroke-width="0.5" points="156.1,356.5 157.8,356.8 155.7,355.3 154.0,355.0"/><polygon fill="#818164" stroke="#818164" stroke-width="0.5" points="157.8,356.8 162.4,354.1 160.3,352.8 155.7,355.3"/><polygon fill="#7e7e62" stroke="#7e7e62" stroke-width="0.5" points="162.4,354.1 168.1,350.5 166.0,349.3 160.3,352.8"/><polygon fill="#878769" stroke="#878769" stroke-width="0.5" points="168.1,350.5 172.4,348.4 170.3,347.4 166.0,349.3"/><polygon fill="#b5b58d" stroke="#b5b58d" stroke-width="0.5" points="167.7,369.9 169.3,370.5 166.7,369.2 165.2,368.5"/><polygon fill="#8b8b6c" stroke="#8b8b6c" stroke-width="0.5" points="169.3,370.5 174.0,368.6 171.3,367.4 166.7,369.2"/><polygon fill="#88886a" stroke="#88886a" stroke-width="0.5" points="174.0,368.6 179.8,366.0 177.1,365.0 171.3,367.4"/><polygon fill="#919171" stroke="#919171" stroke-width="0.5" points="179.8,366.0 184.1,364.7 181.3,363.8 177.1,365.0"/><polygon fill="#959574" stroke="#959574" stroke-width="0.5" points="177.3,386.1 182.0,385.0 178.7,383.9 174.2,384.8"/><polygon fill="#929272" stroke="#929272" stroke-width="0.5" points="182.0,385.0 187.8,383.4 184.4,382.4 178.7,383.9"/><polygon fill="#9b9b79" stroke="#9b9b79" stroke-width="0.5" points="187.8,383.4 191.9,382.9 188.5,381.9 184.4,382.4"/><polygon fill="#9f9f7c" stroke="#9f9f7c" stroke-width="0.5" points="181.9,403.0 186.4,402.7 182.6,401.5 178.2,401.7"/><polygon fill="#9c9c7a" stroke="#9c9c7a" stroke-width="0.5" points="186.4,402.7 191.9,402.1 188.0,401.0 182.6,401.5"/><polygon fill="#a5a581" stroke="#a5a581" stroke-width="0.5" points="191.9,402.1 195.8,402.2 191.9,401.2 188.0,401.0"/><polygon fill="#a9a984" stroke="#a9a984" stroke-width="0.5" points="183.1,420.6 187.2,421.1 183.0,419.7 179.0,419.2"/><polygon fill="#a6a682" stroke="#a6a682" stroke-width="0.5" points="187.2,421.1 192.4,421.3 188.1,420.1 183.0,419.7"/><polygon fill="#afaf88" stroke="#afaf88" stroke-width="0.5" points="192.4,421.3 195.9,422.1 191.5,420.9 188.1,420.1"/><polygon fill="#b2b28b" stroke="#b2b28b" stroke-width="0.5" points="181.1,438.5 184.7,439.6 180.1,438.0 176.5,436.9"/><polygon fill="#afaf89" stroke="#afaf89" stroke-width="0.5" points="184.7,439.6 189.4,440.7 184.7,439.2 180.1,438.0"/><polygon fill="#343429" stroke="#343429" stroke-width="0.5" points="127.1,528.3 123.5,526.0 117.8,522.6 121.4,524.9"/><polygon fill="#303026" stroke="#303026" stroke-width="0.5" points="109.3,539.2 106.2,536.3 100.6,532.5 103.5,535.4"/><polygon fill="#313126" stroke="#313126" stroke-width="0.5" points="106.2,536.3 103.6,534.2 98.1,530.3 100.6,532.5"/><polygon fill="#303026" stroke="#303026" stroke-width="0.5" points="92.5,549.8 90.3,547.7 84.6,543.5 86.7,545.7"/><polygon fill="#303025" stroke="#303025" stroke-width="0.5" points="90.3,547.7 88.0,544.3 82.4,540.1 84.6,543.5"/><polygon fill="#303025" stroke="#303025" stroke-width="0.5" points="88.0,544.3 85.9,541.7 80.5,537.5 82.4,540.1"/><polygon fill="#303025" stroke="#303025" stroke-width="0.5" points="72.3,556.3 70.6,553.7 65.1,549.1 66.7,551.7"/><polygon fill="#323227" stroke="#323227" stroke-width="0.5" points="70.6,553.7 69.0,549.9 63.7,545.2 65.1,549.1"/><polygon fill="#313126" stroke="#313126" stroke-width="0.5" points="69.0,549.9 67.6,546.8 62.3,542.2 63.7,545.2"/><polygon fill="#323227" stroke="#323227" stroke-width="0.5" points="51.7,559.9 50.6,557.0 45.3,552.0 46.3,554.9"/><polygon fill="#38382b" stroke="#38382b" stroke-width="0.5" points="50.6,557.0 49.9,552.7 44.7,547.7 45.3,552.0"/><polygon fill="#36362a" stroke="#36362a" stroke-width="0.5" points="49.9,552.7 49.1,549.4 44.0,544.3 44.7,547.7"/><polygon fill="#38382c" stroke="#38382c" stroke-width="0.5" points="31.2,560.6 30.7,557.4 25.6,552.0 26.1,555.2"/><polygon fill="#404032" stroke="#404032" stroke-width="0.5" points="30.7,557.4 30.8,552.8 25.9,547.4 25.6,552.0"/><polygon fill="#3d3d30" stroke="#3d3d30" stroke-width="0.5" points="30.8,552.8 30.7,549.1 25.9,543.7 25.9,547.4"/><polygon fill="#404032" stroke="#404032" stroke-width="0.5" points="11.2,558.2 11.4,554.8 6.6,548.9 6.4,552.4"/><polygon fill="#494939" stroke="#494939" stroke-width="0.5" points="11.4,554.8 12.4,550.0 7.8,544.2 6.6,548.9"/><polygon fill="#464637" stroke="#464637" stroke-width="0.5" points="12.4,550.0 13.1,546.1 8.5,540.4 7.8,544.2"/><polygon fill="#4a4a3a" stroke="#4a4a3a" stroke-width="0.5" points="-7.7,552.6 -6.9,549.0 -11.3,542.9 -12.2,546.4"/><polygon fill="#535341" stroke="#535341" stroke-width="0.5" points="-6.9,549.0 -4.9,544.1 -9.1,538.0 -11.3,542.9"/><polygon fill="#50503f" stroke="#50503f" stroke-width="0.5" points="-4.9,544.1 -3.5,540.2 -7.7,534.1 -9.1,538.0"/><polygon fill="#303025" stroke="#303025" stroke-width="0.5" points="-3.5,540.2 -4.3,539.0 -8.4,532.9 -7.7,534.1"/><polygon fill="#545442" stroke="#545442" stroke-width="0.5" points="-25.1,543.8 -23.6,540.2 -27.5,533.7 -29.2,537.3"/><polygon fill="#5e5e49" stroke="#5e5e49" stroke-width="0.5" points="-23.6,540.2 -20.6,535.3 -24.4,528.9 -27.5,533.7"/><polygon fill="#5b5b47" stroke="#5b5b47" stroke-width="0.5" points="-20.6,535.3 -18.4,531.4 -22.2,525.1 -24.4,528.9"/><polygon fill="#333328" stroke="#333328" stroke-width="0.5" points="-18.4,531.4 -18.9,530.0 -22.7,523.6 -22.2,525.1"/><polygon fill="#5f5f4a" stroke="#5f5f4a" stroke-width="0.5" points="-40.4,531.8 -38.1,528.2 -41.5,521.5 -43.9,525.0"/><polygon fill="#686851" stroke="#686851" stroke-width="0.5" points="-38.1,528.2 -34.2,523.6 -37.5,517.0 -41.5,521.5"/><polygon fill="#65654f" stroke="#65654f" stroke-width="0.5" points="-34.2,523.6 -31.2,519.9 -34.5,513.3 -37.5,517.0"/><polygon fill="#39392d" stroke="#39392d" stroke-width="0.5" points="-31.2,519.9 -31.4,518.3 -34.7,511.7 -34.5,513.3"/><polygon fill="#343428" stroke="#343428" stroke-width="0.5" points="-52.4,518.4 -52.9,516.8 -55.9,509.7 -55.4,511.3"/><polygon fill="#6a6a52" stroke="#6a6a52" stroke-width="0.5" points="-52.9,516.8 -49.9,513.4 -52.8,506.4 -55.9,509.7"/><polygon fill="#737359" stroke="#737359" stroke-width="0.5" points="-49.9,513.4 -45.1,509.2 -47.9,502.3 -52.8,506.4"/><polygon fill="#707057" stroke="#707057" stroke-width="0.5" points="-45.1,509.2 -41.4,505.7 -44.2,498.9 -47.9,502.3"/><polygon fill="#424233" stroke="#424233" stroke-width="0.5" points="-41.4,505.7 -41.3,504.0 -44.0,497.2 -44.2,498.9"/><polygon fill="#3b3b2e" stroke="#3b3b2e" stroke-width="0.5" points="-61.9,500.7 -62.1,499.0 -64.5,491.8 -64.4,493.5"/><polygon fill="#74745b" stroke="#74745b" stroke-width="0.5" points="-62.1,499.0 -58.4,495.9 -60.7,488.8 -64.5,491.8"/><polygon fill="#7d7d62" stroke="#7d7d62" stroke-width="0.5" points="-58.4,495.9 -52.8,492.2 -55.1,485.3 -60.7,488.8"/><polygon fill="#7a7a5f" stroke="#7a7a5f" stroke-width="0.5" points="-52.8,492.2 -48.4,489.2 -50.7,482.3 -55.1,485.3"/><polygon fill="#4c4c3b" stroke="#4c4c3b" stroke-width="0.5" points="-48.4,489.2 -47.9,487.4 -50.2,480.6 -50.7,482.3"/><polygon fill="#353529" stroke="#353529" stroke-width="0.5" points="-47.9,487.4 -48.3,486.0 -50.6,479.1 -50.2,480.6"/><polygon fill="#35352a" stroke="#35352a" stroke-width="0.5" points="-48.3,486.0 -48.7,484.5 -50.9,477.6 -50.6,479.1"/><polygon fill="#444435" stroke="#444435" stroke-width="0.5" points="-67.6,480.6 -67.4,478.8 -69.2,471.5 -69.4,473.4"/><polygon fill="#7f7f63" stroke="#7f7f63" stroke-width="0.5" points="-67.4,478.8 -63.1,476.1 -64.9,469.0 -69.2,471.5"/><polygon fill="#88886a" stroke="#88886a" stroke-width="0.5" points="-63.1,476.1 -56.8,473.3 -58.6,466.2 -64.9,469.0"/><polygon fill="#858567" stroke="#858567" stroke-width="0.5" points="-56.8,473.3 -51.9,470.8 -53.7,463.9 -58.6,466.2"/><polygon fill="#575744" stroke="#575744" stroke-width="0.5" points="-51.9,470.8 -51.1,469.0 -52.8,462.2 -53.7,463.9"/><polygon fill="#3c3c2f" stroke="#3c3c2f" stroke-width="0.5" points="-51.1,469.0 -51.1,467.4 -52.8,460.6 -52.8,462.2"/><polygon fill="#3d3d2f" stroke="#3d3d2f" stroke-width="0.5" points="-51.1,467.4 -51.2,465.8 -52.8,458.9 -52.8,460.6"/><polygon fill="#4e4e3d" stroke="#4e4e3d" stroke-width="0.5" points="-69.0,458.7 -68.4,456.8 -69.6,449.5 -70.2,451.4"/><polygon fill="#89896b" stroke="#89896b" stroke-width="0.5" points="-68.4,456.8 -63.6,454.7 -64.8,447.6 -69.6,449.5"/><polygon fill="#929272" stroke="#929272" stroke-width="0.5" points="-63.6,454.7 -56.8,452.8 -58.0,445.8 -64.8,447.6"/><polygon fill="#8f8f6f" stroke="#8f8f6f" stroke-width="0.5" points="-56.8,452.8 -51.5,451.0 -52.7,444.2 -58.0,445.8"/><polygon fill="#62624c" stroke="#62624c" stroke-width="0.5" points="-51.5,451.0 -50.3,449.3 -51.5,442.5 -52.7,444.2"/><polygon fill="#454536" stroke="#454536" stroke-width="0.5" points="-50.3,449.3 -50.0,447.6 -51.2,440.9 -51.5,442.5"/><polygon fill="#464637" stroke="#464637" stroke-width="0.5" points="-50.0,447.6 -49.8,446.0 -50.9,439.2 -51.2,440.9"/><polygon fill="#3d3d30" stroke="#3d3d30" stroke-width="0.5" points="-65.6,437.5 -65.7,435.5 -66.4,428.4 -66.4,430.4"/><polygon fill="#595946" stroke="#595946" stroke-width="0.5" points="-65.7,435.5 -64.7,433.6 -65.3,426.6 -66.4,428.4"/><polygon fill="#949473" stroke="#949473" stroke-width="0.5" points="-64.7,433.6 -59.6,432.3 -60.2,425.4 -65.3,426.6"/><polygon fill="#9c9c7a" stroke="#9c9c7a" stroke-width="0.5" points="-59.6,432.3 -52.5,431.4 -53.2,424.7 -60.2,425.4"/><polygon fill="#999977" stroke="#999977" stroke-width="0.5" points="-52.5,431.4 -46.9,430.5 -47.7,423.9 -53.2,424.7"/><polygon fill="#6d6d55" stroke="#6d6d55" stroke-width="0.5" points="-46.9,430.5 -45.4,429.0 -46.1,422.4 -47.7,423.9"/><polygon fill="#50503e" stroke="#50503e" stroke-width="0.5" points="-45.4,429.0 -44.9,427.3 -45.5,420.7 -46.1,422.4"/><polygon fill="#51513f" stroke="#51513f" stroke-width="0.5" points="-44.9,427.3 -44.2,425.6 -44.9,419.0 -45.5,420.7"/><polygon fill="#474737" stroke="#474737" stroke-width="0.5" points="-58.0,414.1 -57.7,412.0 -57.8,405.2 -58.2,407.3"/><polygon fill="#65654f" stroke="#65654f" stroke-width="0.5" points="-57.7,412.0 -56.3,410.3 -56.4,403.5 -57.8,405.2"/><polygon fill="#9e9e7b" stroke="#9e9e7b" stroke-width="0.5" points="-56.3,410.3 -51.0,409.8 -51.1,403.1 -56.4,403.5"/><polygon fill="#a6a681" stroke="#a6a681" stroke-width="0.5" points="-51.0,409.8 -43.9,410.1 -44.2,403.6 -51.1,403.1"/><polygon fill="#a3a37f" stroke="#a3a37f" stroke-width="0.5" points="-43.9,410.1 -38.3,410.1 -38.6,403.7 -44.2,403.6"/><polygon fill="#78785e" stroke="#78785e" stroke-width="0.5" points="-38.3,410.1 -36.5,408.8 -36.8,402.4 -38.6,403.7"/><polygon fill="#5b5b47" stroke="#5b5b47" stroke-width="0.5" points="-36.5,408.8 -35.6,407.1 -35.8,400.8 -36.8,402.4"/><polygon fill="#5c5c48" stroke="#5c5c48" stroke-width="0.5" points="-35.6,407.1 -34.6,405.5 -34.8,399.2 -35.8,400.8"/><polygon fill="#414133" stroke="#414133" stroke-width="0.5" points="-34.6,405.5 -34.5,403.4 -34.7,397.2 -34.8,399.2"/><polygon fill="#51513f" stroke="#51513f" stroke-width="0.5" points="-45.7,391.3 -44.9,389.2 -44.6,382.8 -45.4,384.8"/><polygon fill="#707058" stroke="#707058" stroke-width="0.5" points="-44.9,389.2 -43.2,387.6 -42.9,381.2 -44.6,382.8"/><polygon fill="#a8a883" stroke="#a8a883" stroke-width="0.5" points="-43.2,387.6 -38.0,388.0 -37.7,381.8 -42.9,381.2"/><polygon fill="#afaf88" stroke="#afaf88" stroke-width="0.5" points="-38.0,388.0 -31.2,389.6 -31.0,383.5 -37.7,381.8"/><polygon fill="#adad87" stroke="#adad87" stroke-width="0.5" points="-31.2,389.6 -25.7,390.6 -25.6,384.6 -31.0,383.5"/><polygon fill="#838366" stroke="#838366" stroke-width="0.5" points="-25.7,390.6 -23.7,389.5 -23.6,383.6 -25.6,384.6"/><polygon fill="#666650" stroke="#666650" stroke-width="0.5" points="-23.7,389.5 -22.5,388.0 -22.4,382.1 -23.6,383.6"/><polygon fill="#676750" stroke="#676750" stroke-width="0.5" points="-22.5,388.0 -21.2,386.4 -21.1,380.6 -22.4,382.1"/><polygon fill="#4b4b3a" stroke="#4b4b3a" stroke-width="0.5" points="-21.2,386.4 -20.7,384.4 -20.5,378.6 -21.1,380.6"/><polygon fill="#5d5d48" stroke="#5d5d48" stroke-width="0.5" points="-29.1,370.0 -27.9,368.0 -27.2,362.0 -28.4,364.0"/><polygon fill="#7c7c60" stroke="#7c7c60" stroke-width="0.5" points="-27.9,368.0 -25.9,366.6 -25.2,360.8 -27.2,362.0"/><polygon fill="#b1b18a" stroke="#b1b18a" stroke-width="0.5" points="-25.9,366.6 -20.9,368.0 -20.3,362.2 -25.2,360.8"/><polygon fill="#b7b78e" stroke="#b7b78e" stroke-width="0.5" points="-20.9,368.0 -14.6,370.8 -14.2,365.2 -20.3,362.2"/><polygon fill="#b5b58d" stroke="#b5b58d" stroke-width="0.5" points="-14.6,370.8 -9.6,372.7 -9.2,367.2 -14.2,365.2"/><polygon fill="#8f8f6f" stroke="#8f8f6f" stroke-width="0.5" points="-9.6,372.7 -7.4,372.0 -7.1,366.6 -9.2,367.2"/><polygon fill="#727259" stroke="#727259" stroke-width="0.5" points="-7.4,372.0 -5.9,370.7 -5.6,365.2 -7.1,366.6"/><polygon fill="#737359" stroke="#737359" stroke-width="0.5" points="-5.9,370.7 -4.4,369.3 -4.0,364.0 -5.6,365.2"/><polygon fill="#565643" stroke="#565643" stroke-width="0.5" points="-4.4,369.3 -3.5,367.3 -3.1,362.0 -4.0,364.0"/><polygon fill="#686851" stroke="#686851" stroke-width="0.5" points="-8.6,351.1 -7.1,349.3 -6.2,344.0 -7.7,345.8"/><polygon fill="#878769" stroke="#878769" stroke-width="0.5" points="-7.1,349.3 -4.9,348.3 -4.0,343.1 -6.2,344.0"/><polygon fill="#b8b890" stroke="#b8b890" stroke-width="0.5" points="-4.9,348.3 -0.4,350.6 0.4,345.4 -4.0,343.1"/><polygon fill="#bdbd93" stroke="#bdbd93" stroke-width="0.5" points="-0.4,350.6 5.0,354.5 5.7,349.5 0.4,345.4"/><polygon fill="#bbbb92" stroke="#bbbb92" stroke-width="0.5" points="5.0,354.5 9.5,357.4 10.0,352.5 5.7,349.5"/><polygon fill="#999978" stroke="#999978" stroke-width="0.5" points="9.5,357.4 11.7,357.1 12.2,352.1 10.0,352.5"/><polygon fill="#7d7d61" stroke="#7d7d61" stroke-width="0.5" points="11.7,357.1 13.4,355.9 13.9,351.1 12.2,352.1"/><polygon fill="#7c7c61" stroke="#7c7c61" stroke-width="0.5" points="12.9,360.9 14.7,359.8 15.1,354.9 13.4,355.9"/><polygon fill="#60604a" stroke="#60604a" stroke-width="0.5" points="14.7,359.8 15.9,357.9 16.4,353.0 15.1,354.9"/><polygon fill="#727259" stroke="#727259" stroke-width="0.5" points="13.7,340.5 15.5,338.8 16.5,334.1 14.7,335.7"/><polygon fill="#919171" stroke="#919171" stroke-width="0.5" points="15.5,338.8 17.8,338.2 18.8,333.5 16.5,334.1"/><polygon fill="#bdbd93" stroke="#bdbd93" stroke-width="0.5" points="17.8,338.2 21.8,341.2 22.6,336.6 18.8,333.5"/><polygon fill="#bfbf95" stroke="#bfbf95" stroke-width="0.5" points="21.8,341.2 26.4,346.1 27.1,341.6 22.6,336.6"/><polygon fill="#bfbf95" stroke="#bfbf95" stroke-width="0.5" points="26.4,346.1 30.3,349.7 30.8,345.3 27.1,341.6"/><polygon fill="#a3a37f" stroke="#a3a37f" stroke-width="0.5" points="30.3,349.7 32.5,349.7 32.9,345.3 30.8,345.3"/><polygon fill="#878769" stroke="#878769" stroke-width="0.5" points="32.5,349.7 34.3,348.8 34.8,344.5 32.9,345.3"/><polygon fill="#88886a" stroke="#88886a" stroke-width="0.5" points="34.3,348.8 36.1,348.0 36.6,343.7 34.8,344.5"/><polygon fill="#6b6b53" stroke="#6b6b53" stroke-width="0.5" points="36.1,348.0 37.7,346.3 38.2,342.0 36.6,343.7"/><polygon fill="#7e7e62" stroke="#7e7e62" stroke-width="0.5" points="39.0,328.4 41.0,327.1 42.0,323.0 39.9,324.3"/><polygon fill="#9c9c7a" stroke="#9c9c7a" stroke-width="0.5" points="41.0,327.1 43.3,326.8 44.2,322.8 42.0,323.0"/><polygon fill="#bfbf95" stroke="#bfbf95" stroke-width="0.5" points="43.3,326.8 46.5,330.5 47.3,326.6 44.2,322.8"/><polygon fill="#bfbf95" stroke="#bfbf95" stroke-width="0.5" points="46.5,330.5 50.0,336.3 50.5,332.4 47.3,326.6"/><polygon fill="#bfbf95" stroke="#bfbf95" stroke-width="0.5" points="50.0,336.3 52.9,340.7 53.3,336.8 50.5,332.4"/><polygon fill="#adad86" stroke="#adad86" stroke-width="0.5" points="52.9,340.7 55.0,341.0 55.3,337.2 53.3,336.8"/><polygon fill="#929272" stroke="#929272" stroke-width="0.5" points="55.0,341.0 56.9,340.5 57.2,336.7 55.3,337.2"/><polygon fill="#939372" stroke="#939372" stroke-width="0.5" points="56.9,340.5 58.8,340.0 59.1,336.2 57.2,336.7"/><polygon fill="#76765c" stroke="#76765c" stroke-width="0.5" points="58.8,340.0 60.6,338.5 60.9,334.9 59.1,336.2"/><polygon fill="#4b4b3a" stroke="#4b4b3a" stroke-width="0.5" points="60.6,338.5 62.0,333.0 62.4,329.4 60.9,334.9"/><polygon fill="#484838" stroke="#484838" stroke-width="0.5" points="62.0,333.0 63.4,325.9 64.0,322.4 62.4,329.4"/><polygon fill="#50503e" stroke="#50503e" stroke-width="0.5" points="63.4,325.9 65.3,320.8 65.9,317.3 64.0,322.4"/><polygon fill="#89896b" stroke="#89896b" stroke-width="0.5" points="65.3,320.8 67.4,319.8 68.1,316.5 65.9,317.3"/><polygon fill="#a7a782" stroke="#a7a782" stroke-width="0.5" points="67.4,319.8 69.6,319.9 70.3,316.7 68.1,316.5"/><polygon fill="#bebe94" stroke="#bebe94" stroke-width="0.5" points="69.6,319.9 71.9,324.3 72.4,321.0 70.3,316.7"/><polygon fill="#bbbb92" stroke="#bbbb92" stroke-width="0.5" points="71.9,324.3 74.0,330.7 74.3,327.4 72.4,321.0"/><polygon fill="#bdbd93" stroke="#bdbd93" stroke-width="0.5" points="74.0,330.7 76.0,335.6 76.1,332.3 74.3,327.4"/><polygon fill="#b5b58d" stroke="#b5b58d" stroke-width="0.5" points="76.0,335.6 77.8,336.3 77.9,333.1 76.1,332.3"/><polygon fill="#9d9d7a" stroke="#9d9d7a" stroke-width="0.5" points="77.8,336.3 79.7,336.1 79.8,332.9 77.9,333.1"/><polygon fill="#9e9e7b" stroke="#9e9e7b" stroke-width="0.5" points="79.7,336.1 81.6,335.9 81.7,332.8 79.8,332.9"/><polygon fill="#818165" stroke="#818165" stroke-width="0.5" points="81.6,335.9 83.6,334.8 83.6,331.7 81.7,332.8"/><polygon fill="#555542" stroke="#555542" stroke-width="0.5" points="83.6,334.8 86.0,329.5 86.1,326.5 83.6,331.7"/><polygon fill="#535340" stroke="#535340" stroke-width="0.5" points="86.0,329.5 88.7,322.7 88.9,319.8 86.1,326.5"/><polygon fill="#5b5b47" stroke="#5b5b47" stroke-width="0.5" points="88.7,322.7 91.3,317.9 91.6,315.1 88.9,319.8"/><polygon fill="#949473" stroke="#949473" stroke-width="0.5" points="91.3,317.9 93.5,317.3 93.8,314.6 91.6,315.1"/><polygon fill="#b0b089" stroke="#b0b089" stroke-width="0.5" points="93.5,317.3 95.6,317.8 95.8,315.2 93.8,314.6"/><polygon fill="#baba91" stroke="#baba91" stroke-width="0.5" points="95.6,317.8 96.9,322.6 97.0,319.9 95.8,315.2"/><polygon fill="#b5b58d" stroke="#b5b58d" stroke-width="0.5" points="96.9,322.6 97.6,329.3 97.6,326.6 97.0,319.9"/><polygon fill="#b7b78f" stroke="#b7b78f" stroke-width="0.5" points="97.6,329.3 98.5,334.6 98.3,331.9 97.6,326.6"/><polygon fill="#bcbc92" stroke="#bcbc92" stroke-width="0.5" points="98.5,334.6 100.1,335.6 99.9,333.0 98.3,331.9"/><polygon fill="#a7a782" stroke="#a7a782" stroke-width="0.5" points="100.1,335.6 101.9,335.8 101.6,333.1 99.9,333.0"/><polygon fill="#a8a883" stroke="#a8a883" stroke-width="0.5" points="101.9,335.8 103.7,335.9 103.4,333.3 101.6,333.1"/><polygon fill="#8c8c6d" stroke="#8c8c6d" stroke-width="0.5" points="103.7,335.9 105.8,335.1 105.4,332.6 103.4,333.3"/><polygon fill="#60604b" stroke="#60604b" stroke-width="0.5" points="105.8,335.1 109.0,330.3 108.7,327.8 105.4,332.6"/><polygon fill="#5d5d48" stroke="#5d5d48" stroke-width="0.5" points="109.0,330.3 112.8,324.0 112.5,321.7 108.7,327.8"/><polygon fill="#65654f" stroke="#65654f" stroke-width="0.5" points="112.8,324.0 116.1,319.7 115.9,317.5 112.5,321.7"/><polygon fill="#9f9f7c" stroke="#9f9f7c" stroke-width="0.5" points="116.1,319.7 118.2,319.5 118.0,317.4 115.9,317.5"/><polygon fill="#b8b890" stroke="#b8b890" stroke-width="0.5" points="118.2,319.5 120.0,320.4 119.8,318.3 118.0,317.4"/><polygon fill="#bfbf95" stroke="#bfbf95" stroke-width="0.5" points="119.7,337.6 121.0,338.9 120.2,336.7 119.0,335.3"/><polygon fill="#b1b18a" stroke="#b1b18a" stroke-width="0.5" points="121.0,338.9 122.6,339.4 121.9,337.2 120.2,336.7"/><polygon fill="#b1b18a" stroke="#b1b18a" stroke-width="0.5" points="122.6,339.4 124.3,339.8 123.4,337.7 121.9,337.2"/><polygon fill="#979776" stroke="#979776" stroke-width="0.5" points="124.3,339.8 126.3,339.4 125.4,337.3 123.4,337.7"/><polygon fill="#6a6a53" stroke="#6a6a53" stroke-width="0.5" points="126.3,339.4 130.2,335.1 129.3,333.2 125.4,337.3"/><polygon fill="#676751" stroke="#676751" stroke-width="0.5" points="130.2,335.1 134.8,329.5 134.0,327.7 129.3,333.2"/><polygon fill="#707057" stroke="#707057" stroke-width="0.5" points="134.8,329.5 138.7,325.9 137.9,324.2 134.0,327.7"/><polygon fill="#aaaa84" stroke="#aaaa84" stroke-width="0.5" points="138.7,325.9 140.7,326.1 139.9,324.5 137.9,324.2"/><polygon fill="#bebe94" stroke="#bebe94" stroke-width="0.5" points="140.7,326.1 142.2,327.3 141.3,325.7 139.9,324.5"/><polygon fill="#b9b990" stroke="#b9b990" stroke-width="0.5" points="139.7,345.9 141.1,346.6 139.8,344.8 138.4,344.0"/><polygon fill="#b9b990" stroke="#b9b990" stroke-width="0.5" points="141.1,346.6 142.5,347.4 141.2,345.6 139.8,344.8"/><polygon fill="#a2a27e" stroke="#a2a27e" stroke-width="0.5" points="142.5,347.4 144.5,347.3 143.1,345.6 141.2,345.6"/><polygon fill="#75755b" stroke="#75755b" stroke-width="0.5" points="144.5,347.3 148.8,343.7 147.4,342.1 143.1,345.6"/><polygon fill="#727259" stroke="#727259" stroke-width="0.5" points="148.8,343.7 154.1,339.0 152.7,337.5 147.4,342.1"/><polygon fill="#7b7b60" stroke="#7b7b60" stroke-width="0.5" points="154.1,339.0 158.3,336.0 156.9,334.7 152.7,337.5"/><polygon fill="#b3b38b" stroke="#b3b38b" stroke-width="0.5" points="158.3,336.0 160.1,336.6 158.7,335.3 156.9,334.7"/><polygon fill="#acac86" stroke="#acac86" stroke-width="0.5" points="158.0,358.0 159.8,358.3 157.8,356.8 156.1,356.5"/><polygon fill="#7f7f63" stroke="#7f7f63" stroke-width="0.5" points="159.8,358.3 164.4,355.5 162.4,354.1 157.8,356.8"/><polygon fill="#7c7c61" stroke="#7c7c61" stroke-width="0.5" points="164.4,355.5 170.1,351.7 168.1,350.5 162.4,354.1"/><polygon fill="#858568" stroke="#858568" stroke-width="0.5" points="170.1,351.7 174.5,349.5 172.4,348.4 168.1,350.5"/><polygon fill="#b4b48d" stroke="#b4b48d" stroke-width="0.5" points="170.3,371.2 171.8,371.8 169.3,370.5 167.7,369.9"/><polygon fill="#8a8a6b" stroke="#8a8a6b" stroke-width="0.5" points="171.8,371.8 176.6,369.8 174.0,368.6 169.3,370.5"/><polygon fill="#878769" stroke="#878769" stroke-width="0.5" points="176.6,369.8 182.5,367.0 179.8,366.0 174.0,368.6"/><polygon fill="#909070" stroke="#909070" stroke-width="0.5" points="182.5,367.0 186.9,365.6 184.1,364.7 179.8,366.0"/><polygon fill="#949473" stroke="#949473" stroke-width="0.5" points="180.5,387.4 185.1,386.2 182.0,385.0 177.3,386.1"/><polygon fill="#919171" stroke="#919171" stroke-width="0.5" points="185.1,386.2 191.0,384.4 187.8,383.4 182.0,385.0"/><polygon fill="#9a9a78" stroke="#9a9a78" stroke-width="0.5" points="191.0,384.4 195.2,383.7 191.9,382.9 187.8,383.4"/><polygon fill="#9e9e7b" stroke="#9e9e7b" stroke-width="0.5" points="185.6,404.3 190.1,403.9 186.4,402.7 181.9,403.0"/><polygon fill="#9b9b79" stroke="#9b9b79" stroke-width="0.5" points="190.1,403.9 195.7,403.1 191.9,402.1 186.4,402.7"/><polygon fill="#a4a480" stroke="#a4a480" stroke-width="0.5" points="195.7,403.1 199.7,403.2 195.8,402.2 191.9,402.1"/><polygon fill="#a8a883" stroke="#a8a883" stroke-width="0.5" points="187.2,422.1 191.4,422.4 187.2,421.1 183.1,420.6"/><polygon fill="#a5a581" stroke="#a5a581" stroke-width="0.5" points="191.4,422.4 196.7,422.5 192.4,421.3 187.2,421.1"/><polygon fill="#aeae87" stroke="#aeae87" stroke-width="0.5" points="196.7,422.5 200.3,423.3 195.9,422.1 192.4,421.3"/><polygon fill="#b1b18a" stroke="#b1b18a" stroke-width="0.5" points="185.6,440.1 189.3,441.1 184.7,439.6 181.1,438.5"/><polygon fill="#aeae88" stroke="#aeae88" stroke-width="0.5" points="189.3,441.1 194.2,442.1 189.4,440.7 184.7,439.6"/><polygon fill="#353529" stroke="#353529" stroke-width="0.5" points="132.9,531.6 129.1,529.4 123.5,526.0 127.1,528.3"/><polygon fill="#313126" stroke="#313126" stroke-width="0.5" points="115.0,542.9 111.9,540.1 106.2,536.3 109.3,539.2"/><polygon fill="#323227" stroke="#323227" stroke-width="0.5" points="111.9,540.1 109.2,538.0 103.6,534.2 106.2,536.3"/><polygon fill="#313126" stroke="#313126" stroke-width="0.5" points="98.3,553.9 96.0,551.9 90.3,547.7 92.5,549.8"/><polygon fill="#303025" stroke="#303025" stroke-width="0.5" points="96.0,551.9 93.5,548.5 88.0,544.3 90.3,547.7"/><polygon fill="#303025" stroke="#303025" stroke-width="0.5" points="93.5,548.5 91.4,545.9 85.9,541.7 88.0,544.3"/><polygon fill="#303025" stroke="#303025" stroke-width="0.5" points="77.9,560.8 76.2,558.3 70.6,553.7 72.3,556.3"/><polygon fill="#323227" stroke="#323227" stroke-width="0.5" points="76.2,558.3 74.5,554.4 69.0,549.9 70.6,553.7"/><polygon fill="#313126" stroke="#313126" stroke-width="0.5" points="74.5,554.4 72.9,551.4 67.6,546.8 69.0,549.9"/><polygon fill="#323227" stroke="#323227" stroke-width="0.5" points="57.2,564.9 56.0,562.0 50.6,557.0 51.7,559.9"/><polygon fill="#37372b" stroke="#37372b" stroke-width="0.5" points="56.0,562.0 55.1,557.7 49.9,552.7 50.6,557.0"/><polygon fill="#353529" stroke="#353529" stroke-width="0.5" points="55.1,557.7 54.2,554.3 49.1,549.4 49.9,552.7"/><polygon fill="#37372b" stroke="#37372b" stroke-width="0.5" points="36.4,566.0 35.8,562.8 30.7,557.4 31.2,560.6"/><polygon fill="#3f3f31" stroke="#3f3f31" stroke-width="0.5" points="35.8,562.8 35.9,558.2 30.8,552.8 30.7,557.4"/><polygon fill="#3c3c2f" stroke="#3c3c2f" stroke-width="0.5" points="35.9,558.2 35.6,554.5 30.7,549.1 30.8,552.8"/><polygon fill="#3f3f31" stroke="#3f3f31" stroke-width="0.5" points="16.1,563.9 16.2,560.5 11.4,554.8 11.2,558.2"/><polygon fill="#484838" stroke="#484838" stroke-width="0.5" points="16.2,560.5 17.1,555.7 12.4,550.0 11.4,554.8"/><polygon fill="#454536" stroke="#454536" stroke-width="0.5" points="17.1,555.7 17.7,551.8 13.1,546.1 12.4,550.0"/><polygon fill="#494939" stroke="#494939" stroke-width="0.5" points="-3.2,558.7 -2.4,555.1 -6.9,549.0 -7.7,552.6"/><polygon fill="#525240" stroke="#525240" stroke-width="0.5" points="-2.4,555.1 -0.5,550.2 -4.9,544.1 -6.9,549.0"/><polygon fill="#4f4f3d" stroke="#4f4f3d" stroke-width="0.5" points="-0.5,550.2 0.8,546.2 -3.5,540.2 -4.9,544.1"/><polygon fill="#303025" stroke="#303025" stroke-width="0.5" points="0.8,546.2 -0.1,545.0 -4.3,539.0 -3.5,540.2"/><polygon fill="#535341" stroke="#535341" stroke-width="0.5" points="-21.0,550.3 -19.5,546.6 -23.6,540.2 -25.1,543.8"/><polygon fill="#5c5c48" stroke="#5c5c48" stroke-width="0.5" points="-19.5,546.6 -16.7,541.7 -20.6,535.3 -23.6,540.2"/><polygon fill="#595946" stroke="#595946" stroke-width="0.5" points="-16.7,541.7 -14.6,537.8 -18.4,531.4 -20.6,535.3"/><polygon fill="#323227" stroke="#323227" stroke-width="0.5" points="-14.6,537.8 -15.1,536.3 -18.9,530.0 -18.4,531.4"/><polygon fill="#5e5e49" stroke="#5e5e49" stroke-width="0.5" points="-36.7,538.6 -34.5,535.0 -38.1,528.2 -40.4,531.8"/><polygon fill="#676750" stroke="#676750" stroke-width="0.5" points="-34.5,535.0 -30.7,530.3 -34.2,523.6 -38.1,528.2"/><polygon fill="#64644e" stroke="#64644e" stroke-width="0.5" points="-30.7,530.3 -27.8,526.4 -31.2,519.9 -34.2,523.6"/><polygon fill="#38382c" stroke="#38382c" stroke-width="0.5" points="-27.8,526.4 -28.1,524.9 -31.4,518.3 -31.2,519.9"/><polygon fill="#333328" stroke="#333328" stroke-width="0.5" points="-49.2,525.4 -49.8,523.8 -52.9,516.8 -52.4,518.4"/><polygon fill="#686851" stroke="#686851" stroke-width="0.5" points="-49.8,523.8 -46.8,520.3 -49.9,513.4 -52.9,516.8"/><polygon fill="#717158" stroke="#717158" stroke-width="0.5" points="-46.8,520.3 -42.1,516.0 -45.1,509.2 -49.9,513.4"/><polygon fill="#6e6e56" stroke="#6e6e56" stroke-width="0.5" points="-42.1,516.0 -38.5,512.5 -41.4,505.7 -45.1,509.2"/><polygon fill="#414132" stroke="#414132" stroke-width="0.5" points="-38.5,512.5 -38.4,510.8 -41.3,504.0 -41.4,505.7"/><polygon fill="#3a3a2d" stroke="#3a3a2d" stroke-width="0.5" points="-59.3,507.9 -59.5,506.2 -62.1,499.0 -61.9,500.7"/><polygon fill="#737359" stroke="#737359" stroke-width="0.5" points="-59.5,506.2 -55.9,503.0 -58.4,495.9 -62.1,499.0"/><polygon fill="#7c7c60" stroke="#7c7c60" stroke-width="0.5" points="-55.9,503.0 -50.3,499.2 -52.8,492.2 -58.4,495.9"/><polygon fill="#79795e" stroke="#79795e" stroke-width="0.5" points="-50.3,499.2 -46.0,496.1 -48.4,489.2 -52.8,492.2"/><polygon fill="#4b4b3a" stroke="#4b4b3a" stroke-width="0.5" points="-46.0,496.1 -45.6,494.3 -47.9,487.4 -48.4,489.2"/><polygon fill="#343429" stroke="#343429" stroke-width="0.5" points="-45.6,494.3 -46.1,492.8 -48.3,486.0 -47.9,487.4"/><polygon fill="#353529" stroke="#353529" stroke-width="0.5" points="-46.1,492.8 -46.5,491.4 -48.7,484.5 -48.3,486.0"/><polygon fill="#434334" stroke="#434334" stroke-width="0.5" points="-65.6,487.9 -65.5,486.0 -67.4,478.8 -67.6,480.6"/><polygon fill="#7d7d62" stroke="#7d7d62" stroke-width="0.5" points="-65.5,486.0 -61.2,483.3 -63.1,476.1 -67.4,478.8"/><polygon fill="#868669" stroke="#868669" stroke-width="0.5" points="-61.2,483.3 -54.9,480.3 -56.8,473.3 -63.1,476.1"/><polygon fill="#838366" stroke="#838366" stroke-width="0.5" points="-54.9,480.3 -50.1,477.7 -51.9,470.8 -56.8,473.3"/><polygon fill="#555543" stroke="#555543" stroke-width="0.5" points="-50.1,477.7 -49.3,475.9 -51.1,469.0 -51.9,470.8"/><polygon fill="#3b3b2e" stroke="#3b3b2e" stroke-width="0.5" points="-49.3,475.9 -49.4,474.3 -51.1,467.4 -51.1,469.0"/><polygon fill="#3c3c2f" stroke="#3c3c2f" stroke-width="0.5" points="-49.4,474.3 -49.5,472.7 -51.2,465.8 -51.1,467.4"/><polygon fill="#4d4d3c" stroke="#4d4d3c" stroke-width="0.5" points="-67.6,465.9 -67.1,464.0 -68.4,456.8 -69.0,458.7"/><polygon fill="#88886a" stroke="#88886a" stroke-width="0.5" points="-67.1,464.0 -62.3,461.9 -63.6,454.7 -68.4,456.8"/><polygon fill="#909071" stroke="#909071" stroke-width="0.5" points="-62.3,461.9 -55.5,459.8 -56.8,452.8 -63.6,454.7"/><polygon fill="#8e8e6e" stroke="#8e8e6e" stroke-width="0.5" points="-55.5,459.8 -50.2,457.9 -51.5,451.0 -56.8,452.8"/><polygon fill="#61614b" stroke="#61614b" stroke-width="0.5" points="-50.2,457.9 -49.0,456.2 -50.3,449.3 -51.5,451.0"/><polygon fill="#444435" stroke="#444435" stroke-width="0.5" points="-49.0,456.2 -48.8,454.5 -50.0,447.6 -50.3,449.3"/><polygon fill="#454536" stroke="#454536" stroke-width="0.5" points="-48.8,454.5 -48.6,452.8 -49.8,446.0 -50.0,447.6"/><polygon fill="#3c3c2f" stroke="#3c3c2f" stroke-width="0.5" points="-64.9,444.7 -65.0,442.7 -65.7,435.5 -65.6,437.5"/><polygon fill="#585844" stroke="#585844" stroke-width="0.5" points="-65.0,442.7 -64.0,440.7 -64.7,433.6 -65.7,435.5"/><polygon fill="#929272" stroke="#929272" stroke-width="0.5" points="-64.0,440.7 -58.9,439.3 -59.6,432.3 -64.7,433.6"/><polygon fill="#9b9b78" stroke="#9b9b78" stroke-width="0.5" points="-58.9,439.3 -51.8,438.3 -52.5,431.4 -59.6,432.3"/><polygon fill="#989876" stroke="#989876" stroke-width="0.5" points="-51.8,438.3 -46.2,437.2 -46.9,430.5 -52.5,431.4"/><polygon fill="#6c6c54" stroke="#6c6c54" stroke-width="0.5" points="-46.2,437.2 -44.7,435.6 -45.4,429.0 -46.9,430.5"/><polygon fill="#4f4f3d" stroke="#4f4f3d" stroke-width="0.5" points="-44.7,435.6 -44.1,433.9 -44.9,427.3 -45.4,429.0"/><polygon fill="#4f4f3e" stroke="#4f4f3e" stroke-width="0.5" points="-44.1,433.9 -43.5,432.2 -44.2,425.6 -44.9,427.3"/><polygon fill="#454536" stroke="#454536" stroke-width="0.5" points="-57.8,421.0 -57.5,418.9 -57.7,412.0 -58.0,414.1"/><polygon fill="#63634d" stroke="#63634d" stroke-width="0.5" points="-57.5,418.9 -56.2,417.1 -56.3,410.3 -57.7,412.0"/><polygon fill="#9d9d7a" stroke="#9d9d7a" stroke-width="0.5" points="-56.2,417.1 -50.8,416.5 -51.0,409.8 -56.3,410.3"/><polygon fill="#a5a580" stroke="#a5a580" stroke-width="0.5" points="-50.8,416.5 -43.7,416.7 -43.9,410.1 -51.0,409.8"/><polygon fill="#a2a27e" stroke="#a2a27e" stroke-width="0.5" points="-43.7,416.7 -38.0,416.5 -38.3,410.1 -43.9,410.1"/><polygon fill="#77775d" stroke="#77775d" stroke-width="0.5" points="-38.0,416.5 -36.2,415.2 -36.5,408.8 -38.3,410.1"/><polygon fill="#5a5a46" stroke="#5a5a46" stroke-width="0.5" points="-36.2,415.2 -35.3,413.5 -35.6,407.1 -36.5,408.8"/><polygon fill="#5a5a46" stroke="#5a5a46" stroke-width="0.5" points="-35.3,413.5 -34.4,411.8 -34.6,405.5 -35.6,407.1"/><polygon fill="#404032" stroke="#404032" stroke-width="0.5" points="-34.4,411.8 -34.3,409.8 -34.5,403.4 -34.6,405.5"/><polygon fill="#50503e" stroke="#50503e" stroke-width="0.5" points="-46.0,397.8 -45.3,395.7 -44.9,389.2 -45.7,391.3"/><polygon fill="#6f6f56" stroke="#6f6f56" stroke-width="0.5" points="-45.3,395.7 -43.6,394.1 -43.2,387.6 -44.9,389.2"/><polygon fill="#a7a782" stroke="#a7a782" stroke-width="0.5" points="-43.6,394.1 -38.3,394.4 -38.0,388.0 -43.2,387.6"/><polygon fill="#aeae87" stroke="#aeae87" stroke-width="0.5" points="-38.3,394.4 -31.3,395.8 -31.2,389.6 -38.0,388.0"/><polygon fill="#acac86" stroke="#acac86" stroke-width="0.5" points="-31.3,395.8 -25.8,396.6 -25.7,390.6 -31.2,389.6"/><polygon fill="#828265" stroke="#828265" stroke-width="0.5" points="-25.8,396.6 -23.8,395.5 -23.7,389.5 -25.7,390.6"/><polygon fill="#65654f" stroke="#65654f" stroke-width="0.5" points="-23.8,395.5 -22.6,393.9 -22.5,388.0 -23.7,389.5"/><polygon fill="#66664f" stroke="#66664f" stroke-width="0.5" points="-22.6,393.9 -21.3,392.4 -21.2,386.4 -22.5,388.0"/><polygon fill="#4a4a39" stroke="#4a4a39" stroke-width="0.5" points="-21.3,392.4 -20.8,390.3 -20.7,384.4 -21.2,386.4"/><polygon fill="#5b5b47" stroke="#5b5b47" stroke-width="0.5" points="-29.7,376.0 -28.6,374.0 -27.9,368.0 -29.1,370.0"/><polygon fill="#7a7a5f" stroke="#7a7a5f" stroke-width="0.5" points="-28.6,374.0 -26.6,372.6 -25.9,366.6 -27.9,368.0"/><polygon fill="#b0b089" stroke="#b0b089" stroke-width="0.5" points="-26.6,372.6 -21.5,373.8 -20.9,368.0 -25.9,366.6"/><polygon fill="#b6b68e" stroke="#b6b68e" stroke-width="0.5" points="-21.5,373.8 -15.1,376.5 -14.6,370.8 -20.9,368.0"/><polygon fill="#b4b48c" stroke="#b4b48c" stroke-width="0.5" points="-15.1,376.5 -9.9,378.3 -9.6,372.7 -14.6,370.8"/><polygon fill="#8d8d6e" stroke="#8d8d6e" stroke-width="0.5" points="-9.9,378.3 -7.7,377.5 -7.4,372.0 -9.6,372.7"/><polygon fill="#707057" stroke="#707057" stroke-width="0.5" points="-7.7,377.5 -6.3,376.2 -5.9,370.7 -7.4,372.0"/><polygon fill="#717158" stroke="#717158" stroke-width="0.5" points="-6.3,376.2 -4.8,374.8 -4.4,369.3 -5.9,370.7"/><polygon fill="#545442" stroke="#545442" stroke-width="0.5" points="-4.8,374.8 -3.9,372.7 -3.5,367.3 -4.4,369.3"/><polygon fill="#676750" stroke="#676750" stroke-width="0.5" points="-9.6,356.6 -8.0,354.7 -7.1,349.3 -8.6,351.1"/><polygon fill="#868668" stroke="#868668" stroke-width="0.5" points="-8.0,354.7 -5.9,353.7 -4.9,348.3 -7.1,349.3"/><polygon fill="#b8b88f" stroke="#b8b88f" stroke-width="0.5" points="-5.9,353.7 -1.2,355.8 -0.4,350.6 -4.9,348.3"/><polygon fill="#bcbc92" stroke="#bcbc92" stroke-width="0.5" points="-1.2,355.8 4.4,359.7 5.0,354.5 -0.4,350.6"/><polygon fill="#bbbb91" stroke="#bbbb91" stroke-width="0.5" points="4.4,359.7 9.0,362.5 9.5,357.4 5.0,354.5"/><polygon fill="#989876" stroke="#989876" stroke-width="0.5" points="9.0,362.5 11.3,362.1 11.7,357.1 9.5,357.4"/><polygon fill="#7b7b60" stroke="#7b7b60" stroke-width="0.5" points="11.3,362.1 12.9,360.9 13.4,355.9 11.7,357.1"/><polygon fill="#7b7b60" stroke="#7b7b60" stroke-width="0.5" points="12.5,366.0 14.2,364.8 14.7,359.8 12.9,360.9"/><polygon fill="#5e5e49" stroke="#5e5e49" stroke-width="0.5" points="14.2,364.8 15.4,362.8 15.9,357.9 14.7,359.8"/><polygon fill="#717158" stroke="#717158" stroke-width="0.5" points="12.7,345.4 14.5,343.7 15.5,338.8 13.7,340.5"/><polygon fill="#8f8f70" stroke="#8f8f70" stroke-width="0.5" points="14.5,343.7 16.8,342.9 17.8,338.2 15.5,338.8"/><polygon fill="#bcbc93" stroke="#bcbc93" stroke-width="0.5" points="16.8,342.9 20.9,345.9 21.8,341.2 17.8,338.2"/><polygon fill="#bfbf95" stroke="#bfbf95" stroke-width="0.5" points="20.9,345.9 25.7,350.7 26.4,346.1 21.8,341.2"/><polygon fill="#bebe94" stroke="#bebe94" stroke-width="0.5" points="25.7,350.7 29.7,354.3 30.3,349.7 26.4,346.1"/><polygon fill="#a1a17e" stroke="#a1a17e" stroke-width="0.5" points="29.7,354.3 31.9,354.2 32.5,349.7 30.3,349.7"/><polygon fill="#858568" stroke="#858568" stroke-width="0.5" points="31.9,354.2 33.8,353.3 34.3,348.8 32.5,349.7"/><polygon fill="#868669" stroke="#868669" stroke-width="0.5" points="33.8,353.3 35.6,352.4 36.1,348.0 34.3,348.8"/><polygon fill="#696952" stroke="#696952" stroke-width="0.5" points="35.6,352.4 37.2,350.7 37.7,346.3 36.1,348.0"/><polygon fill="#7c7c61" stroke="#7c7c61" stroke-width="0.5" points="38.0,332.6 40.0,331.2 41.0,327.1 39.0,328.4"/><polygon fill="#9b9b79" stroke="#9b9b79" stroke-width="0.5" points="40.0,331.2 42.4,330.9 43.3,326.8 41.0,327.1"/><polygon fill="#bfbf95" stroke="#bfbf95" stroke-width="0.5" points="42.4,330.9 45.7,334.6 46.5,330.5 43.3,326.8"/><polygon fill="#bfbf95" stroke="#bfbf95" stroke-width="0.5" points="45.7,334.6 49.3,340.3 50.0,336.3 46.5,330.5"/><polygon fill="#bfbf95" stroke="#bfbf95" stroke-width="0.5" points="49.3,340.3 52.4,344.6 52.9,340.7 50.0,336.3"/><polygon fill="#abab85" stroke="#abab85" stroke-width="0.5" points="52.4,344.6 54.6,344.9 55.0,341.0 52.9,340.7"/><polygon fill="#909070" stroke="#909070" stroke-width="0.5" points="54.6,344.9 56.5,344.3 56.9,340.5 55.0,341.0"/><polygon fill="#919171" stroke="#919171" stroke-width="0.5" points="56.5,344.3 58.4,343.8 58.8,340.0 56.9,340.5"/><polygon fill="#74745b" stroke="#74745b" stroke-width="0.5" points="58.4,343.8 60.2,342.3 60.6,338.5 58.8,340.0"/><polygon fill="#4a4a39" stroke="#4a4a39" stroke-width="0.5" points="60.2,342.3 61.5,336.6 62.0,333.0 60.6,338.5"/><polygon fill="#474737" stroke="#474737" stroke-width="0.5" points="61.5,336.6 62.8,329.5 63.4,325.9 62.0,333.0"/><polygon fill="#4f4f3d" stroke="#4f4f3d" stroke-width="0.5" points="62.8,329.5 64.5,324.3 65.3,320.8 63.4,325.9"/><polygon fill="#878769" stroke="#878769" stroke-width="0.5" points="64.5,324.3 66.7,323.2 67.4,319.8 65.3,320.8"/><polygon fill="#a5a581" stroke="#a5a581" stroke-width="0.5" points="66.7,323.2 68.9,323.3 69.6,319.9 67.4,319.8"/><polygon fill="#bfbf95" stroke="#bfbf95" stroke-width="0.5" points="68.9,323.3 71.3,327.7 71.9,324.3 69.6,319.9"/><polygon fill="#bcbc93" stroke="#bcbc93" stroke-width="0.5" points="71.3,327.7 73.7,334.0 74.0,330.7 71.9,324.3"/><polygon fill="#bdbd93" stroke="#bdbd93" stroke-width="0.5" points="73.7,334.0 75.8,338.9 76.0,335.6 74.0,330.7"/><polygon fill="#b4b48c" stroke="#b4b48c" stroke-width="0.5" points="75.8,338.9 77.7,339.6 77.8,336.3 76.0,335.6"/><polygon fill="#9b9b79" stroke="#9b9b79" stroke-width="0.5" points="77.7,339.6 79.6,339.4 79.7,336.1 77.8,336.3"/><polygon fill="#9c9c7a" stroke="#9c9c7a" stroke-width="0.5" points="79.6,339.4 81.5,339.1 81.6,335.9 79.7,336.1"/><polygon fill="#808063" stroke="#808063" stroke-width="0.5" points="81.5,339.1 83.5,337.9 83.6,334.8 81.6,335.9"/><polygon fill="#545441" stroke="#545441" stroke-width="0.5" points="83.5,337.9 85.8,332.5 86.0,329.5 83.6,334.8"/><polygon fill="#51513f" stroke="#51513f" stroke-width="0.5" points="85.8,332.5 88.3,325.6 88.7,322.7 86.0,329.5"/><polygon fill="#595946" stroke="#595946" stroke-width="0.5" points="88.3,325.6 90.9,320.7 91.3,317.9 88.7,322.7"/><polygon fill="#939372" stroke="#939372" stroke-width="0.5" points="90.9,320.7 93.1,320.1 93.5,317.3 91.3,317.9"/><polygon fill="#afaf89" stroke="#afaf89" stroke-width="0.5" points="93.1,320.1 95.2,320.6 95.6,317.8 93.5,317.3"/><polygon fill="#bbbb92" stroke="#bbbb92" stroke-width="0.5" points="95.2,320.6 96.7,325.3 96.9,322.6 95.6,317.8"/><polygon fill="#b6b68e" stroke="#b6b68e" stroke-width="0.5" points="96.7,325.3 97.6,332.1 97.6,329.3 96.9,322.6"/><polygon fill="#b8b88f" stroke="#b8b88f" stroke-width="0.5" points="97.6,332.1 98.7,337.4 98.5,334.6 97.6,329.3"/><polygon fill="#bbbb92" stroke="#bbbb92" stroke-width="0.5" points="98.7,337.4 100.3,338.4 100.1,335.6 98.5,334.6"/><polygon fill="#a6a681" stroke="#a6a681" stroke-width="0.5" points="100.3,338.4 102.2,338.5 101.9,335.8 100.1,335.6"/><polygon fill="#a7a782" stroke="#a7a782" stroke-width="0.5" points="102.2,338.5 104.0,338.6 103.7,335.9 101.9,335.8"/><polygon fill="#8b8b6c" stroke="#8b8b6c" stroke-width="0.5" points="104.0,338.6 106.1,337.8 105.8,335.1 103.7,335.9"/><polygon fill="#5e5e49" stroke="#5e5e49" stroke-width="0.5" points="106.1,337.8 109.2,332.8 109.0,330.3 105.8,335.1"/><polygon fill="#5c5c47" stroke="#5c5c47" stroke-width="0.5" points="109.2,332.8 112.9,326.3 112.8,324.0 109.0,330.3"/><polygon fill="#64644e" stroke="#64644e" stroke-width="0.5" points="112.9,326.3 116.2,321.9 116.1,319.7 112.8,324.0"/><polygon fill="#9e9e7b" stroke="#9e9e7b" stroke-width="0.5" points="116.2,321.9 118.4,321.7 118.2,319.5 116.1,319.7"/><polygon fill="#b7b78f" stroke="#b7b78f" stroke-width="0.5" points="118.4,321.7 120.2,322.5 120.0,320.4 118.2,319.5"/><polygon fill="#bfbf95" stroke="#bfbf95" stroke-width="0.5" points="120.3,339.9 121.7,341.2 121.0,338.9 119.7,337.6"/><polygon fill="#b0b089" stroke="#b0b089" stroke-width="0.5" points="121.7,341.2 123.3,341.6 122.6,339.4 121.0,338.9"/><polygon fill="#b0b089" stroke="#b0b089" stroke-width="0.5" points="123.3,341.6 125.0,342.0 124.3,339.8 122.6,339.4"/><polygon fill="#969675" stroke="#969675" stroke-width="0.5" points="125.0,342.0 127.1,341.6 126.3,339.4 124.3,339.8"/><polygon fill="#696952" stroke="#696952" stroke-width="0.5" points="127.1,341.6 130.9,337.1 130.2,335.1 126.3,339.4"/><polygon fill="#66664f" stroke="#66664f" stroke-width="0.5" points="130.9,337.1 135.5,331.4 134.8,329.5 130.2,335.1"/><polygon fill="#6f6f56" stroke="#6f6f56" stroke-width="0.5" points="135.5,331.4 139.3,327.6 138.7,325.9 134.8,329.5"/><polygon fill="#a8a883" stroke="#a8a883" stroke-width="0.5" points="139.3,327.6 141.4,327.8 140.7,326.1 138.7,325.9"/><polygon fill="#bdbd93" stroke="#bdbd93" stroke-width="0.5" points="141.4,327.8 142.9,329.0 142.2,327.3 140.7,326.1"/><polygon fill="#bfbf95" stroke="#bfbf95" stroke-width="0.5" points="139.9,346.2 140.9,347.7 139.7,345.9 138.7,344.3"/><polygon fill="#b8b88f" stroke="#b8b88f" stroke-width="0.5" points="140.9,347.7 142.4,348.4 141.1,346.6 139.7,345.9"/><polygon fill="#b8b890" stroke="#b8b890" stroke-width="0.5" points="142.4,348.4 143.8,349.2 142.5,347.4 141.1,346.6"/><polygon fill="#a0a07d" stroke="#a0a07d" stroke-width="0.5" points="143.8,349.2 145.8,349.1 144.5,347.3 142.5,347.4"/><polygon fill="#73735a" stroke="#73735a" stroke-width="0.5" points="145.8,349.1 150.1,345.3 148.8,343.7 144.5,347.3"/><polygon fill="#717158" stroke="#717158" stroke-width="0.5" points="150.1,345.3 155.4,340.4 154.1,339.0 148.8,343.7"/><polygon fill="#79795e" stroke="#79795e" stroke-width="0.5" points="155.4,340.4 159.6,337.3 158.3,336.0 154.1,339.0"/><polygon fill="#b2b28a" stroke="#b2b28a" stroke-width="0.5" points="159.6,337.3 161.5,337.9 160.1,336.6 158.3,336.0"/><polygon fill="#bdbd93" stroke="#bdbd93" stroke-width="0.5" points="157.4,357.6 158.6,358.6 156.8,357.0 155.6,356.0"/><polygon fill="#bdbd94" stroke="#bdbd94" stroke-width="0.5" points="158.6,358.6 159.8,359.5 158.0,358.0 156.8,357.0"/><polygon fill="#aaaa85" stroke="#aaaa85" stroke-width="0.5" points="159.8,359.5 161.7,359.8 159.8,358.3 158.0,358.0"/><polygon fill="#7e7e62" stroke="#7e7e62" stroke-width="0.5" points="161.7,359.8 166.3,356.8 164.4,355.5 159.8,358.3"/><polygon fill="#7b7b60" stroke="#7b7b60" stroke-width="0.5" points="166.3,356.8 172.0,352.9 170.1,351.7 164.4,355.5"/><polygon fill="#848467" stroke="#848467" stroke-width="0.5" points="172.0,352.9 176.5,350.5 174.5,349.5 170.1,351.7"/><polygon fill="#b3b38c" stroke="#b3b38c" stroke-width="0.5" points="172.7,372.6 174.3,373.1 171.8,371.8 170.3,371.2"/><polygon fill="#88886a" stroke="#88886a" stroke-width="0.5" points="174.3,373.1 179.1,371.0 176.6,369.8 171.8,371.8"/><polygon fill="#858568" stroke="#858568" stroke-width="0.5" points="179.1,371.0 185.0,368.1 182.5,367.0 176.6,369.8"/><polygon fill="#8e8e6f" stroke="#8e8e6f" stroke-width="0.5" points="185.0,368.1 189.5,366.5 186.9,365.6 182.5,367.0"/><polygon fill="#939372" stroke="#939372" stroke-width="0.5" points="183.5,388.6 188.2,387.3 185.1,386.2 180.5,387.4"/><polygon fill="#909070" stroke="#909070" stroke-width="0.5" points="188.2,387.3 194.2,385.4 191.0,384.4 185.1,386.2"/><polygon fill="#999977" stroke="#999977" stroke-width="0.5" points="194.2,385.4 198.5,384.6 195.2,383.7 191.0,384.4"/><polygon fill="#9d9d7a" stroke="#9d9d7a" stroke-width="0.5" points="189.1,405.6 193.7,405.0 190.1,403.9 185.6,404.3"/><polygon fill="#9a9a78" stroke="#9a9a78" stroke-width="0.5" points="193.7,405.0 199.4,404.1 195.7,403.1 190.1,403.9"/><polygon fill="#a3a37f" stroke="#a3a37f" stroke-width="0.5" points="199.4,404.1 203.5,404.1 199.7,403.2 195.7,403.1"/><polygon fill="#a7a782" stroke="#a7a782" stroke-width="0.5" points="191.2,423.4 195.5,423.7 191.4,422.4 187.2,422.1"/><polygon fill="#a4a480" stroke="#a4a480" stroke-width="0.5" points="195.5,423.7 200.9,423.7 196.7,422.5 191.4,422.4"/><polygon fill="#acac86" stroke="#acac86" stroke-width="0.5" points="200.9,423.7 204.6,424.3 200.3,423.3 196.7,422.5"/><polygon fill="#b0b089" stroke="#b0b089" stroke-width="0.5" points="190.0,441.7 193.9,442.6 189.3,441.1 185.6,440.1"/><polygon fill="#adad87" stroke="#adad87" stroke-width="0.5" points="193.9,442.6 198.8,443.5 194.2,442.1 189.3,441.1"/><polygon fill="#313126" stroke="#313126" stroke-width="0.5" points="120.8,546.5 117.6,543.8 111.9,540.1 115.0,542.9"/><polygon fill="#323227" stroke="#323227" stroke-width="0.5" points="117.6,543.8 114.8,541.8 109.2,538.0 111.9,540.1"/><polygon fill="#313126" stroke="#313126" stroke-width="0.5" points="104.1,558.0 101.7,555.9 96.0,551.9 98.3,553.9"/><polygon fill="#303025" stroke="#303025" stroke-width="0.5" points="101.7,555.9 99.1,552.6 93.5,548.5 96.0,551.9"/><polygon fill="#303025" stroke="#303025" stroke-width="0.5" points="99.1,552.6 96.9,550.1 91.4,545.9 93.5,548.5"/><polygon fill="#303025" stroke="#303025" stroke-width="0.5" points="83.6,565.3 81.8,562.8 76.2,558.3 77.9,560.8"/><polygon fill="#313126" stroke="#313126" stroke-width="0.5" points="81.8,562.8 80.0,559.0 74.5,554.4 76.2,558.3"/><polygon fill="#303026" stroke="#303026" stroke-width="0.5" points="80.0,559.0 78.3,556.0 72.9,551.4 74.5,554.4"/><polygon fill="#313126" stroke="#313126" stroke-width="0.5" points="62.7,569.8 61.4,566.9 56.0,562.0 57.2,564.9"/><polygon fill="#36362a" stroke="#36362a" stroke-width="0.5" points="61.4,566.9 60.4,562.6 55.1,557.7 56.0,562.0"/><polygon fill="#343429" stroke="#343429" stroke-width="0.5" points="60.4,562.6 59.4,559.3 54.2,554.3 55.1,557.7"/><polygon fill="#36362a" stroke="#36362a" stroke-width="0.5" points="41.7,571.3 41.0,568.1 35.8,562.8 36.4,566.0"/><polygon fill="#3e3e30" stroke="#3e3e30" stroke-width="0.5" points="41.0,568.1 40.9,563.5 35.9,558.2 35.8,562.8"/><polygon fill="#3b3b2e" stroke="#3b3b2e" stroke-width="0.5" points="40.9,563.5 40.6,559.8 35.6,554.5 35.9,558.2"/><polygon fill="#3e3e30" stroke="#3e3e30" stroke-width="0.5" points="21.1,569.7 21.1,566.2 16.2,560.5 16.1,563.9"/><polygon fill="#474737" stroke="#474737" stroke-width="0.5" points="21.1,566.2 21.9,561.4 17.1,555.7 16.2,560.5"/><polygon fill="#444435" stroke="#444435" stroke-width="0.5" points="21.9,561.4 22.3,557.5 17.7,551.8 17.1,555.7"/><polygon fill="#474738" stroke="#474738" stroke-width="0.5" points="1.4,564.8 2.1,561.2 -2.4,555.1 -3.2,558.7"/><polygon fill="#51513f" stroke="#51513f" stroke-width="0.5" points="2.1,561.2 3.9,556.3 -0.5,550.2 -2.4,555.1"/><polygon fill="#4e4e3c" stroke="#4e4e3c" stroke-width="0.5" points="3.9,556.3 5.1,552.3 0.8,546.2 -0.5,550.2"/><polygon fill="#303025" stroke="#303025" stroke-width="0.5" points="5.1,552.3 4.2,551.0 -0.1,545.0 0.8,546.2"/><polygon fill="#525240" stroke="#525240" stroke-width="0.5" points="-16.8,556.7 -15.4,553.0 -19.5,546.6 -21.0,550.3"/><polygon fill="#5b5b47" stroke="#5b5b47" stroke-width="0.5" points="-15.4,553.0 -12.7,548.1 -16.7,541.7 -19.5,546.6"/><polygon fill="#585845" stroke="#585845" stroke-width="0.5" points="-12.7,548.1 -10.6,544.1 -14.6,537.8 -16.7,541.7"/><polygon fill="#323227" stroke="#323227" stroke-width="0.5" points="-10.6,544.1 -11.2,542.7 -15.1,536.3 -14.6,537.8"/><polygon fill="#5c5c48" stroke="#5c5c48" stroke-width="0.5" points="-33.0,545.4 -30.9,541.7 -34.5,535.0 -36.7,538.6"/><polygon fill="#66664f" stroke="#66664f" stroke-width="0.5" points="-30.9,541.7 -27.1,536.9 -30.7,530.3 -34.5,535.0"/><polygon fill="#62624d" stroke="#62624d" stroke-width="0.5" points="-27.1,536.9 -24.4,533.0 -27.8,526.4 -30.7,530.3"/><polygon fill="#37372b" stroke="#37372b" stroke-width="0.5" points="-24.4,533.0 -24.6,531.4 -28.1,524.9 -27.8,526.4"/><polygon fill="#333327" stroke="#333327" stroke-width="0.5" points="-46.0,532.4 -46.6,530.8 -49.8,523.8 -49.2,525.4"/><polygon fill="#676750" stroke="#676750" stroke-width="0.5" points="-46.6,530.8 -43.7,527.3 -46.8,520.3 -49.8,523.8"/><polygon fill="#707057" stroke="#707057" stroke-width="0.5" points="-43.7,527.3 -39.1,522.9 -42.1,516.0 -46.8,520.3"/><polygon fill="#6d6d55" stroke="#6d6d55" stroke-width="0.5" points="-39.1,522.9 -35.5,519.2 -38.5,512.5 -42.1,516.0"/><polygon fill="#404031" stroke="#404031" stroke-width="0.5" points="-35.5,519.2 -35.5,517.5 -38.4,510.8 -38.5,512.5"/><polygon fill="#39392c" stroke="#39392c" stroke-width="0.5" points="-56.7,515.1 -56.9,513.4 -59.5,506.2 -59.3,507.9"/><polygon fill="#717158" stroke="#717158" stroke-width="0.5" points="-56.9,513.4 -53.4,510.1 -55.9,503.0 -59.5,506.2"/><polygon fill="#7a7a5f" stroke="#7a7a5f" stroke-width="0.5" points="-53.4,510.1 -47.8,506.2 -50.3,499.2 -55.9,503.0"/><polygon fill="#77775d" stroke="#77775d" stroke-width="0.5" points="-47.8,506.2 -43.6,503.0 -46.0,496.1 -50.3,499.2"/><polygon fill="#494939" stroke="#494939" stroke-width="0.5" points="-43.6,503.0 -43.2,501.2 -45.6,494.3 -46.0,496.1"/><polygon fill="#333328" stroke="#333328" stroke-width="0.5" points="-43.2,501.2 -43.7,499.7 -46.1,492.8 -45.6,494.3"/><polygon fill="#343428" stroke="#343428" stroke-width="0.5" points="-43.7,499.7 -44.2,498.3 -46.5,491.4 -46.1,492.8"/><polygon fill="#414133" stroke="#414133" stroke-width="0.5" points="-63.6,495.2 -63.5,493.4 -65.5,486.0 -65.6,487.9"/><polygon fill="#7c7c61" stroke="#7c7c61" stroke-width="0.5" points="-63.5,493.4 -59.3,490.5 -61.2,483.3 -65.5,486.0"/><polygon fill="#858567" stroke="#858567" stroke-width="0.5" points="-59.3,490.5 -53.0,487.4 -54.9,480.3 -61.2,483.3"/><polygon fill="#828265" stroke="#828265" stroke-width="0.5" points="-53.0,487.4 -48.1,484.7 -50.1,477.7 -54.9,480.3"/><polygon fill="#545441" stroke="#545441" stroke-width="0.5" points="-48.1,484.7 -47.4,482.9 -49.3,475.9 -50.1,477.7"/><polygon fill="#3a3a2d" stroke="#3a3a2d" stroke-width="0.5" points="-47.4,482.9 -47.6,481.3 -49.4,474.3 -49.3,475.9"/><polygon fill="#3b3b2e" stroke="#3b3b2e" stroke-width="0.5" points="-47.6,481.3 -47.7,479.6 -49.5,472.7 -49.4,474.3"/><polygon fill="#4b4b3b" stroke="#4b4b3b" stroke-width="0.5" points="-66.2,473.3 -65.7,471.3 -67.1,464.0 -67.6,465.9"/><polygon fill="#878769" stroke="#878769" stroke-width="0.5" points="-65.7,471.3 -61.0,469.1 -62.3,461.9 -67.1,464.0"/><polygon fill="#8f8f6f" stroke="#8f8f6f" stroke-width="0.5" points="-61.0,469.1 -54.1,466.8 -55.5,459.8 -62.3,461.9"/><polygon fill="#8c8c6d" stroke="#8c8c6d" stroke-width="0.5" points="-54.1,466.8 -48.8,464.8 -50.2,457.9 -55.5,459.8"/><polygon fill="#5f5f4a" stroke="#5f5f4a" stroke-width="0.5" points="-48.8,464.8 -47.7,463.0 -49.0,456.2 -50.2,457.9"/><polygon fill="#434334" stroke="#434334" stroke-width="0.5" points="-47.7,463.0 -47.5,461.3 -48.8,454.5 -49.0,456.2"/><polygon fill="#444435" stroke="#444435" stroke-width="0.5" points="-47.5,461.3 -47.3,459.6 -48.6,452.8 -48.8,454.5"/><polygon fill="#3b3b2e" stroke="#3b3b2e" stroke-width="0.5" points="-64.0,451.9 -64.2,449.9 -65.0,442.7 -64.9,444.7"/><polygon fill="#565643" stroke="#565643" stroke-width="0.5" points="-64.2,449.9 -63.3,447.9 -64.0,440.7 -65.0,442.7"/><polygon fill="#919171" stroke="#919171" stroke-width="0.5" points="-63.3,447.9 -58.1,446.4 -58.9,439.3 -64.0,440.7"/><polygon fill="#999977" stroke="#999977" stroke-width="0.5" points="-58.1,446.4 -51.0,445.2 -51.8,438.3 -58.9,439.3"/><polygon fill="#979775" stroke="#979775" stroke-width="0.5" points="-51.0,445.2 -45.3,444.0 -46.2,437.2 -51.8,438.3"/><polygon fill="#6a6a53" stroke="#6a6a53" stroke-width="0.5" points="-45.3,444.0 -43.9,442.4 -44.7,435.6 -46.2,437.2"/><polygon fill="#4d4d3c" stroke="#4d4d3c" stroke-width="0.5" points="-43.9,442.4 -43.4,440.6 -44.1,433.9 -44.7,435.6"/><polygon fill="#4e4e3d" stroke="#4e4e3d" stroke-width="0.5" points="-43.4,440.6 -42.8,438.9 -43.5,432.2 -44.1,433.9"/><polygon fill="#444435" stroke="#444435" stroke-width="0.5" points="-57.5,428.0 -57.3,425.9 -57.5,418.9 -57.8,421.0"/><polygon fill="#62624c" stroke="#62624c" stroke-width="0.5" points="-57.3,425.9 -56.0,424.0 -56.2,417.1 -57.5,418.9"/><polygon fill="#9b9b79" stroke="#9b9b79" stroke-width="0.5" points="-56.0,424.0 -50.6,423.3 -50.8,416.5 -56.2,417.1"/><polygon fill="#a3a37f" stroke="#a3a37f" stroke-width="0.5" points="-50.6,423.3 -43.4,423.3 -43.7,416.7 -50.8,416.5"/><polygon fill="#a1a17d" stroke="#a1a17d" stroke-width="0.5" points="-43.4,423.3 -37.6,423.0 -38.0,416.5 -43.7,416.7"/><polygon fill="#75755b" stroke="#75755b" stroke-width="0.5" points="-37.6,423.0 -35.8,421.6 -36.2,415.2 -38.0,416.5"/><polygon fill="#585845" stroke="#585845" stroke-width="0.5" points="-35.8,421.6 -35.0,419.9 -35.3,413.5 -36.2,415.2"/><polygon fill="#595945" stroke="#595945" stroke-width="0.5" points="-35.0,419.9 -34.1,418.2 -34.4,411.8 -35.3,413.5"/><polygon fill="#3f3f31" stroke="#3f3f31" stroke-width="0.5" points="-34.1,418.2 -34.1,416.2 -34.3,409.8 -34.4,411.8"/><polygon fill="#4e4e3d" stroke="#4e4e3d" stroke-width="0.5" points="-46.2,404.4 -45.5,402.3 -45.3,395.7 -46.0,397.8"/><polygon fill="#6d6d55" stroke="#6d6d55" stroke-width="0.5" points="-45.5,402.3 -43.9,400.6 -43.6,394.1 -45.3,395.7"/><polygon fill="#a5a581" stroke="#a5a581" stroke-width="0.5" points="-43.9,400.6 -38.5,400.8 -38.3,394.4 -43.6,394.1"/><polygon fill="#adad87" stroke="#adad87" stroke-width="0.5" points="-38.5,400.8 -31.4,402.0 -31.3,395.8 -38.3,394.4"/><polygon fill="#aaaa85" stroke="#aaaa85" stroke-width="0.5" points="-31.4,402.0 -25.8,402.8 -25.8,396.6 -31.3,395.8"/><polygon fill="#808064" stroke="#808064" stroke-width="0.5" points="-25.8,402.8 -23.8,401.6 -23.8,395.5 -25.8,396.6"/><polygon fill="#63634d" stroke="#63634d" stroke-width="0.5" points="-23.8,401.6 -22.6,400.0 -22.6,393.9 -23.8,395.5"/><polygon fill="#64644e" stroke="#64644e" stroke-width="0.5" points="-22.6,400.0 -21.4,398.4 -21.3,392.4 -22.6,393.9"/><polygon fill="#484838" stroke="#484838" stroke-width="0.5" points="-21.4,398.4 -21.0,396.3 -20.8,390.3 -21.3,392.4"/><polygon fill="#5a5a46" stroke="#5a5a46" stroke-width="0.5" points="-30.4,382.1 -29.3,380.1 -28.6,374.0 -29.7,376.0"/><polygon fill="#79795e" stroke="#79795e" stroke-width="0.5" points="-29.3,380.1 -27.3,378.6 -26.6,372.6 -28.6,374.0"/><polygon fill="#afaf88" stroke="#afaf88" stroke-width="0.5" points="-27.3,378.6 -22.1,379.8 -21.5,373.8 -26.6,372.6"/><polygon fill="#b5b58d" stroke="#b5b58d" stroke-width="0.5" points="-22.1,379.8 -15.5,382.3 -15.1,376.5 -21.5,373.8"/><polygon fill="#b3b38b" stroke="#b3b38b" stroke-width="0.5" points="-15.5,382.3 -10.2,384.0 -9.9,378.3 -15.1,376.5"/><polygon fill="#8c8c6d" stroke="#8c8c6d" stroke-width="0.5" points="-10.2,384.0 -8.1,383.2 -7.7,377.5 -9.9,378.3"/><polygon fill="#6f6f56" stroke="#6f6f56" stroke-width="0.5" points="-8.1,383.2 -6.6,381.7 -6.3,376.2 -7.7,377.5"/><polygon fill="#707057" stroke="#707057" stroke-width="0.5" points="-6.6,381.7 -5.1,380.3 -4.8,374.8 -6.3,376.2"/><polygon fill="#535341" stroke="#535341" stroke-width="0.5" points="-5.1,380.3 -4.3,378.3 -3.9,372.7 -4.8,374.8"/><polygon fill="#65654f" stroke="#65654f" stroke-width="0.5" points="-10.5,362.2 -9.0,360.2 -8.0,354.7 -9.6,356.6"/><polygon fill="#848467" stroke="#848467" stroke-width="0.5" points="-9.0,360.2 -6.8,359.1 -5.9,353.7 -8.0,354.7"/><polygon fill="#b7b78e" stroke="#b7b78e" stroke-width="0.5" points="-6.8,359.1 -2.1,361.2 -1.2,355.8 -5.9,353.7"/><polygon fill="#bbbb92" stroke="#bbbb92" stroke-width="0.5" points="-2.1,361.2 3.8,364.9 4.4,359.7 -1.2,355.8"/><polygon fill="#baba91" stroke="#baba91" stroke-width="0.5" points="3.8,364.9 8.5,367.6 9.0,362.5 4.4,359.7"/><polygon fill="#979775" stroke="#979775" stroke-width="0.5" points="8.5,367.6 10.8,367.2 11.3,362.1 9.0,362.5"/><polygon fill="#7a7a5f" stroke="#7a7a5f" stroke-width="0.5" points="10.8,367.2 12.5,366.0 12.9,360.9 11.3,362.1"/><g clip-path="url(#hc)"><defs><linearGradient id="bore" gradientUnits="userSpaceOnUse" x1="22.0" y1="486.0" x2="132.0" y2="426.0"><stop offset="0" stop-color="#2c2c22"/><stop offset="0.18" stop-color="#6a6a50"/><stop offset="0.5" stop-color="#a2a27c"/><stop offset="0.78" stop-color="#7a7a5c"/><stop offset="1" stop-color="#2a2a20"/></linearGradient></defs><rect x="21.6" y="406.5" width="108.9" height="100.9" fill="url(#bore)"/><polygon fill="#e3fde1" points="16.8,400.8 88.4,400.8 88.4,437.4 58.2,441.9 37.5,461.3 16.8,462.1"/><line x1="39.1" y1="431.0" x2="88.4" y2="423.1" stroke="#6474dc" stroke-width="1"/><line x1="52.6" y1="422.3" x2="62.2" y2="440.6" stroke="#6474dc" stroke-width="1"/><line x1="20.0" y1="461.3" x2="46.2" y2="457.8" stroke="#6474dc" stroke-width="1"/><polygon fill="#a9a981" points="37.5,461.3 58.2,441.9 74.1,466.8 47.0,474.0 34.3,471.6"/><polygon fill="#9c9c76" points="58.2,441.9 88.4,437.4 97.9,446.9 74.1,466.8"/><polygon fill="#5e5e4a" points="88.4,408.0 99.5,410.4 99.5,440.6 97.9,446.9 88.4,437.4"/><polygon fill="#9e9e7e" points="99.5,410.4 106.7,413.5 105.9,426.3 99.5,440.6"/><polygon fill="#4a4a3a" points="18.4,458.1 24.8,459.7 35.9,471.6 31.1,486.7 18.4,486.7"/></g><path fill="#e3e3a0" fill-rule="evenodd" d="M12.5,366.0 L14.2,364.8 L15.4,362.8 L14.5,357.4 L13.0,350.6 L12.7,345.4 L14.5,343.7 L16.8,342.9 L20.9,345.9 L25.7,350.7 L29.7,354.3 L31.9,354.2 L33.8,353.3 L35.6,352.4 L37.2,350.7 L37.4,345.0 L37.3,337.9 L38.0,332.6 L40.0,331.2 L42.4,330.9 L45.7,334.6 L49.3,340.3 L52.4,344.6 L54.6,344.9 L56.5,344.3 L58.4,343.8 L60.2,342.3 L61.5,336.6 L62.8,329.5 L64.5,324.3 L66.7,323.2 L68.9,323.3 L71.3,327.7 L73.7,334.0 L75.8,338.9 L77.7,339.6 L79.6,339.4 L81.5,339.1 L83.5,337.9 L85.8,332.5 L88.3,325.6 L90.9,320.7 L93.1,320.1 L95.2,320.6 L96.7,325.3 L97.6,332.1 L98.7,337.4 L100.3,338.4 L102.2,338.5 L104.0,338.6 L106.1,337.8 L109.2,332.8 L112.9,326.3 L116.2,321.9 L118.4,321.7 L120.2,322.5 L120.7,327.5 L120.3,334.5 L120.3,339.9 L121.7,341.2 L123.3,341.6 L125.0,342.0 L127.1,341.6 L130.9,337.1 L135.5,331.4 L139.3,327.6 L141.4,327.8 L142.9,329.0 L142.5,334.0 L140.9,340.8 L139.9,346.2 L140.9,347.7 L142.4,348.4 L143.8,349.2 L145.8,349.1 L150.1,345.3 L155.4,340.4 L159.6,337.3 L161.5,337.9 L162.7,339.3 L161.3,344.2 L158.6,350.7 L156.7,355.9 L157.4,357.6 L158.6,358.6 L159.8,359.5 L161.7,359.8 L166.3,356.8 L172.0,352.9 L176.5,350.5 L178.0,351.4 L178.9,353.0 L176.8,357.7 L173.2,363.6 L170.5,368.4 L170.8,370.3 L171.7,371.4 L172.7,372.6 L174.3,373.1 L179.1,371.0 L185.0,368.1 L189.5,366.5 L190.8,367.7 L191.2,369.4 L188.5,373.6 L184.1,378.9 L180.8,383.3 L180.7,385.1 L181.4,386.4 L182.1,387.8 L183.5,388.6 L188.2,387.3 L194.2,385.4 L198.5,384.6 L199.5,385.9 L199.6,387.8 L196.3,391.5 L191.4,396.0 L187.6,399.8 L187.2,401.6 L187.6,403.1 L188.0,404.5 L189.1,405.6 L193.7,405.0 L199.4,404.1 L203.5,404.1 L204.2,405.6 L204.0,407.4 L200.3,410.6 L195.0,414.3 L190.9,417.4 L190.2,419.2 L190.3,420.7 L190.4,422.2 L191.2,423.4 L195.5,423.7 L200.9,423.7 L204.6,424.3 L205.0,425.9 L204.5,427.7 L200.6,430.3 L195.1,433.1 L190.8,435.6 L189.8,437.2 L189.6,438.8 L189.4,440.3 L190.0,441.7 L193.9,442.6 L198.8,443.5 L202.1,444.7 L202.1,446.4 L201.3,448.1 L197.4,450.1 L191.8,452.0 L187.4,453.8 L186.2,455.3 L185.8,456.8 L185.3,458.3 L185.6,459.8 L189.0,461.3 L193.4,463.1 L196.2,464.8 L195.9,466.5 L194.9,468.1 L190.9,469.4 L185.4,470.5 L181.1,471.6 L179.7,472.9 L179.0,474.4 L178.3,475.8 L178.3,477.3 L181.1,479.5 L184.9,481.9 L187.1,484.1 L186.6,485.8 L185.3,487.2 L181.4,487.9 L176.2,488.2 L172.0,488.5 L170.5,489.7 L169.6,491.0 L168.7,492.4 L168.4,494.0 L170.6,496.6 L173.6,499.6 L175.3,502.2 L174.5,503.8 L173.1,505.1 L169.3,505.2 L164.5,504.6 L160.5,504.3 L158.9,505.3 L157.8,506.5 L156.8,507.8 L156.2,509.3 L157.8,512.3 L160.0,515.9 L161.1,518.8 L160.0,520.3 L158.5,521.4 L155.0,520.9 L150.6,519.6 L146.9,518.7 L145.2,519.4 L144.0,520.5 L142.8,521.6 L142.0,523.1 L142.9,526.4 L144.3,530.4 L144.8,533.6 L143.5,534.9 L141.9,535.8 L138.7,534.8 L134.8,532.7 L131.5,531.2 L129.9,531.7 L128.5,532.6 L127.1,533.6 L126.1,535.0 L126.3,538.5 L126.9,542.9 L126.8,546.2 L125.3,547.4 L123.6,548.1 L120.8,546.5 L117.6,543.8 L114.8,541.8 L113.1,542.0 L111.6,542.8 L110.2,543.5 L108.9,544.8 L108.5,548.5 L108.2,553.1 L107.4,556.5 L105.8,557.5 L104.1,558.0 L101.7,555.9 L99.1,552.6 L96.9,550.1 L95.2,550.1 L93.7,550.6 L92.2,551.2 L90.8,552.3 L89.6,556.1 L88.5,560.8 L87.1,564.2 L85.4,565.1 L83.6,565.3 L81.8,562.8 L80.0,559.0 L78.3,556.0 L76.7,555.7 L75.2,556.1 L73.6,556.4 L72.0,557.4 L70.2,561.1 L68.2,565.8 L66.2,569.2 L64.4,569.8 L62.7,569.8 L61.4,566.9 L60.4,562.6 L59.4,559.3 L58.0,558.8 L56.4,558.9 L54.8,559.0 L53.1,559.8 L50.6,563.4 L47.8,568.0 L45.2,571.2 L43.3,571.6 L41.7,571.3 L41.0,568.1 L40.9,563.5 L40.6,559.8 L39.3,559.0 L37.8,558.9 L36.3,558.8 L34.4,559.4 L31.3,562.8 L27.6,567.2 L24.5,570.2 L22.6,570.3 L21.1,569.7 L21.1,566.2 L21.9,561.4 L22.3,557.5 L21.2,556.5 L19.8,556.2 L18.3,555.8 L16.5,556.1 L12.7,559.2 L8.3,563.2 L4.6,565.9 L2.8,565.7 L1.4,564.8 L2.1,561.2 L3.9,556.3 L5.1,552.3 L4.2,551.0 L2.9,550.4 L1.5,549.8 L-0.3,549.8 L-4.6,552.5 L-9.8,556.1 L-13.9,558.3 L-15.7,557.9 L-16.8,556.7 L-15.4,553.0 L-12.7,548.1 L-10.6,544.1 L-11.2,542.7 L-12.4,541.8 L-13.6,541.0 L-15.5,540.7 L-20.2,542.9 L-26.0,545.8 L-30.5,547.5 L-32.1,546.7 L-33.0,545.4 L-30.9,541.7 L-27.1,536.9 L-24.4,533.0 L-24.6,531.4 L-25.7,530.4 L-26.6,529.3 L-28.4,528.7 L-33.5,530.2 L-39.8,532.4 L-44.6,533.5 L-46.0,532.4 L-46.6,530.8 L-43.7,527.3 L-39.1,522.9 L-35.5,519.2 L-35.5,517.5 L-36.2,516.2 L-37.0,515.0 L-38.6,514.1 L-43.9,514.9 L-50.5,516.1 L-55.5,516.5 L-56.7,515.1 L-56.9,513.4 L-53.4,510.1 L-47.8,506.2 L-43.6,503.0 L-43.2,501.2 L-43.7,499.7 L-44.2,498.3 L-45.5,497.1 L-50.9,497.0 L-57.7,497.3 L-62.7,496.8 L-63.6,495.2 L-63.5,493.4 L-59.3,490.5 L-53.0,487.4 L-48.1,484.7 L-47.4,482.9 L-47.6,481.3 L-47.7,479.6 L-48.8,478.2 L-54.1,477.3 L-60.9,476.4 L-65.6,475.1 L-66.2,473.3 L-65.7,471.3 L-61.0,469.1 L-54.1,466.8 L-48.8,464.8 L-47.7,463.0 L-47.5,461.3 L-47.3,459.6 L-48.1,457.9 L-53.1,456.1 L-59.6,454.0 L-64.0,451.9 L-64.2,449.9 L-63.3,447.9 L-58.1,446.4 L-51.0,445.2 L-45.3,444.0 L-43.9,442.4 L-43.4,440.6 L-42.8,438.9 L-43.2,437.0 L-47.7,434.2 L-53.6,431.0 L-57.5,428.0 L-57.3,425.9 L-56.0,424.0 L-50.6,423.3 L-43.4,423.3 L-37.6,423.0 L-35.8,421.6 L-35.0,419.9 L-34.1,418.2 L-34.1,416.2 L-37.9,412.5 L-43.0,408.2 L-46.2,404.4 L-45.5,402.3 L-43.9,400.6 L-38.5,400.8 L-31.4,402.0 L-25.8,402.8 L-23.8,401.6 L-22.6,400.0 L-21.4,398.4 L-21.0,396.3 L-24.0,391.9 L-28.0,386.6 L-30.4,382.1 L-29.3,380.1 L-27.3,378.6 L-22.1,379.8 L-15.5,382.3 L-10.2,384.0 L-8.1,383.2 L-6.6,381.7 L-5.1,380.3 L-4.3,378.3 L-6.3,373.3 L-9.1,367.1 L-10.5,362.2 L-9.0,360.2 L-6.8,359.1 L-2.1,361.2 L3.8,364.9 L8.5,367.6 L10.8,367.2 Z M128.4,448.2 L128.3,450.7 L128.0,453.1 L127.6,455.6 L127.0,458.0 L126.3,460.5 L125.5,462.9 L124.6,465.4 L123.5,467.7 L122.4,470.1 L121.1,472.4 L119.7,474.7 L118.1,477.0 L116.5,479.1 L114.8,481.3 L113.0,483.3 L111.1,485.3 L109.1,487.2 L107.1,489.1 L104.9,490.9 L102.7,492.5 L100.4,494.1 L98.1,495.6 L95.7,497.0 L93.2,498.3 L90.8,499.5 L88.2,500.6 L85.7,501.6 L83.1,502.5 L80.5,503.3 L77.9,503.9 L75.3,504.5 L72.6,504.9 L70.0,505.2 L67.4,505.4 L64.8,505.4 L62.3,505.4 L59.7,505.2 L57.2,504.9 L54.8,504.4 L52.4,503.9 L50.0,503.2 L47.7,502.4 L45.5,501.4 L43.4,500.4 L41.3,499.2 L39.3,498.0 L37.4,496.6 L35.7,495.1 L34.0,493.5 L32.4,491.8 L30.9,490.0 L29.6,488.1 L28.4,486.1 L27.3,484.0 L26.3,481.9 L25.5,479.6 L24.8,477.3 L24.3,475.0 L23.9,472.5 L23.7,470.1 L23.6,467.6 L23.6,465.0 L23.8,462.4 L24.2,459.8 L24.7,457.2 L25.3,454.6 L26.1,452.0 L27.1,449.4 L28.2,446.8 L29.5,444.2 L30.8,441.7 L32.4,439.2 L34.0,436.7 L35.8,434.3 L37.7,432.0 L39.7,429.8 L41.9,427.6 L44.1,425.5 L46.5,423.6 L48.9,421.7 L51.4,419.9 L54.0,418.2 L56.7,416.7 L59.4,415.3 L62.1,414.0 L64.9,412.8 L67.8,411.8 L70.6,410.9 L73.5,410.1 L76.4,409.5 L79.3,409.0 L82.1,408.7 L85.0,408.5 L87.8,408.5 L90.5,408.6 L93.2,408.8 L95.9,409.2 L98.5,409.8 L101.0,410.4 L103.5,411.2 L105.8,412.2 L108.1,413.2 L110.3,414.4 L112.4,415.7 L114.3,417.1 L116.2,418.6 L117.9,420.3 L119.5,422.0 L121.0,423.8 L122.4,425.7 L123.6,427.7 L124.7,429.8 L125.6,431.9 L126.4,434.1 L127.1,436.3 L127.7,438.6 L128.1,441.0 L128.3,443.4 L128.5,445.8 Z"/><line x1="218.16" y1="554.10" x2="256.87" y2="305.77" stroke="#cc2a22" stroke-width="1.0" shape-rendering="crispEdges"/><line x1="256.87" y1="305.77" x2="-37.48" y2="339.88" stroke="#cc2a22" stroke-width="1.0" shape-rendering="crispEdges"/><line x1="218.16" y1="554.10" x2="-19.39" y2="608.27" stroke="#cc2a22" stroke-width="1.0" shape-rendering="crispEdges"/></svg><div class="a" style="left:902px;top:74px;width:1px;height:599px;background:#e8fcf4"></div><div class="a" style="left:908px;top:66px;font-size:14px;color:#6a8cac;line-height:15px">Z</div><div class="a" style="left:908px;top:81px;width:20px;height:600px;border:1px solid #6c9cc4;border-radius:4px;background:#90cef6"></div><div class="a" style="left:916px;top:83px;width:3px;height:600px;background:#8c9ca8"></div><div class="a" style="left:919px;top:83px;width:1px;height:600px;background:#cfeaff"></div><div class="a" style="left:910px;top:493px;width:16px;height:12px;border:1px solid #6c9cc4;border-radius:3px;background:#a8d8f8"></div><div class="a" style="left:912px;top:496px;width:12px;height:5px;border:1px solid #6c9cc4;background:#c8e8fc"></div><div class="a" style="left:933px;top:82px;width:180px;height:600px;border-left:1px solid #2f4a62;"></div><div class="a" style="left:934px;top:82px;width:1px;height:600px;background:#c8ecff"></div><div class="a" style="left:1095px;top:101px;width:1px;height:580px;background:#e4f8ff"></div><div class="a" style="left:1110px;top:101px;width:1px;height:580px;background:#0c1a28"></div><div class="a" style="left:1112px;top:101px;width:1px;height:580px;background:#4a7294"></div><div class="a" style="left:958px;top:48px;width:130px;height:30px;border:1px solid #2a5c88;border-radius:4px;background:linear-gradient(#6cbcf4,#48aaee 4px,#44a8ee)"></div><div class="a" style="left:961px;top:52px;font-size:19.5px;font-weight:bold;color:#080c14;line-height:22px">Open Models</div><div class="a" style="left:933px;top:83px;width:180px;height:100px;border:1px solid #2a5c88;border-radius:3px;background:#48aaee;box-shadow:inset 1px 1px 0 #bfe6ff"></div><div class="a" style="left:938px;top:90px;width:75px;height:75px;background:#3c3c3c;overflow:hidden"><svg width="75" height="75"><defs><linearGradient id="tg" x1="0" y1="0.9" x2="0.6" y2="0"><stop offset="0" stop-color="#4e4e4e"/><stop offset="0.45" stop-color="#8c8c8c"/><stop offset="1" stop-color="#c4c4c4"/></linearGradient></defs><g transform="rotate(-28 40 46)"><ellipse cx="38" cy="42" rx="36" ry="41" fill="url(#tg)"/><ellipse cx="44" cy="53" rx="30" ry="35" fill="none" stroke="#d2d2d2" stroke-width="8"/><ellipse cx="44" cy="53" rx="30" ry="35" fill="none" stroke="#3e3e3e" stroke-width="7" stroke-dasharray="2.4 3.0"/><ellipse cx="46" cy="57" rx="26" ry="31" fill="#bdbdbd"/></g></svg></div><div class="a" style="left:938px;top:166px;font-size:14px;color:#10204a;line-height:16px">ICE</div><div class="a" style="left:1019px;top:88px;font-size:14px;color:#10204a;line-height:16px">Count</div><div class="a" style="left:1019px;top:104px;width:66px;height:20px;background:#fff;border-top:2px solid #000;border-left:2px solid #000;border-right:1px solid #d0d0d0;border-bottom:1px solid #d0d0d0"></div><div class="a" style="left:1023px;top:106px;font-size:14px;color:#000;line-height:16px">1</div><div class="a" style="left:1080px;top:86px;width:13px;height:15px;border:1px solid #3a6a94;border-radius:2px;background:#8ccaf4"></div><svg class="a" style="left:1080px;top:86px" width="13" height="15"><path d="M3 3 L10 12 M10 3 L3 12" stroke="#202838" stroke-width="1"/></svg><div class="a" style="left:1095px;top:86px;width:16px;height:15px;background:#8ccaf4;border:1px solid #3a6a94;border-top-color:#e8f8ff;border-left-color:#e8f8ff"></div><svg class="a" style="left:1097px;top:89px" width="12" height="8"><path d="M1 7 L6 1.5 L11 7 Z" fill="#000"/></svg><div class="a" style="left:1096px;top:102px;width:14px;height:580px;background:#8ccaf4;border-left:1px solid #e4f8ff;border-right:1px solid #1a2a3a"></div><div class="a" style="left:956px;top:125px;width:162px;height:83px;background:#8ccaf4;border-top:1px solid #d8f2ff;border-left:1px solid #d8f2ff;border-right:2px solid #1c2c3c;border-bottom:2px solid #1c2c3c"></div><div class="a" style="left:961px;top:128px;font-size:14px;color:#0c1420;line-height:16px;letter-spacing:0.1px">Revert to original height</div><div class="a" style="left:961px;top:148px;font-size:14px;color:#0c1420;line-height:16px;letter-spacing:0.1px">Scale by X</div><div class="a" style="left:961px;top:168px;font-size:14px;color:#0c1420;line-height:16px;letter-spacing:0.1px">Inch -&gt; mm</div><div class="a" style="left:961px;top:188px;font-size:14px;color:#0c1420;line-height:16px;letter-spacing:0.1px">Delete</div><div class="a" style="left:1117px;top:24px;width:1px;height:649px;background:#5a6a7a"></div><div class="a" style="left:1118px;top:0;width:3px;height:673px;background:linear-gradient(90deg,#e6e2da,#c8c4bc)"></div><div class="a" style="left:1121px;top:0;width:1px;height:673px;background:#4a4a4a"></div><div class="a" style="left:1122px;top:0;width:4px;height:673px;background:#f6f6f6"></div><div class="a" style="left:1122px;top:47px;width:4px;height:62px;background:#e2dfd8"></div><div class="a" style="left:1122px;top:0;width:4px;height:11px;background:linear-gradient(#3a8ad8,#e8c040)"></div><div class="a" style="left:1122px;top:12px;width:4px;height:34px;background:linear-gradient(90deg,#2050b0,#5a9ae8);border-radius:6px 0 0 6px"></div><div class="a" style="left:1122px;top:110px;width:4px;height:29px;background:#2a2a2a"></div></body></html>
